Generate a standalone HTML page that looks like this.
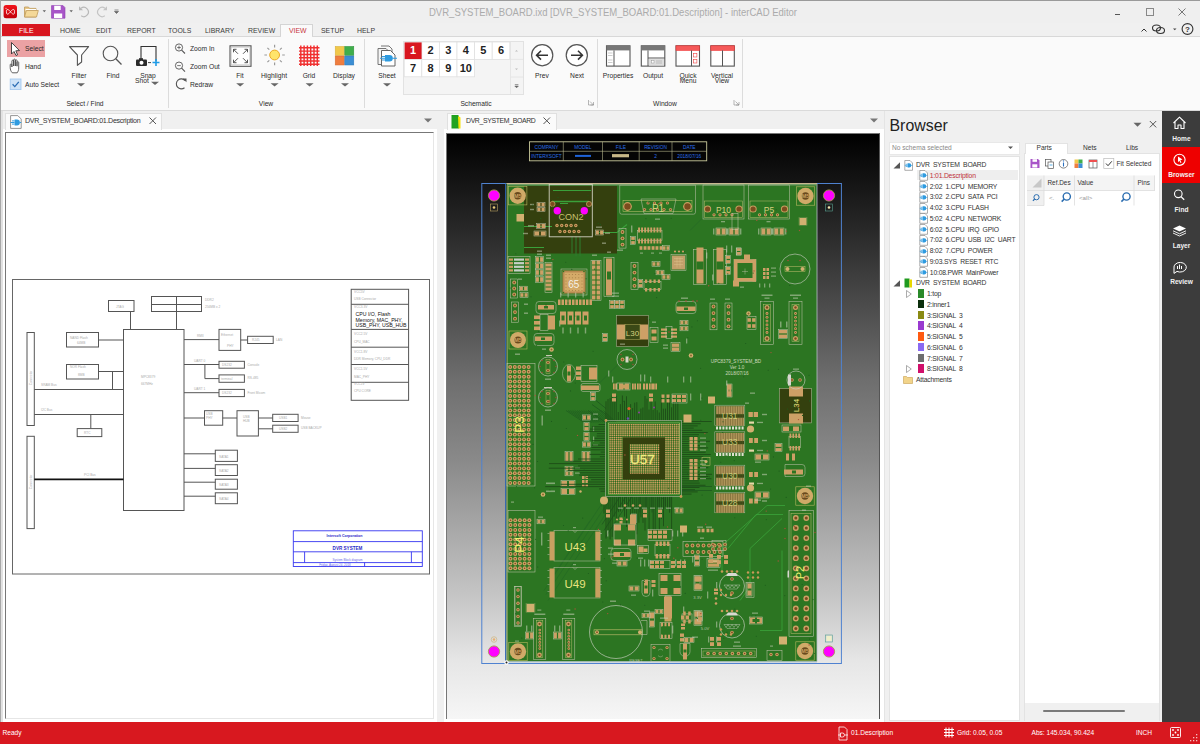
<!DOCTYPE html>
<html><head><meta charset="utf-8">
<style>
*{box-sizing:border-box}
html,body{margin:0;padding:0;width:1200px;height:744px;overflow:hidden;background:#f0f0f0;font-family:"Liberation Sans",sans-serif;color:#333}
.a{position:absolute}
.t{position:absolute;white-space:nowrap;line-height:1}
.rl{font-size:6.7px;color:#2a2a2a;text-align:center}
.sep{position:absolute;width:1px;background:#dcdcdc}
.tr{font-size:6.8px;color:#333;letter-spacing:-.2px;word-spacing:1.6px}
.sb{width:38px;text-align:center;font-size:6.6px;font-weight:bold;color:#f2f2f2}
.st{top:729.5px;font-size:6.6px;color:#fff}
.tab{position:absolute;font-size:6.9px;color:#3a3a3a;top:26.5px;white-space:nowrap}
</style></head><body>
<!-- window frame -->
<div class="a" style="left:0;top:0;width:1200px;height:1px;background:#9a9a9a"></div>
<div class="a" style="left:0;top:0;width:1px;height:744px;background:#a8a8a8"></div>

<!-- title bar -->
<div id="titlebar" class="a" style="left:1px;top:1px;width:1199px;height:22px;background:#efefef"></div>
<div class="t" style="left:429px;top:7.2px;font-size:11px;color:#ababab;transform:scaleX(.865);transform-origin:0 0">DVR_SYSTEM_BOARD.ixd [DVR_SYSTEM_BOARD:01.Description] - interCAD Editor</div>

<!-- ribbon tabs -->
<div class="a" style="left:2px;top:24px;width:48px;height:12px;background:#d8161f"></div>
<div class="tab" style="left:19px;color:#fff">FILE</div>
<div class="tab" style="left:60px">HOME</div>
<div class="tab" style="left:96px">EDIT</div>
<div class="tab" style="left:127px">REPORT</div>
<div class="tab" style="left:168px">TOOLS</div>
<div class="tab" style="left:205px">LIBRARY</div>
<div class="tab" style="left:248px">REVIEW</div>
<div class="a" style="left:280px;top:24px;width:33px;height:13px;background:#fafafa;border:1px solid #d4d4d4;border-bottom:none"></div>
<div class="tab" style="left:289px;color:#c8353a">VIEW</div>
<div class="a" style="left:281px;top:36px;width:31px;height:2px;background:#fafafa;z-index:2"></div>
<div class="tab" style="left:321px">SETUP</div>
<div class="tab" style="left:357px">HELP</div>

<!-- ribbon body -->
<div id="ribbon" class="a" style="left:1px;top:36px;width:1199px;height:75px;background:#fafafa;border-top:1px solid #d8d8d8;border-bottom:1px solid #dadada"></div>


<!-- quick access -->
<svg class="a" style="left:0;top:0" width="130" height="23" viewBox="0 0 130 23">
  <defs><linearGradient id="lg" x1="0" y1="0" x2="0" y2="1"><stop offset="0" stop-color="#f2141c"/><stop offset="1" stop-color="#c2000a"/></linearGradient></defs>
  <rect x="3.6" y="5" width="13.4" height="13.2" rx="2.5" fill="url(#lg)"/>
  <path d="M7.2 9.4 C8.6 9.4 10.3 11.3 10.4 11.7 C10.3 12.1 8.6 14.2 7.2 14.2 C6.2 14.2 6.1 9.4 7.2 9.4 Z M13.7 9.4 C14.8 9.4 14.8 14.2 13.7 14.2 C12.3 14.2 10.6 12.1 10.5 11.7 C10.6 11.3 12.3 9.4 13.7 9.4 Z" fill="none" stroke="#fff" stroke-width=".8"/>
  <circle cx="6" cy="8.3" r=".55" fill="#fff"/>
  <!-- folder -->
  <path d="M24.5 7 h4 l1 1.4 h6.5 v8.6 h-11.5z" fill="#e8c98a" stroke="#bf9a5a" stroke-width=".8"/>
  <path d="M25.5 9 h10.5 v1.5 h-10.5z" fill="#fff"/>
  <path d="M24.5 17 l1.8 -6.5 h12 l-1.8 6.5z" fill="#f4d898" stroke="#bf9a5a" stroke-width=".8"/>
  <path d="M42.6 10.3 h3.4 l-1.7 2z" fill="#666"/>
  <!-- save -->
  <path d="M51.5 5.6 h11.5 l2 2 v10.6 h-13.5z" fill="#a855c8" stroke="#8e3fb0" stroke-width=".6"/>
  <rect x="54.2" y="5.8" width="6.5" height="4.2" fill="#fff"/>
  <rect x="54" y="13.5" width="8.2" height="4.5" fill="#fff"/>
  <path d="M69.5 10.3 h3.4 l-1.7 2z" fill="#666"/>
  <!-- undo / redo -->
  <path d="M81 8.3 A4.6 4.6 0 1 1 81.2 15.8" fill="none" stroke="#b8b8b8" stroke-width="1.2"/>
  <path d="M79 6.2 v4 h4z" fill="#b8b8b8"/>
  <path d="M105 8.3 A4.6 4.6 0 1 0 104.8 15.8" fill="none" stroke="#c4c4c4" stroke-width="1.2"/>
  <path d="M107 6.2 v4 h-4z" fill="#c4c4c4"/>
  <path d="M114.5 10 h4 M114.5 11.5 h4 l-2 2z" stroke="#666" stroke-width=".7" fill="#666"/>
</svg>
<!-- window controls -->
<svg class="a" style="left:1100px;top:0" width="100" height="40" viewBox="1100 0 100 40">
  <path d="M1115 14.5 h5" stroke="#555" stroke-width="1"/>
  <rect x="1146.5" y="8.5" width="7" height="7" fill="none" stroke="#888" stroke-width="1"/>
  <path d="M1178.5 8.5 l7 7 M1185.5 8.5 l-7 7" stroke="#777" stroke-width="1"/>
  <path d="M1141.5 31.5 l2.5 -2.5 l2.5 2.5" fill="none" stroke="#333" stroke-width="1"/>
  <ellipse cx="1156.5" cy="28" rx="4" ry="3" fill="none" stroke="#333" stroke-width="1.1"/>
  <ellipse cx="1160.5" cy="30.5" rx="4" ry="3" fill="none" stroke="#333" stroke-width="1.1"/>
  <path d="M1173 28.5 h3.5 l-1.75 1.8z" fill="#444"/>
  <circle cx="1187.5" cy="29" r="5.4" fill="none" stroke="#333" stroke-width="1.1"/>
  <text x="1187.5" y="32" font-size="8" font-weight="bold" text-anchor="middle" fill="#333" font-family="Liberation Sans">?</text>
</svg>

<!-- ===== Ribbon: Select / Find ===== -->
<div class="a" style="left:7px;top:39.5px;width:38px;height:17.5px;background:#eba2a4"></div>
<svg class="a" style="left:0;top:36px" width="365" height="74" viewBox="0 36 365 74">
  <!-- cursor -->
  <path d="M11.5 42.5 L11.5 54 L14 51.5 L16 55.5 L17.6 54.8 L15.8 50.8 L19.5 50.6 Z" fill="#fff" stroke="#333" stroke-width=".9" stroke-linejoin="round"/>
  <!-- hand -->
  <path d="M12.3 72.8 C10.8 71.2 10.2 69.5 10.2 67.5 L10.2 64.8 C10.2 63.7 11.9 63.7 11.9 64.8 L11.9 67 L11.9 61 C11.9 59.9 13.6 59.9 13.6 61 L13.6 66 L13.6 59.9 C13.6 58.8 15.3 58.8 15.3 59.9 L15.3 66 L15.3 60.6 C15.3 59.5 17 59.5 17 60.6 L17 66.2 L17 62.5 C17 61.4 18.7 61.4 18.7 62.5 L18.7 68 C18.7 70.2 18 71.6 17.2 72.8 Z" fill="#fff" stroke="#444" stroke-width=".85" stroke-linejoin="round"/>
  <!-- checkbox -->
  <rect x="10.2" y="79" width="10.8" height="10.6" fill="#cfe3f7" stroke="#9fc6ee" stroke-width=".8"/>
  <path d="M12.6 84.3 L14.8 86.6 L18.8 81.8" fill="none" stroke="#2b6cb3" stroke-width="1.3"/>
  <!-- funnel -->
  <path d="M69.5 46.6 L88.6 46.6 L81.6 55 L81.6 62 L77.4 65.3 L77.4 55 Z" fill="#fff" stroke="#555" stroke-width="1.1" stroke-linejoin="round"/>
  <path d="M77 83.2 h8 l-4 3.2z" fill="#666"/>
  <!-- find -->
  <circle cx="110.5" cy="53.5" r="7.3" fill="none" stroke="#555" stroke-width="1.1"/>
  <path d="M115.8 58.8 L121.5 64.5" stroke="#555" stroke-width="1.3"/>
  <!-- snapshot -->
  <path d="M141 61 V46.5 H156 V61" fill="none" stroke="#333" stroke-width="1.1"/>
  <rect x="136" y="59.5" width="11" height="6.5" rx="1" fill="#2b2b2b"/>
  <rect x="139" y="58.2" width="4" height="2" fill="#2b2b2b"/>
  <circle cx="141.5" cy="62.8" r="2" fill="#fff"/>
  <path d="M148 62.6 h3" stroke="#444" stroke-width="1"/>
  <path d="M152.5 62.5 h7 M156 59 v7" stroke="#1e9be6" stroke-width="1.6"/>
  <path d="M151 81.8 h8 l-4 3.2z" fill="#666"/>
  <!-- Zoom in/out/redraw -->
  <circle cx="179" cy="47.5" r="3.6" fill="none" stroke="#555" stroke-width=".9"/>
  <path d="M181.6 50.1 L185 53.5" stroke="#555" stroke-width="1.1"/>
  <path d="M177.2 47.5 h3.6 M179 45.7 v3.6" stroke="#555" stroke-width=".8"/>
  <circle cx="179" cy="65.6" r="3.6" fill="none" stroke="#555" stroke-width=".9"/>
  <path d="M181.6 68.2 L185 71.6" stroke="#555" stroke-width="1.1"/>
  <path d="M177.2 65.6 h3.6" stroke="#555" stroke-width=".8"/>
  <path d="M185 80.5 A5 5 0 1 0 184.5 87.8" fill="none" stroke="#555" stroke-width="1.1"/>
  <path d="M182.5 78.5 h4 v3.8z" fill="#555"/>
  <!-- Fit -->
  <rect x="230" y="45.8" width="21" height="20.5" fill="#fff" stroke="#555" stroke-width="1.1"/>
  <rect x="231.6" y="47.4" width="17.8" height="17.3" fill="none" stroke="#c8c8c8" stroke-width=".6"/>
  <path d="M233.5 49.3 l4.5 4.5 M233.5 49.3 h3 M233.5 49.3 v3 M247.5 49.3 l-4.5 4.5 M247.5 49.3 h-3 M247.5 49.3 v3 M233.5 62.7 l4.5 -4.5 M233.5 62.7 h3 M233.5 62.7 v-3 M247.5 62.7 l-4.5 -4.5 M247.5 62.7 h-3 M247.5 62.7 v-3" stroke="#444" stroke-width=".9" fill="none"/>
  <path d="M236.2 83.2 h8 l-4 3.2z" fill="#666"/>
  <!-- Highlight sun -->
  <circle cx="274.6" cy="55" r="4.9" fill="#ffe46b" stroke="#eba92a" stroke-width="1"/>
  <g stroke="#9a9a9a" stroke-width="1.2">
   <path d="M274.6 44.8 v2.6 M274.6 62.6 v2.6 M264.4 55 h2.6 M282.2 55 h2.6 M267.4 47.8 l1.9 1.9 M279.9 60.3 l1.9 1.9 M281.8 47.8 l-1.9 1.9 M269.3 60.3 l-1.9 1.9"/>
  </g>
  <path d="M270.6 83.2 h8 l-4 3.2z" fill="#666"/>
  <!-- Grid -->
  <g stroke="#f03030" stroke-width="1.45">
   <path d="M299 47.8 h20.5 M299 51.1 h20.5 M299 54.4 h20.5 M299 57.7 h20.5 M299 61 h20.5 M299 64.3 h20.5"/>
   <path d="M300.8 45.5 v20.6 M304.1 45.5 v20.6 M307.4 45.5 v20.6 M310.7 45.5 v20.6 M314 45.5 v20.6 M317.3 45.5 v20.6"/>
  </g>
  <path d="M305.6 83.2 h8 l-4 3.2z" fill="#666"/>
  <!-- Display -->
  <rect x="335.2" y="46.4" width="9" height="9" fill="#f1c84a" stroke="#d6ad3a" stroke-width=".5"/>
  <rect x="344.8" y="46.4" width="9" height="9" fill="#3fae4b" stroke="#2e8f3a" stroke-width=".5"/>
  <rect x="335.2" y="56" width="9" height="9" fill="#ef7d3f" stroke="#d36a30" stroke-width=".5"/>
  <rect x="344.8" y="56" width="9" height="9" fill="#3b8ed4" stroke="#2c78b8" stroke-width=".5"/>
  <path d="M341 83.2 h8 l-4 3.2z" fill="#666"/>
</svg>
<div class="sep" style="left:167.5px;top:39px;height:69px"></div>
<div class="sep" style="left:364px;top:39px;height:69px"></div>
<div class="t rl" style="left:25px;top:45.5px">Select</div>
<div class="t rl" style="left:25px;top:63.5px">Hand</div>
<div class="t rl" style="left:25px;top:81.5px">Auto Select</div>
<div class="t rl" style="left:59px;width:40px;top:72.5px">Filter</div>
<div class="t rl" style="left:93px;width:40px;top:72.5px">Find</div>
<div class="t rl" style="left:128px;width:40px;top:72.5px">Snap</div>
<div class="t rl" style="left:135px;top:78px">Shot</div>
<div class="t rl" style="left:45px;width:80px;top:101px">Select / Find</div>
<div class="t rl" style="left:190px;top:45.5px">Zoom In</div>
<div class="t rl" style="left:190px;top:63.5px">Zoom Out</div>
<div class="t rl" style="left:190px;top:81.5px">Redraw</div>
<div class="t rl" style="left:220px;width:40px;top:72.5px">Fit</div>
<div class="t rl" style="left:254px;width:40px;top:72.5px">Highlight</div>
<div class="t rl" style="left:289px;width:40px;top:72.5px">Grid</div>
<div class="t rl" style="left:324px;width:40px;top:72.5px">Display</div>
<div class="t rl" style="left:226px;width:80px;top:101px">View</div>

<!-- ===== Ribbon: Schematic ===== -->
<svg class="a" style="left:365px;top:36px" width="380" height="74" viewBox="365 36 380 74">
  <!-- sheet icon -->
  <path d="M378 48.5 h8 l3 3 v13 h-11z" fill="#f4f4f4" stroke="#666" stroke-width=".9"/>
  <path d="M381 46 h8 l3 3 v13" fill="none" stroke="#666" stroke-width=".9"/>
  <path d="M381.5 50.5 h9 l4.5 4.5 v11 h-13.5z" fill="#fff" stroke="#555" stroke-width=".9"/>
  <path d="M385 55 h4.5 a3.3 3.3 0 0 1 0 6.6 h-4.5z" fill="#2e9be0"/>
  <path d="M380 58.3 h5 M392.5 58.3 h4.5 M382 56.5 h3 M382 60 h3" stroke="#2e9be0" stroke-width="1.1"/>
  <path d="M383 83.2 h8 l-4 3.2z" fill="#666"/>
  <!-- gallery -->
  <rect x="403.5" y="41.5" width="120" height="53" fill="#f4f4f4" stroke="#e2e2e2" stroke-width="1"/>
  <g fill="#fff" stroke="#e0e0e0" stroke-width=".8">
   <rect x="421.8" y="42" width="17.6" height="17.4"/><rect x="439.4" y="42" width="17.6" height="17.4"/><rect x="457" y="42" width="17.6" height="17.4"/><rect x="474.6" y="42" width="17.6" height="17.4"/><rect x="492.2" y="42" width="17.6" height="17.4"/>
   <rect x="404.2" y="59.4" width="17.6" height="17.4"/><rect x="421.8" y="59.4" width="17.6" height="17.4"/><rect x="439.4" y="59.4" width="17.6" height="17.4"/><rect x="457" y="59.4" width="17.6" height="17.4"/>
  </g>
  <rect x="404.6" y="42.4" width="17" height="16.6" fill="#d8161f"/>
  <path d="M510.5 42 v52.5 M510.5 59.4 h13 M510.5 77 h13" stroke="#e2e2e2" stroke-width=".8"/>
  <path d="M515 51.5 l1.5 -1.5 l1.5 1.5z M515 68.5 l1.5 1.5 l1.5 -1.5z" fill="#bbb"/>
  <path d="M514.8 84.5 h3.6 M514.8 86 h3.6 l-1.8 1.8z" stroke="#666" stroke-width=".6" fill="#666"/>
  <!-- prev/next -->
  <circle cx="542.2" cy="55.2" r="10.6" fill="#fff" stroke="#555" stroke-width="1.2"/>
  <path d="M536.5 55.2 h11.5 M541 50.8 l-4.4 4.4 l4.4 4.4" fill="none" stroke="#333" stroke-width="1.6"/>
  <circle cx="576.8" cy="55.2" r="10.6" fill="#fff" stroke="#555" stroke-width="1.2"/>
  <path d="M571 55.2 h11.5 M578 50.8 l4.4 4.4 l-4.4 4.4" fill="none" stroke="#333" stroke-width="1.6"/>
  <!-- dialog launchers -->
  <path d="M588.5 100 v5 h5 M590 101.5 l3.5 3.5 M593.5 102 v3 h-3" fill="none" stroke="#888" stroke-width=".6"/>
  <path d="M734 100 v5 h5 M735.5 101.5 l3.5 3.5 M739 102 v3 h-3" fill="none" stroke="#888" stroke-width=".6"/>
  <!-- window icons -->
  <rect x="606.5" y="45.8" width="23.5" height="20.3" fill="#fff" stroke="#555" stroke-width="1.1"/>
  <rect x="606.5" y="45.8" width="23.5" height="4.6" fill="#777"/>
  <path d="M614 50.4 v15.7" stroke="#555" stroke-width="1"/>
  <path d="M608 53 h4.5 M608 55.5 h4.5 M608 60 h4.5 M608 62.5 h4.5" stroke="#aaa" stroke-width=".6"/>
  <rect x="641.3" y="45.8" width="23.5" height="20.3" fill="#fff" stroke="#555" stroke-width="1.1"/>
  <rect x="641.3" y="45.8" width="23.5" height="4.6" fill="#777"/>
  <path d="M648 50.4 v15.7 M648 58 h16.8" stroke="#555" stroke-width="1"/>
  <rect x="649" y="59" width="15" height="6.5" fill="#ddd"/>
  <rect x="651.5" y="60.5" width="2.5" height="2.5" fill="#fff" stroke="#888" stroke-width=".4"/>
  <path d="M656 61 h6 M656 63 h6" stroke="#999" stroke-width=".5"/>
  <rect x="676" y="45.8" width="23.5" height="20.3" fill="#fff" stroke="#555" stroke-width="1.1"/>
  <rect x="676" y="45.8" width="23.5" height="4.6" fill="#f55a5a" stroke="#ee3030" stroke-width=".6"/>
  <path d="M691.5 50.4 v15.7" stroke="#555" stroke-width="1"/>
  <rect x="693.4" y="53.5" width="3.5" height="3.5" fill="#fff" stroke="#f04040" stroke-width=".6"/>
  <rect x="693.4" y="59.5" width="3.5" height="3.5" fill="#fff" stroke="#f04040" stroke-width=".6"/>
  <rect x="710.8" y="45.8" width="23.5" height="20.3" fill="#fff" stroke="#555" stroke-width="1.1"/>
  <rect x="710.8" y="45.8" width="23.5" height="4.6" fill="#f55a5a" stroke="#ee3030" stroke-width=".6"/>
  <path d="M722.5 50.4 v15.7" stroke="#555" stroke-width="1"/>
</svg>
<div class="t" style="left:404.6px;top:45px;width:17px;text-align:center;font-size:11px;font-weight:bold;color:#fff">1</div>
<div class="t" style="left:421.8px;top:45px;width:17.6px;text-align:center;font-size:11px;font-weight:bold;color:#222">2</div>
<div class="t" style="left:439.4px;top:45px;width:17.6px;text-align:center;font-size:11px;font-weight:bold;color:#222">3</div>
<div class="t" style="left:457px;top:45px;width:17.6px;text-align:center;font-size:11px;font-weight:bold;color:#222">4</div>
<div class="t" style="left:474.6px;top:45px;width:17.6px;text-align:center;font-size:11px;font-weight:bold;color:#222">5</div>
<div class="t" style="left:492.2px;top:45px;width:17.6px;text-align:center;font-size:11px;font-weight:bold;color:#222">6</div>
<div class="t" style="left:404.2px;top:62.5px;width:17.6px;text-align:center;font-size:11px;font-weight:bold;color:#222">7</div>
<div class="t" style="left:421.8px;top:62.5px;width:17.6px;text-align:center;font-size:11px;font-weight:bold;color:#222">8</div>
<div class="t" style="left:439.4px;top:62.5px;width:17.6px;text-align:center;font-size:11px;font-weight:bold;color:#222">9</div>
<div class="t" style="left:457px;top:62.5px;width:17.6px;text-align:center;font-size:11px;font-weight:bold;color:#222">10</div>
<div class="sep" style="left:596.5px;top:39px;height:69px"></div>
<div class="sep" style="left:741.5px;top:39px;height:69px"></div>
<div class="t rl" style="left:367px;width:40px;top:72.5px">Sheet</div>
<div class="t rl" style="left:522px;width:40px;top:72.5px">Prev</div>
<div class="t rl" style="left:557px;width:40px;top:72.5px">Next</div>
<div class="t rl" style="left:436px;width:80px;top:101px">Schematic</div>
<div class="t rl" style="left:598px;width:40px;top:72.5px">Properties</div>
<div class="t rl" style="left:633px;width:40px;top:72.5px">Output</div>
<div class="t rl" style="left:668px;width:40px;top:72.5px;line-height:5.4px">Quick<br>Menu</div>
<div class="t rl" style="left:702px;width:40px;top:72.5px;line-height:5.4px">Vertical<br>View</div>
<div class="t rl" style="left:625px;width:80px;top:101px">Window</div>


<!-- doc area bg -->
<div class="a" style="left:1px;top:111px;width:1199px;height:611px;background:#f0f0f0"></div>
<div class="a" style="left:1px;top:111px;width:1.5px;height:611px;background:#e2e2e2"></div>

<!-- LEFT PANEL -->
<div class="a" style="left:2.5px;top:129px;width:434.5px;height:593px;background:#fff"></div>
<div class="a" style="left:4.5px;top:112.5px;width:157px;height:17px;background:#fbfbfb;border:1px solid #e0e0e0;border-bottom:none"></div>
<svg class="a" style="left:10px;top:114.5px" width="13" height="14" viewBox="0 0 13 14">
  <path d="M.6 .6 h7.2 l3.4 3.4 v9.4 h-10.6z" fill="#fff" stroke="#7a7a7a" stroke-width=".8"/>
  <path d="M4.6 4.6 h2.4 a2.9 2.9 0 0 1 0 5.8 h-2.4z" fill="#2e9be0"/>
  <path d="M.6 7.5 h4 M9.9 7.5 h1.3 M2 5.9 h2.6 M2 9.1 h2.6" stroke="#2e9be0" stroke-width="1"/>
</svg>
<div class="t" style="left:25px;top:117.5px;font-size:7.1px;color:#333;letter-spacing:-.3px">DVR_SYSTEM_BOARD:01.Description</div>
<svg class="a" style="left:148px;top:116px" width="10" height="10"><path d="M1.5 1.5 l6.5 6.5 M8 1.5 l-6.5 6.5" stroke="#555" stroke-width="1"/></svg>
<svg class="a" style="left:424px;top:118px" width="10" height="6"><path d="M0 0.5 h8 l-4 4z" fill="#777"/></svg>
<div id="lcanvas" class="a" style="left:5px;top:131.5px;width:429px;height:587px;background:#fff;border-left:1.2px solid #777;border-top:1.2px solid #777;border-right:1px solid #e6e6e6;border-bottom:1px solid #e6e6e6"></div>


<svg class="a" style="left:6px;top:133px" width="427" height="585" viewBox="6 133 427 585" font-family="Liberation Sans">
 <g fill="none" stroke="#555" stroke-width="1">
  <rect x="12.5" y="279.5" width="417" height="294.5" stroke="#666"/>
  <rect x="108.5" y="300.5" width="25.5" height="11"/>
  <rect x="151.5" y="296.5" width="50" height="15"/>
  <path d="M151.5 304.5 h50 M176.5 296.5 v15"/>
  <path d="M130.5 311.5 v18 M176.5 311.5 v18"/>
  <rect x="123.5" y="329.5" width="60.5" height="181"/>
  <rect x="66.5" y="332.5" width="32" height="14.5"/>
  <rect x="66.5" y="364.5" width="32" height="14.5"/>
  <path d="M98.5 340 h25 M98.5 371.5 h25 M112.5 371.5 v18"/>
  <rect x="27" y="332.5" width="7.3" height="93"/>
  <path d="M34.3 389.5 h89.2 M34.3 414.5 h89.2 M90.8 414.5 v14"/>
  <rect x="77.2" y="428.6" width="24.6" height="8"/>
  <rect x="27" y="436.3" width="7.3" height="92.3"/>
  <path d="M34.3 479.3 h89.2" stroke="#111" stroke-width="1.8"/>
  <path d="M184 339.6 h35 M240.7 340 h7 M184 364.5 h35 M204.9 364.5 v14.1 h14.1 M184 392.7 h35 M184 418 h20.5 M222.7 418 h14.3 M258.4 418 h14.3 M258.4 428.8 h14.3"/>
  <rect x="219" y="329.4" width="21.7" height="21"/>
  <rect x="247.6" y="336.3" width="25.6" height="7.2"/>
  <rect x="219" y="361.3" width="25.4" height="6.9"/>
  <rect x="219" y="374.9" width="25.4" height="7.4"/>
  <rect x="219" y="389.4" width="25.4" height="7.2"/>
  <rect x="204.5" y="410.7" width="18.2" height="14.5"/>
  <rect x="237" y="410.7" width="21.4" height="25.3"/>
  <rect x="272.7" y="414.3" width="25.4" height="7.2"/>
  <rect x="272.7" y="425.2" width="25.4" height="7.1"/>
  <path d="M184 453.8 h31.3 M184 468.4 h31.3 M184 482.2 h31.3 M184 496.2 h31.3"/>
  <rect x="215.3" y="450.2" width="22.1" height="11.2"/>
  <rect x="215.3" y="464.7" width="22.1" height="10.8"/>
  <rect x="215.3" y="479.2" width="22.1" height="10"/>
  <rect x="215.3" y="492.8" width="22.1" height="10.9"/>
  <rect x="351.2" y="289.3" width="57.4" height="111"/>
  <path d="M351.2 304.3 h57.4 M351.2 329.4 h57.4 M351.2 347.2 h57.4 M351.2 364.5 h57.4 M351.2 382.3 h57.4"/>
 </g>
 <g fill="#aaa" font-size="3.2">
  <text x="116" y="307.5">JTAG</text>
  <text x="205" y="301">DDR2</text>
  <text x="205" y="308">256MB x 2</text>
  <text x="70" y="339">NAND Flash</text><text x="77" y="343.5">64MB</text>
  <text x="70" y="368">NOR Flash</text><text x="78" y="375.5">8MB</text>
  <text x="141" y="378">MPC8379</text><text x="141" y="385">667MHz</text>
  <text x="41" y="386">SRAM Bus</text>
  <text x="41" y="411">I2C Bus</text>
  <text x="84" y="434">RTC</text>
  <text x="84" y="476">PCI Bus</text>
  <text transform="translate(32 378) rotate(-90)" text-anchor="middle">Connector</text>
  <text transform="translate(32 482) rotate(-90)" text-anchor="middle">Connector</text>
  <text x="197" y="336.5">RMII</text>
  <text x="221" y="336">Ethernet</text><text x="227" y="347">PHY</text>
  <text x="252" y="341">RJ45</text><text x="276" y="340.5">LAN</text>
  <text x="194" y="361.5">UART 0</text><text x="194" y="389.5">UART 1</text>
  <text x="222" y="366">DS232</text><text x="247.5" y="365.5">Console</text>
  <text x="221" y="380">terminal</text><text x="247.5" y="379">RS-485</text>
  <text x="222" y="394">DS232</text><text x="247.5" y="393.5">Front Micom</text>
  <text x="206" y="414.5">USB</text><text x="206" y="418.5">PHY</text>
  <text x="243" y="418">USB</text><text x="243" y="422">HUB</text>
  <text x="279" y="419">USB1</text><text x="301" y="418.5">Mouse</text>
  <text x="279" y="430">USB2</text><text x="301" y="429">USB BACKUP</text>
  <text x="219" y="457.5">SATA1</text><text x="219" y="471.5">SATA2</text><text x="219" y="485.5">SATA3</text><text x="219" y="499.5">SATA4</text>
  <text x="354" y="292.5">VCC5V</text><text x="354" y="300">USB Connector</text>
  <text x="354" y="307.5">VCC3.3V</text>
  <text x="354" y="335">VCC2.5V</text><text x="354" y="342.5">CPU_MAC</text>
  <text x="354" y="353">VCC1.8V</text><text x="354" y="360">DDR Memory, CPU_DDR</text>
  <text x="354" y="370">VCC1.5V</text><text x="354" y="377.5">MAC_PHY</text>
  <text x="354" y="385">VCC1V</text><text x="354" y="392">CPU CORE</text>
 </g>
 <g fill="#111" font-size="5.2">
  <text x="355.5" y="316">CPU I/O, Flash</text>
  <text x="355.5" y="321.5">Memory, MAC_PHY,</text>
  <text x="355.5" y="327">USB_PHY, USB_HUB</text>
 </g>
 <g fill="none" stroke="#3434f0" stroke-width=".9">
  <rect x="293.3" y="530.8" width="129" height="35.7"/>
  <path d="M293.3 541.6 h129 M293.3 551.8 h129 M293.3 562.6 h129 M304.6 551.8 v10.8 M411.4 551.8 v10.8 M364.6 562.6 v3.9"/>
 </g>
 <g fill="#2a2ac8" font-weight="bold" text-anchor="middle">
  <text x="344.5" y="536.5" font-size="3.6">Intersoft Corporation</text>
  <text x="347.5" y="549.5" font-size="4.6">DVR SYSTEM</text>
 </g>
 <g fill="#6a6ae8" font-size="3" text-anchor="middle">
  <text x="347.5" y="561">System Block diagram</text>
  <text x="335" y="565.5">Friday, August 24, 2018</text>
 </g>
</svg>

<!-- MIDDLE PANEL -->
<div class="a" style="left:444px;top:129px;width:439.5px;height:593px;background:#fff"></div>
<div class="a" style="left:446.5px;top:112.5px;width:110px;height:17px;background:#fbfbfb;border:1px solid #e0e0e0;border-bottom:none"></div>
<svg class="a" style="left:450px;top:114px" width="14" height="15" viewBox="0 0 14 15">
  <path d="M1.5 1 h6.5 l1 1 v12.5 h-7.5z" fill="#1ea01e"/>
  <path d="M8 2 l2.5 1.5 v11 h-2z" fill="#f5e10a"/>
  <path d="M2 4 h6 M2 6 h6 M2 8 h6 M2 10 h6 M2 12 h6" stroke="#36b336" stroke-width=".4"/>
</svg>
<div class="t" style="left:466px;top:117.8px;font-size:6.9px;color:#333;letter-spacing:-.35px">DVR_SYSTEM_BOARD</div>
<svg class="a" style="left:542px;top:116px" width="10" height="10"><path d="M1.5 1.5 l6.5 6.5 M8 1.5 l-6.5 6.5" stroke="#555" stroke-width="1"/></svg>
<svg class="a" style="left:869.5px;top:118px" width="10" height="6"><path d="M0 0.5 h8 l-4 4z" fill="#777"/></svg>
<div id="mcanvas" class="a" style="left:446px;top:132.5px;width:434px;height:586px;border-left:1.2px solid #777;border-top:1.2px solid #777;border-right:1px solid #555;background:linear-gradient(#000 0%,#2a2a2a 17%,#6e6e6e 42%,#8a8a8a 56%,#c8c8c8 80%,#e6e6e6 90%,#f6f6f6 100%)"></div>

<!--PCB-->
<svg class="a" style="left:447px;top:133.5px" width="433" height="585" viewBox="447 133.5 433 585" font-family="Liberation Sans">
<rect x="481.8" y="183" width="359.6" height="480" fill="none" stroke="#4f82d0" stroke-width="1"/>
<g>
<rect x="529.5" y="141.3" width="177.2" height="19.0" fill="#050505" stroke="#c8c89a" stroke-width=".9"/>
<path d="M529.5 150.8 h177.2 M563.3 141.3 v19 M602.5 141.3 v19 M639.2 141.3 v19 M672 141.3 v19" stroke="#b4b48a" stroke-width=".6"/>
<text x="546.4" y="148.4" font-size="4.8" fill="#2a6ee8" text-anchor="middle" >COMPANY</text>
<text x="582.9" y="148.4" font-size="4.8" fill="#2a6ee8" text-anchor="middle" >MODEL</text>
<text x="620.8" y="148.4" font-size="4.8" fill="#2a6ee8" text-anchor="middle" >FILE</text>
<text x="655.6" y="148.4" font-size="4.8" fill="#2a6ee8" text-anchor="middle" >REVISION</text>
<text x="689.3" y="148.4" font-size="4.8" fill="#2a6ee8" text-anchor="middle" >DATE</text>
<text x="546.4" y="157.8" font-size="4.8" fill="#2a6ee8" text-anchor="middle" >INTERXSOFT</text>
<text x="655.6" y="157.8" font-size="4.8" fill="#2a6ee8" text-anchor="middle" >2</text>
<text x="689.3" y="157.8" font-size="4.8" fill="#2a6ee8" text-anchor="middle" >2018/07/16</text>
<rect x="575.0" y="154.4" width="16.0" height="2.0" fill="#1e63d8" />
<rect x="612.0" y="153.6" width="17.0" height="3.2" fill="#c8b888" />
</g>
<circle cx="494.0" cy="195.0" r="5.6" fill="#ff00ff" stroke="#a89a50" stroke-width=".9"/>
<circle cx="829.0" cy="195.0" r="5.6" fill="#ff00ff" stroke="#a89a50" stroke-width=".9"/>
<circle cx="494.0" cy="651.0" r="5.6" fill="#ff00ff" stroke="#a89a50" stroke-width=".9"/>
<circle cx="829.0" cy="651.0" r="5.6" fill="#ff00ff" stroke="#a89a50" stroke-width=".9"/>
<rect x="490.5" y="203.5" width="7.0" height="7.0" fill="none" stroke="#b8a060" stroke-width="0.6"/>
<circle cx="494.0" cy="207.0" r="1.3" fill="#e8c878" />
<rect x="825.5" y="203.5" width="7.0" height="7.0" fill="none" stroke="#58a090" stroke-width="0.6"/>
<circle cx="829.0" cy="207.0" r="1.3" fill="#f4e8b0" />
<circle cx="494.0" cy="639.0" r="2.8" fill="none" stroke="#c8a860" stroke-width="0.5"/>
<circle cx="494.0" cy="639.0" r="1.2" fill="#e8b070" />
<rect x="825.5" y="634.5" width="7.0" height="7.0" fill="none" stroke="#58a090" stroke-width="0.6"/>
<rect x="826.5" y="635.5" width="5.0" height="5.0" fill="#f0f0c8" />
<rect x="506.5" y="182.5" width="310.5" height="478.5" fill="#2c7522" />
<path d="M506.5 183 h310.5" stroke="#c8b890" stroke-width="1"/>
<path d="M507 184.3 h309.5" stroke="#d8d8c8" stroke-width=".6"/>
<path d="M505.6 183 v478" stroke="#2e64b0" stroke-width="1"/>
<path d="M507.3 185 v476" stroke="#c8b888" stroke-width=".6"/>
<path d="M506.5 661.5 h310.5" stroke="#b8c8d8" stroke-width="1.2"/>
<path d="M817 183 v478" stroke="#b8c0c8" stroke-width=".8"/>
<circle cx="506.5" cy="662.0" r="2.2" fill="#fff" />
<circle cx="506.5" cy="662.0" r="1.0" fill="#222" />
<path d="M524 185.5 H617 V253 H524 Z" fill="#34400e"/>
<path d="M560 203 h8 M553 190 h38 M524 226 h28 M524 247 h20 M598 232 h19 l10 -8" stroke="#3aa03a" stroke-width="1.2" fill="none"/>
<path d="M572 236 v17 M576 236 v20 M580 236 v20" stroke="#2e7a2e" stroke-width="1.1"/>
<path d="M566.0 410 l18.0 12 M568.2 410 l17.7 12 M570.4 410 l17.4 12 M572.6 410 l17.1 12 M574.8 410 l16.8 12 M577.0 410 l16.5 12 M579.2 410 l16.2 12 M581.4 410 l15.9 12 M583.6 410 l15.6 12 M585.8 410 l15.3 12 M588.0 410 l15.0 12 M590.2 410 l14.7 12 M592.4 410 l14.4 12 M594.6 410 l14.1 12 M596.8 410 l13.8 12 M599.0 410 l13.5 12 M601.2 410 l13.2 12 M603.4 410 l12.9 12" stroke="#1f5e1f" stroke-width=".8" fill="none"/>
<path d="M588 410 l18 12 M592 404 l14 10 M596 400 l10 8 M682 430 h8 M682 436 h8 M682 486 h30 M682 490 h30 M620 496 l-18 28 M626 496 l-22 34 M632 496 l-26 40 M640 496 v16 M646 496 v16 M652 496 v16 M658 496 v12 M664 496 v12 M670 496 v12" stroke="#1f5a1f" stroke-width=".9" fill="none"/>
<path d="M604 500 l-60 90 M608 502 l-62 92 M612 504 l-64 96 M590 520 l-40 60" stroke="#246a24" stroke-width=".7" fill="none"/>
<path d="M728 548 l28 -34 h27 M722 572 V545 l45 -40 h18 M740 600 l10 -14 v-38 l32 -30 M760 630 h22 v-80" stroke="#3aa33a" stroke-width=".8" fill="none"/>
<path d="M596 386 l22 -22 M690 230 l14 -14 M730 268 l8 -8 M740 262 l10 -10" stroke="#256a25" stroke-width=".8" fill="none"/>
<rect x="508.5" y="186.0" width="18.4" height="18.4" fill="none" stroke="#b8b860" stroke-width="0.6"/>
<circle cx="517.7" cy="195.2" r="8.2" fill="#d0aa68" />
<circle cx="517.7" cy="195.2" r="3.7" fill="#6a4a1e" />
<text x="517.7" y="197.2" font-size="5.5" font-weight="bold" fill="#c8a060" text-anchor="middle">M5</text>
<rect x="796.3" y="186.3" width="18.4" height="18.4" fill="none" stroke="#b8b860" stroke-width="0.6"/>
<circle cx="805.5" cy="195.5" r="8.2" fill="#d0aa68" />
<circle cx="805.5" cy="195.5" r="3.7" fill="#6a4a1e" />
<text x="805.5" y="197.5" font-size="5.5" font-weight="bold" fill="#c8a060" text-anchor="middle">M5</text>
<rect x="537.0" y="201.9" width="8.0" height="4.2" fill="none" stroke="#c9c9b4" stroke-width="0.5"/>
<rect x="537.5" y="202.4" width="2.9" height="3.2" fill="#cda066" />
<rect x="541.6" y="202.4" width="2.9" height="3.2" fill="#cda066" />
<rect x="537.0" y="206.9" width="8.0" height="4.2" fill="none" stroke="#c9c9b4" stroke-width="0.5"/>
<rect x="537.5" y="207.4" width="2.9" height="3.2" fill="#cda066" />
<rect x="541.6" y="207.4" width="2.9" height="3.2" fill="#cda066" />
<rect x="530.0" y="203.3" width="4.0" height="1.4" fill="#c8d0b8" opacity=".55"/>
<rect x="530.0" y="208.3" width="4.0" height="1.4" fill="#c8d0b8" opacity=".55"/>
<rect x="516.5" y="213.5" width="7.5" height="7.5" fill="#d2b070" />
<rect x="536.5" y="223.0" width="9.0" height="5.0" fill="none" stroke="#c9c9b4" stroke-width="0.5"/>
<rect x="537.0" y="223.5" width="3.4" height="4.0" fill="#cda066" />
<rect x="541.6" y="223.5" width="3.4" height="4.0" fill="#cda066" />
<rect x="534.0" y="230.5" width="12.0" height="5.0" fill="none" stroke="#c9c9b4" stroke-width="0.5"/>
<rect x="534.5" y="231.0" width="4.6" height="4.0" fill="#cda066" />
<rect x="540.9" y="231.0" width="4.6" height="4.0" fill="#cda066" />
<rect x="528.0" y="224.6" width="6.0" height="1.4" fill="#c8d0b8" opacity=".55"/>
<rect x="523.0" y="232.3" width="5.0" height="1.4" fill="#c8d0b8" opacity=".55"/>
<rect x="549.2" y="183.9" width="43.1" height="52.4" fill="none" stroke="#d0d0c0" stroke-width="0.9"/>
<path d="M552 201 h37" stroke="#3aa03a" stroke-width="1.3"/>
<circle cx="552.5" cy="203.5" r="2.6" fill="#7b4c1e" stroke="#c8a868" stroke-width=".7"/>
<circle cx="589.0" cy="203.5" r="2.6" fill="#7b4c1e" stroke="#c8a868" stroke-width=".7"/>
<circle cx="557.3" cy="210.3" r="3.7" fill="#ff00ff" />
<circle cx="584.3" cy="210.3" r="3.7" fill="#ff00ff" />
<text x="571" y="219.5" font-size="9" fill="#c8c070" text-anchor="middle" >CON2</text>
<circle cx="557.0" cy="225.0" r="1.7" fill="#cda066" />
<circle cx="557.0" cy="225.0" r="0.7" fill="#7b4c1e" />
<circle cx="560.0" cy="231.0" r="1.7" fill="#cda066" />
<circle cx="560.0" cy="231.0" r="0.7" fill="#7b4c1e" />
<circle cx="561.7" cy="225.0" r="1.7" fill="#cda066" />
<circle cx="561.7" cy="225.0" r="0.7" fill="#7b4c1e" />
<circle cx="564.7" cy="231.0" r="1.7" fill="#cda066" />
<circle cx="564.7" cy="231.0" r="0.7" fill="#7b4c1e" />
<circle cx="566.4" cy="225.0" r="1.7" fill="#cda066" />
<circle cx="566.4" cy="225.0" r="0.7" fill="#7b4c1e" />
<circle cx="569.4" cy="231.0" r="1.7" fill="#cda066" />
<circle cx="569.4" cy="231.0" r="0.7" fill="#7b4c1e" />
<circle cx="571.1" cy="225.0" r="1.7" fill="#cda066" />
<circle cx="571.1" cy="225.0" r="0.7" fill="#7b4c1e" />
<circle cx="574.1" cy="231.0" r="1.7" fill="#cda066" />
<circle cx="574.1" cy="231.0" r="0.7" fill="#7b4c1e" />
<circle cx="575.8" cy="225.0" r="1.7" fill="#cda066" />
<circle cx="575.8" cy="225.0" r="0.7" fill="#7b4c1e" />
<circle cx="578.8" cy="231.0" r="1.7" fill="#cda066" />
<circle cx="578.8" cy="231.0" r="0.7" fill="#7b4c1e" />
<rect x="595.5" y="229.5" width="8.0" height="5.0" fill="none" stroke="#c9c9b4" stroke-width="0.5"/>
<rect x="596.0" y="230.0" width="2.9" height="4.0" fill="#cda066" />
<rect x="600.1" y="230.0" width="2.9" height="4.0" fill="#cda066" />
<rect x="596.0" y="226.0" width="6.0" height="1.4" fill="#c8d0b8" opacity=".55"/>
<rect x="605.0" y="232.0" width="5.0" height="1.4" fill="#c8d0b8" opacity=".55"/>
<rect x="602.0" y="242.0" width="4.0" height="1.4" fill="#c8d0b8" opacity=".55"/>
<path d="M619.7 184.7 h75.8 v27 a2 2 0 0 1 -2 2 h-71.8 a2 2 0 0 1 -2 -2 z" fill="none" stroke="#c9c9b4" stroke-width=".5"/>
<rect x="623.0" y="200.0" width="69.0" height="11.0" fill="none" stroke="#c8c870" stroke-width="0.5"/>
<circle cx="627.5" cy="206.0" r="4.4" fill="#c8a060" />
<circle cx="627.5" cy="206.0" r="3.2" fill="#7b4c1e" />
<circle cx="687.5" cy="206.0" r="4.4" fill="#c8a060" />
<circle cx="687.5" cy="206.0" r="3.2" fill="#7b4c1e" />
<path d="M641 198.5 h35 l-3 14.5 h-29 z" fill="none" stroke="#c9c9b4" stroke-width=".5"/>
<circle cx="648.0" cy="202.5" r="1.6" fill="#cda066" />
<circle cx="648.0" cy="202.5" r="0.8" fill="#7b4c1e" />
<circle cx="654.5" cy="202.5" r="1.6" fill="#cda066" />
<circle cx="654.5" cy="202.5" r="0.8" fill="#7b4c1e" />
<circle cx="661.0" cy="202.5" r="1.6" fill="#cda066" />
<circle cx="661.0" cy="202.5" r="0.8" fill="#7b4c1e" />
<circle cx="667.5" cy="202.5" r="1.6" fill="#cda066" />
<circle cx="667.5" cy="202.5" r="0.8" fill="#7b4c1e" />
<circle cx="644.5" cy="209.0" r="1.6" fill="#cda066" />
<circle cx="644.5" cy="209.0" r="0.8" fill="#7b4c1e" />
<circle cx="651.0" cy="209.0" r="1.6" fill="#cda066" />
<circle cx="651.0" cy="209.0" r="0.8" fill="#7b4c1e" />
<circle cx="657.5" cy="209.0" r="1.6" fill="#cda066" />
<circle cx="657.5" cy="209.0" r="0.8" fill="#7b4c1e" />
<circle cx="664.0" cy="209.0" r="1.6" fill="#cda066" />
<circle cx="664.0" cy="209.0" r="0.8" fill="#7b4c1e" />
<circle cx="670.5" cy="209.0" r="1.6" fill="#cda066" />
<circle cx="670.5" cy="209.0" r="0.8" fill="#7b4c1e" />
<text x="658" y="211" font-size="10" fill="#d6d080" text-anchor="middle" >P1</text>
<rect x="655.0" y="218.0" width="5.0" height="1.3" fill="#c8d0b8" opacity=".55"/>
<rect x="703.0" y="184.5" width="41.0" height="34.0" fill="none" stroke="#c9c9b4" stroke-width="0.5"/>
<rect x="704.5" y="200.5" width="38.0" height="16.5" fill="none" stroke="#b8c070" stroke-width="0.5"/>
<circle cx="707.6" cy="208.5" r="3.6" fill="#c8a060" />
<circle cx="707.6" cy="208.5" r="2.6" fill="#7b4c1e" />
<circle cx="739.0" cy="208.5" r="3.6" fill="#c8a060" />
<circle cx="739.0" cy="208.5" r="2.6" fill="#7b4c1e" />
<text x="723.5" y="212" font-size="8.5" fill="#d6d080" text-anchor="middle" >P10</text>
<circle cx="714.0" cy="214.3" r="1.6" fill="#cda066" />
<circle cx="714.0" cy="214.3" r="0.7" fill="#7b4c1e" />
<circle cx="720.0" cy="214.3" r="1.6" fill="#cda066" />
<circle cx="720.0" cy="214.3" r="0.7" fill="#7b4c1e" />
<circle cx="726.0" cy="214.3" r="1.6" fill="#cda066" />
<circle cx="726.0" cy="214.3" r="0.7" fill="#7b4c1e" />
<circle cx="732.0" cy="214.3" r="1.6" fill="#cda066" />
<circle cx="732.0" cy="214.3" r="0.7" fill="#7b4c1e" />
<rect x="721.0" y="220.5" width="4.0" height="1.3" fill="#c8d0b8" opacity=".55"/>
<rect x="748.5" y="184.5" width="41.0" height="34.0" fill="none" stroke="#c9c9b4" stroke-width="0.5"/>
<rect x="750.0" y="200.5" width="38.0" height="16.5" fill="none" stroke="#b8c070" stroke-width="0.5"/>
<circle cx="753.1" cy="208.5" r="3.6" fill="#c8a060" />
<circle cx="753.1" cy="208.5" r="2.6" fill="#7b4c1e" />
<circle cx="784.5" cy="208.5" r="3.6" fill="#c8a060" />
<circle cx="784.5" cy="208.5" r="2.6" fill="#7b4c1e" />
<text x="769.0" y="212" font-size="8.5" fill="#d6d080" text-anchor="middle" >P5</text>
<circle cx="759.5" cy="214.3" r="1.6" fill="#cda066" />
<circle cx="759.5" cy="214.3" r="0.7" fill="#7b4c1e" />
<circle cx="765.5" cy="214.3" r="1.6" fill="#cda066" />
<circle cx="765.5" cy="214.3" r="0.7" fill="#7b4c1e" />
<circle cx="771.5" cy="214.3" r="1.6" fill="#cda066" />
<circle cx="771.5" cy="214.3" r="0.7" fill="#7b4c1e" />
<circle cx="777.5" cy="214.3" r="1.6" fill="#cda066" />
<circle cx="777.5" cy="214.3" r="0.7" fill="#7b4c1e" />
<rect x="766.5" y="220.5" width="4.0" height="1.3" fill="#c8d0b8" opacity=".55"/>
<rect x="799.0" y="217.0" width="8.0" height="8.0" fill="none" stroke="#88a060" stroke-width="0.4"/>
<rect x="799.5" y="217.5" width="7.0" height="7.0" fill="#d2b070" />
<rect x="716.0" y="227.5" width="10.0" height="7.0" fill="none" stroke="#c9c9b4" stroke-width="0.5"/>
<rect x="716.5" y="228.0" width="3.8" height="6.0" fill="#cda066" />
<rect x="721.7" y="228.0" width="3.8" height="6.0" fill="#cda066" />
<rect x="713.0" y="228.0" width="1.4" height="6.0" fill="#c8d0b8" opacity=".55"/>
<rect x="727.0" y="228.0" width="1.4" height="6.0" fill="#c8d0b8" opacity=".55"/>
<rect x="729.0" y="227.5" width="10.0" height="7.0" fill="none" stroke="#c9c9b4" stroke-width="0.5"/>
<rect x="729.5" y="228.0" width="3.8" height="6.0" fill="#cda066" />
<rect x="734.7" y="228.0" width="3.8" height="6.0" fill="#cda066" />
<rect x="726.0" y="228.0" width="1.4" height="6.0" fill="#c8d0b8" opacity=".55"/>
<rect x="740.0" y="228.0" width="1.4" height="6.0" fill="#c8d0b8" opacity=".55"/>
<rect x="761.0" y="227.5" width="10.0" height="7.0" fill="none" stroke="#c9c9b4" stroke-width="0.5"/>
<rect x="761.5" y="228.0" width="3.8" height="6.0" fill="#cda066" />
<rect x="766.7" y="228.0" width="3.8" height="6.0" fill="#cda066" />
<rect x="758.0" y="228.0" width="1.4" height="6.0" fill="#c8d0b8" opacity=".55"/>
<rect x="772.0" y="228.0" width="1.4" height="6.0" fill="#c8d0b8" opacity=".55"/>
<rect x="774.0" y="227.5" width="10.0" height="7.0" fill="none" stroke="#c9c9b4" stroke-width="0.5"/>
<rect x="774.5" y="228.0" width="3.8" height="6.0" fill="#cda066" />
<rect x="779.7" y="228.0" width="3.8" height="6.0" fill="#cda066" />
<rect x="771.0" y="228.0" width="1.4" height="6.0" fill="#c8d0b8" opacity=".55"/>
<rect x="785.0" y="228.0" width="1.4" height="6.0" fill="#c8d0b8" opacity=".55"/>
<rect x="619.0" y="228.0" width="7.0" height="19.6" fill="none" stroke="#c9c9b4" stroke-width="0.5"/>
<circle cx="622.5" cy="231.5" r="1.9" fill="#cda066" />
<circle cx="622.5" cy="231.5" r="0.9" fill="#7b4c1e" />
<circle cx="622.5" cy="237.8" r="1.9" fill="#cda066" />
<circle cx="622.5" cy="237.8" r="0.9" fill="#7b4c1e" />
<circle cx="622.5" cy="244.1" r="1.9" fill="#cda066" />
<circle cx="622.5" cy="244.1" r="0.9" fill="#7b4c1e" />
<rect x="617.0" y="249.0" width="6.0" height="1.4" fill="#c8d0b8" opacity=".55"/>
<rect x="637.5" y="230.0" width="24.5" height="10.0" fill="none" stroke="#c9c9b4" stroke-width="0.5"/>
<rect x="638.1" y="227.0" width="1.9" height="5.0" fill="#cda066" />
<rect x="638.1" y="238.0" width="1.9" height="5.0" fill="#cda066" />
<rect x="641.1" y="227.0" width="1.9" height="5.0" fill="#cda066" />
<rect x="641.1" y="238.0" width="1.9" height="5.0" fill="#cda066" />
<rect x="644.2" y="227.0" width="1.9" height="5.0" fill="#cda066" />
<rect x="644.2" y="238.0" width="1.9" height="5.0" fill="#cda066" />
<rect x="647.3" y="227.0" width="1.9" height="5.0" fill="#cda066" />
<rect x="647.3" y="238.0" width="1.9" height="5.0" fill="#cda066" />
<rect x="650.3" y="227.0" width="1.9" height="5.0" fill="#cda066" />
<rect x="650.3" y="238.0" width="1.9" height="5.0" fill="#cda066" />
<rect x="653.4" y="227.0" width="1.9" height="5.0" fill="#cda066" />
<rect x="653.4" y="238.0" width="1.9" height="5.0" fill="#cda066" />
<rect x="656.5" y="227.0" width="1.9" height="5.0" fill="#cda066" />
<rect x="656.5" y="238.0" width="1.9" height="5.0" fill="#cda066" />
<rect x="659.5" y="227.0" width="1.9" height="5.0" fill="#cda066" />
<rect x="659.5" y="238.0" width="1.9" height="5.0" fill="#cda066" />
<rect x="639.5" y="245.7" width="2.9" height="3.6" fill="#cda066" />
<rect x="643.6" y="245.7" width="2.9" height="3.6" fill="#cda066" />
<rect x="647.5" y="245.7" width="2.9" height="3.6" fill="#cda066" />
<rect x="651.6" y="245.7" width="2.9" height="3.6" fill="#cda066" />
<rect x="655.5" y="245.7" width="2.9" height="3.6" fill="#cda066" />
<rect x="659.6" y="245.7" width="2.9" height="3.6" fill="#cda066" />
<rect x="630.7" y="236.0" width="4.6" height="8.0" fill="none" stroke="#c9c9b4" stroke-width="0.5"/>
<rect x="631.2" y="236.5" width="3.6" height="2.9" fill="#cda066" />
<rect x="631.2" y="240.6" width="3.6" height="2.9" fill="#cda066" />
<rect x="631.0" y="225.0" width="1.4" height="7.0" fill="#c8d0b8" opacity=".55"/>
<rect x="631.0" y="262.0" width="7.0" height="26.8" fill="none" stroke="#c9c9b4" stroke-width="0.5"/>
<circle cx="634.5" cy="265.5" r="1.9" fill="#cda066" />
<circle cx="634.5" cy="265.5" r="0.9" fill="#7b4c1e" />
<circle cx="634.5" cy="272.1" r="1.9" fill="#cda066" />
<circle cx="634.5" cy="272.1" r="0.9" fill="#7b4c1e" />
<circle cx="634.5" cy="278.7" r="1.9" fill="#cda066" />
<circle cx="634.5" cy="278.7" r="0.9" fill="#7b4c1e" />
<circle cx="634.5" cy="285.3" r="1.9" fill="#cda066" />
<circle cx="634.5" cy="285.3" r="0.9" fill="#7b4c1e" />
<rect x="638.2" y="279.0" width="4.6" height="8.0" fill="none" stroke="#c9c9b4" stroke-width="0.5"/>
<rect x="638.7" y="279.5" width="3.6" height="2.9" fill="#cda066" />
<rect x="638.7" y="283.6" width="3.6" height="2.9" fill="#cda066" />
<rect x="644.0" y="281.1" width="17.0" height="7.8" fill="none" stroke="#c9c9b4" stroke-width="0.5"/>
<rect x="645.0" y="279.0" width="2.2" height="3.5" fill="#cda066" />
<rect x="645.0" y="287.5" width="2.2" height="3.5" fill="#cda066" />
<rect x="649.3" y="279.0" width="2.2" height="3.5" fill="#cda066" />
<rect x="649.3" y="287.5" width="2.2" height="3.5" fill="#cda066" />
<rect x="653.5" y="279.0" width="2.2" height="3.5" fill="#cda066" />
<rect x="653.5" y="287.5" width="2.2" height="3.5" fill="#cda066" />
<rect x="657.8" y="279.0" width="2.2" height="3.5" fill="#cda066" />
<rect x="657.8" y="287.5" width="2.2" height="3.5" fill="#cda066" />
<rect x="656.0" y="269.7" width="8.0" height="4.6" fill="none" stroke="#c9c9b4" stroke-width="0.5"/>
<rect x="656.5" y="270.2" width="2.9" height="3.6" fill="#cda066" />
<rect x="660.6" y="270.2" width="2.9" height="3.6" fill="#cda066" />
<rect x="662.0" y="274.2" width="8.0" height="4.6" fill="none" stroke="#c9c9b4" stroke-width="0.5"/>
<rect x="662.5" y="274.7" width="2.9" height="3.6" fill="#cda066" />
<rect x="666.6" y="274.7" width="2.9" height="3.6" fill="#cda066" />
<rect x="652.0" y="261.2" width="8.0" height="4.6" fill="none" stroke="#c9c9b4" stroke-width="0.5"/>
<rect x="652.5" y="261.7" width="2.9" height="3.6" fill="#cda066" />
<rect x="656.6" y="261.7" width="2.9" height="3.6" fill="#cda066" />
<rect x="640.0" y="252.0" width="3.0" height="1.2" fill="#c8d0b8" opacity=".55"/>
<rect x="651.0" y="252.0" width="3.0" height="1.2" fill="#c8d0b8" opacity=".55"/>
<rect x="659.0" y="252.0" width="3.0" height="1.2" fill="#c8d0b8" opacity=".55"/>
<rect x="672.0" y="255.0" width="13.0" height="14.0" fill="#c2a06a" />
<rect x="671.0" y="254.0" width="15.0" height="16.0" fill="none" stroke="#c9c9b4" stroke-width="0.5"/>
<path d="M674 258 h9 M674 261 h9 M674 264 h9 M677 257 v10 M680 257 v10" stroke="#e0c890" stroke-width=".4"/>
<circle cx="675.0" cy="251.0" r="1.1" fill="#cda066" />
<circle cx="679.0" cy="251.0" r="1.1" fill="#cda066" />
<circle cx="683.0" cy="251.0" r="1.1" fill="#cda066" />
<rect x="662.5" y="245.2" width="7.0" height="4.5" fill="none" stroke="#c9c9b4" stroke-width="0.5"/>
<rect x="663.0" y="245.8" width="2.5" height="3.5" fill="#cda066" />
<rect x="666.5" y="245.8" width="2.5" height="3.5" fill="#cda066" />
<rect x="693.5" y="249.0" width="13.0" height="35.0" fill="none" stroke="#c9c9b4" stroke-width="0.5"/>
<rect x="696.5" y="247.0" width="7.0" height="36.0" fill="#cda066" />
<rect x="696.5" y="261.0" width="7.0" height="8.0" fill="#2c7522" />
<rect x="713.5" y="249.0" width="13.0" height="35.0" fill="none" stroke="#c9c9b4" stroke-width="0.5"/>
<rect x="716.5" y="247.0" width="7.0" height="36.0" fill="#cda066" />
<rect x="716.5" y="261.0" width="7.0" height="8.0" fill="#2c7522" />
<rect x="725.5" y="255.0" width="5.0" height="8.0" fill="none" stroke="#c9c9b4" stroke-width="0.5"/>
<rect x="726.0" y="255.5" width="4.0" height="2.9" fill="#cda066" />
<rect x="726.0" y="259.6" width="4.0" height="2.9" fill="#cda066" />
<rect x="725.5" y="266.0" width="5.0" height="8.0" fill="none" stroke="#c9c9b4" stroke-width="0.5"/>
<rect x="726.0" y="266.5" width="4.0" height="2.9" fill="#cda066" />
<rect x="726.0" y="270.6" width="4.0" height="2.9" fill="#cda066" />
<rect x="706.0" y="252.0" width="1.4" height="6.0" fill="#c8d0b8" opacity=".55"/>
<rect x="712.0" y="274.0" width="1.4" height="6.0" fill="#c8d0b8" opacity=".55"/>
<rect x="734.0" y="259.0" width="22.0" height="22.0" fill="none" stroke="#c9c9b4" stroke-width="0.5"/>
<rect x="734.0" y="259.0" width="22.0" height="3.5" fill="#cda066" />
<rect x="734.0" y="277.5" width="22.0" height="3.5" fill="#cda066" />
<rect x="734.0" y="259.0" width="3.5" height="22.0" fill="#cda066" />
<rect x="752.5" y="259.0" width="3.5" height="22.0" fill="#cda066" />
<path d="M745 268 v6 M742 271 h6" stroke="#c9c9b4" stroke-width=".4"/>
<rect x="744.0" y="254.0" width="6.0" height="6.0" fill="#cda066" />
<rect x="733.0" y="280.0" width="6.0" height="6.0" fill="#cda066" />
<rect x="763.0" y="267.5" width="2.5" height="3.0" fill="#cda066" />
<rect x="766.5" y="267.5" width="2.5" height="3.0" fill="#cda066" />
<rect x="763.0" y="271.5" width="2.5" height="3.0" fill="#cda066" />
<rect x="766.5" y="271.5" width="2.5" height="3.0" fill="#cda066" />
<rect x="763.0" y="275.5" width="2.5" height="3.0" fill="#cda066" />
<rect x="766.5" y="275.5" width="2.5" height="3.0" fill="#cda066" />
<rect x="771.0" y="267.0" width="5.0" height="1.2" fill="#c8d0b8" opacity=".55"/>
<rect x="771.0" y="271.0" width="5.0" height="1.2" fill="#c8d0b8" opacity=".55"/>
<rect x="771.0" y="275.0" width="5.0" height="1.2" fill="#c8d0b8" opacity=".55"/>
<rect x="736.2" y="247.5" width="4.6" height="7.0" fill="none" stroke="#c9c9b4" stroke-width="0.5"/>
<rect x="736.7" y="248.0" width="3.6" height="2.5" fill="#cda066" />
<rect x="736.7" y="251.5" width="3.6" height="2.5" fill="#cda066" />
<circle cx="795.0" cy="268.5" r="15.0" fill="none" stroke="#d0d0c8" stroke-width="0.6"/>
<rect x="785.0" y="266.0" width="20.0" height="5.0" fill="none" stroke="#c8c070" stroke-width="0.5"/>
<circle cx="787.5" cy="268.5" r="2.0" fill="#d2b070" />
<circle cx="802.5" cy="268.5" r="2.0" fill="#d2b070" />
<circle cx="788.0" cy="260.0" r="0.8" fill="#aa4a3a" />
<circle cx="800.0" cy="260.0" r="0.8" fill="#aa4a3a" />
<rect x="508.0" y="256.0" width="22.0" height="17.0" fill="none" stroke="#c9c9b4" stroke-width="0.5"/>
<rect x="509.0" y="258.0" width="4.0" height="2.2" fill="#cda066" />
<rect x="525.0" y="258.0" width="4.0" height="2.2" fill="#cda066" />
<rect x="514.0" y="258.0" width="10.0" height="2.2" fill="#c8d0c8" />
<rect x="509.0" y="261.6" width="4.0" height="2.2" fill="#cda066" />
<rect x="525.0" y="261.6" width="4.0" height="2.2" fill="#cda066" />
<rect x="514.0" y="261.6" width="10.0" height="2.2" fill="#c8d0c8" />
<rect x="509.0" y="265.2" width="4.0" height="2.2" fill="#cda066" />
<rect x="525.0" y="265.2" width="4.0" height="2.2" fill="#cda066" />
<rect x="514.0" y="265.2" width="10.0" height="2.2" fill="#c8d0c8" />
<rect x="509.0" y="268.8" width="4.0" height="2.2" fill="#cda066" />
<rect x="525.0" y="268.8" width="4.0" height="2.2" fill="#cda066" />
<rect x="514.0" y="268.8" width="10.0" height="2.2" fill="#c8d0c8" />
<rect x="535.5" y="256.2" width="8.0" height="5.6" fill="none" stroke="#c9c9b4" stroke-width="0.5"/>
<rect x="536.0" y="256.7" width="2.9" height="4.6" fill="#cda066" />
<rect x="540.1" y="256.7" width="2.9" height="4.6" fill="#cda066" />
<rect x="535.5" y="262.7" width="8.0" height="5.6" fill="none" stroke="#c9c9b4" stroke-width="0.5"/>
<rect x="536.0" y="263.2" width="2.9" height="4.6" fill="#cda066" />
<rect x="540.1" y="263.2" width="2.9" height="4.6" fill="#cda066" />
<rect x="535.5" y="269.2" width="8.0" height="5.6" fill="none" stroke="#c9c9b4" stroke-width="0.5"/>
<rect x="536.0" y="269.7" width="2.9" height="4.6" fill="#cda066" />
<rect x="540.1" y="269.7" width="2.9" height="4.6" fill="#cda066" />
<rect x="535.5" y="276.2" width="8.0" height="5.6" fill="none" stroke="#c9c9b4" stroke-width="0.5"/>
<rect x="536.0" y="276.7" width="2.9" height="4.6" fill="#cda066" />
<rect x="540.1" y="276.7" width="2.9" height="4.6" fill="#cda066" />
<rect x="537.0" y="250.0" width="5.0" height="1.4" fill="#c8d0b8" opacity=".55"/>
<rect x="537.0" y="253.0" width="5.0" height="1.4" fill="#c8d0b8" opacity=".55"/>
<rect x="545.5" y="263.0" width="6.0" height="3.0" fill="#cda066" />
<rect x="545.5" y="267.0" width="6.0" height="3.0" fill="#cda066" />
<rect x="545.5" y="271.0" width="6.0" height="3.0" fill="#cda066" />
<rect x="545.5" y="275.0" width="6.0" height="3.0" fill="#cda066" />
<rect x="545.5" y="279.0" width="6.0" height="3.0" fill="#cda066" />
<rect x="545.5" y="283.0" width="6.0" height="3.0" fill="#cda066" />
<rect x="545.5" y="287.0" width="6.0" height="3.0" fill="#cda066" />
<rect x="545.0" y="262.0" width="7.0" height="30.0" fill="none" stroke="#c9c9b4" stroke-width="0.5"/>
<rect x="546.0" y="254.0" width="5.0" height="1.4" fill="#c8d0b8" opacity=".55"/>
<rect x="546.0" y="257.0" width="5.0" height="1.4" fill="#c8d0b8" opacity=".55"/>
<rect x="510.7" y="278.5" width="7.0" height="19.0" fill="none" stroke="#c9c9b4" stroke-width="0.5"/>
<circle cx="514.2" cy="282.0" r="1.9" fill="#cda066" />
<circle cx="514.2" cy="282.0" r="0.9" fill="#7b4c1e" />
<circle cx="514.2" cy="288.0" r="1.9" fill="#cda066" />
<circle cx="514.2" cy="288.0" r="0.9" fill="#7b4c1e" />
<circle cx="514.2" cy="294.0" r="1.9" fill="#cda066" />
<circle cx="514.2" cy="294.0" r="0.9" fill="#7b4c1e" />
<rect x="519.5" y="285.7" width="8.0" height="4.6" fill="none" stroke="#c9c9b4" stroke-width="0.5"/>
<rect x="520.0" y="286.2" width="2.9" height="3.6" fill="#cda066" />
<rect x="524.1" y="286.2" width="2.9" height="3.6" fill="#cda066" />
<rect x="520.0" y="292.2" width="8.0" height="4.6" fill="none" stroke="#c9c9b4" stroke-width="0.5"/>
<rect x="520.5" y="292.7" width="2.9" height="3.6" fill="#cda066" />
<rect x="524.6" y="292.7" width="2.9" height="3.6" fill="#cda066" />
<rect x="518.0" y="278.0" width="4.0" height="1.3" fill="#c8d0b8" opacity=".55"/>
<rect x="561.0" y="268.5" width="26.0" height="26.0" fill="none" stroke="#c9c9b4" stroke-width="0.5"/>
<rect x="562.5" y="270.0" width="23.0" height="23.0" fill="#b88a50" />
<rect x="564.5" y="272.0" width="19.0" height="19.0" fill="#d4aa68" />
<circle cx="566.0" cy="274.0" r="0.5" fill="#a07840" />
<circle cx="566.0" cy="277.2" r="0.5" fill="#a07840" />
<circle cx="566.0" cy="280.4" r="0.5" fill="#a07840" />
<circle cx="566.0" cy="283.6" r="0.5" fill="#a07840" />
<circle cx="566.0" cy="286.8" r="0.5" fill="#a07840" />
<circle cx="566.0" cy="290.0" r="0.5" fill="#a07840" />
<circle cx="569.2" cy="274.0" r="0.5" fill="#a07840" />
<circle cx="569.2" cy="277.2" r="0.5" fill="#a07840" />
<circle cx="569.2" cy="280.4" r="0.5" fill="#a07840" />
<circle cx="569.2" cy="283.6" r="0.5" fill="#a07840" />
<circle cx="569.2" cy="286.8" r="0.5" fill="#a07840" />
<circle cx="569.2" cy="290.0" r="0.5" fill="#a07840" />
<circle cx="572.4" cy="274.0" r="0.5" fill="#a07840" />
<circle cx="572.4" cy="277.2" r="0.5" fill="#a07840" />
<circle cx="572.4" cy="280.4" r="0.5" fill="#a07840" />
<circle cx="572.4" cy="283.6" r="0.5" fill="#a07840" />
<circle cx="572.4" cy="286.8" r="0.5" fill="#a07840" />
<circle cx="572.4" cy="290.0" r="0.5" fill="#a07840" />
<circle cx="575.6" cy="274.0" r="0.5" fill="#a07840" />
<circle cx="575.6" cy="277.2" r="0.5" fill="#a07840" />
<circle cx="575.6" cy="280.4" r="0.5" fill="#a07840" />
<circle cx="575.6" cy="283.6" r="0.5" fill="#a07840" />
<circle cx="575.6" cy="286.8" r="0.5" fill="#a07840" />
<circle cx="575.6" cy="290.0" r="0.5" fill="#a07840" />
<circle cx="578.8" cy="274.0" r="0.5" fill="#a07840" />
<circle cx="578.8" cy="277.2" r="0.5" fill="#a07840" />
<circle cx="578.8" cy="280.4" r="0.5" fill="#a07840" />
<circle cx="578.8" cy="283.6" r="0.5" fill="#a07840" />
<circle cx="578.8" cy="286.8" r="0.5" fill="#a07840" />
<circle cx="578.8" cy="290.0" r="0.5" fill="#a07840" />
<circle cx="582.0" cy="274.0" r="0.5" fill="#a07840" />
<circle cx="582.0" cy="277.2" r="0.5" fill="#a07840" />
<circle cx="582.0" cy="280.4" r="0.5" fill="#a07840" />
<circle cx="582.0" cy="283.6" r="0.5" fill="#a07840" />
<circle cx="582.0" cy="286.8" r="0.5" fill="#a07840" />
<circle cx="582.0" cy="290.0" r="0.5" fill="#a07840" />
<text x="573.8" y="287.5" font-size="10" fill="#f6f2e6" text-anchor="middle" >65</text>
<circle cx="563.5" cy="271.0" r="0.8" fill="#2c7522" />
<circle cx="584.0" cy="271.0" r="0.8" fill="#2c7522" />
<circle cx="563.5" cy="292.0" r="0.8" fill="#2c7522" />
<circle cx="584.0" cy="292.0" r="0.8" fill="#2c7522" />
<rect x="592.0" y="260.0" width="3.4" height="4.0" fill="#cda066" />
<rect x="596.6" y="260.0" width="3.4" height="4.0" fill="#cda066" />
<rect x="592.0" y="265.0" width="3.4" height="4.0" fill="#cda066" />
<rect x="596.6" y="265.0" width="3.4" height="4.0" fill="#cda066" />
<rect x="592.0" y="270.0" width="3.4" height="4.0" fill="#cda066" />
<rect x="596.6" y="270.0" width="3.4" height="4.0" fill="#cda066" />
<rect x="592.0" y="275.0" width="3.4" height="4.0" fill="#cda066" />
<rect x="596.6" y="275.0" width="3.4" height="4.0" fill="#cda066" />
<rect x="592.0" y="280.0" width="3.4" height="4.0" fill="#cda066" />
<rect x="596.6" y="280.0" width="3.4" height="4.0" fill="#cda066" />
<rect x="592.0" y="285.0" width="3.4" height="4.0" fill="#cda066" />
<rect x="596.6" y="285.0" width="3.4" height="4.0" fill="#cda066" />
<rect x="592.0" y="290.0" width="3.4" height="4.0" fill="#cda066" />
<rect x="596.6" y="290.0" width="3.4" height="4.0" fill="#cda066" />
<rect x="592.0" y="295.0" width="3.4" height="4.0" fill="#cda066" />
<rect x="596.6" y="295.0" width="3.4" height="4.0" fill="#cda066" />
<rect x="591.0" y="260.0" width="10.0" height="40.0" fill="none" stroke="#c9c9b4" stroke-width="0.5"/>
<rect x="606.0" y="258.0" width="6.0" height="37.0" fill="#cda066" />
<rect x="604.0" y="257.0" width="10.0" height="39.0" fill="none" stroke="#c9c9b4" stroke-width="0.5"/>
<rect x="607.0" y="271.0" width="4.0" height="8.0" fill="#2c7522" />
<rect x="592.0" y="254.0" width="5.0" height="1.4" fill="#c8d0b8" opacity=".55"/>
<rect x="607.0" y="251.0" width="4.0" height="1.4" fill="#c8d0b8" opacity=".55"/>
<rect x="511.5" y="301.5" width="7.0" height="20.2" fill="none" stroke="#c9c9b4" stroke-width="0.5"/>
<circle cx="515.0" cy="305.0" r="1.9" fill="#cda066" />
<circle cx="515.0" cy="305.0" r="0.9" fill="#7b4c1e" />
<circle cx="515.0" cy="311.6" r="1.9" fill="#cda066" />
<circle cx="515.0" cy="311.6" r="0.9" fill="#7b4c1e" />
<circle cx="515.0" cy="318.2" r="1.9" fill="#cda066" />
<circle cx="515.0" cy="318.2" r="0.9" fill="#7b4c1e" />
<rect x="524.0" y="303.0" width="4.0" height="1.4" fill="#c8d0b8" opacity=".55"/>
<rect x="524.0" y="312.0" width="4.0" height="1.4" fill="#c8d0b8" opacity=".55"/>
<path d="M539 301 h14 a3 3 0 0 1 3 3 v6 a3 3 0 0 1 -3 3 h-14 a3 3 0 0 1 -3 -3 v-6 a3 3 0 0 1 3 -3z" fill="none" stroke="#c9c9b4" stroke-width=".5"/>
<rect x="538.0" y="304.5" width="16.0" height="4.5" fill="#cda066" />
<rect x="544.0" y="305.5" width="4.0" height="2.5" fill="#2c7522" />
<rect x="534.0" y="315.0" width="6.0" height="3.6" fill="#cda066" />
<rect x="534.0" y="320.5" width="6.0" height="3.6" fill="#cda066" />
<rect x="534.0" y="326.0" width="6.0" height="3.6" fill="#cda066" />
<rect x="540.0" y="314.0" width="8.0" height="16.0" fill="#2c7522" />
<rect x="540.0" y="314.0" width="8.0" height="16.0" fill="none" stroke="#c9c9b4" stroke-width="0.5"/>
<rect x="548.0" y="315.0" width="7.0" height="14.0" fill="#cda066" />
<rect x="559.0" y="320.0" width="1.4" height="6.0" fill="#c8d0b8" opacity=".55"/>
<path d="M537 333 h14 a3 3 0 0 1 3 3 v6 a3 3 0 0 1 -3 3 h-14 a3 3 0 0 1 -3 -3 v-6 a3 3 0 0 1 3 -3z" fill="none" stroke="#c9c9b4" stroke-width=".5"/>
<rect x="535.0" y="336.0" width="17.0" height="4.5" fill="#cda066" />
<rect x="541.0" y="337.0" width="4.0" height="2.5" fill="#2c7522" />
<circle cx="551.5" cy="349.0" r="2.3" fill="#d2b070" />
<circle cx="551.5" cy="349.0" r="1.0" fill="#8a6a30" />
<rect x="542.0" y="348.0" width="4.0" height="1.3" fill="#c8d0b8" opacity=".55"/>
<rect x="560.0" y="311.0" width="6.0" height="13.0" fill="#cda066" />
<rect x="561.5" y="315.0" width="3.0" height="5.0" fill="#2c7522" />
<rect x="562.3" y="327.0" width="1.4" height="6.0" fill="#c8d0b8" opacity=".55"/>
<rect x="567.5" y="311.0" width="6.0" height="13.0" fill="#cda066" />
<rect x="569.0" y="315.0" width="3.0" height="5.0" fill="#2c7522" />
<rect x="569.8" y="327.0" width="1.4" height="6.0" fill="#c8d0b8" opacity=".55"/>
<rect x="575.0" y="311.0" width="6.0" height="13.0" fill="#cda066" />
<rect x="576.5" y="315.0" width="3.0" height="5.0" fill="#2c7522" />
<rect x="577.3" y="327.0" width="1.4" height="6.0" fill="#c8d0b8" opacity=".55"/>
<rect x="582.5" y="311.0" width="6.0" height="13.0" fill="#cda066" />
<rect x="584.0" y="315.0" width="3.0" height="5.0" fill="#2c7522" />
<rect x="584.8" y="327.0" width="1.4" height="6.0" fill="#c8d0b8" opacity=".55"/>
<rect x="558.0" y="299.0" width="2.5" height="5.5" fill="#cda066" />
<rect x="561.5" y="299.0" width="2.5" height="5.5" fill="#cda066" />
<rect x="565.0" y="299.0" width="2.5" height="5.5" fill="#cda066" />
<rect x="568.5" y="299.0" width="2.5" height="5.5" fill="#cda066" />
<rect x="572.0" y="299.0" width="2.5" height="5.5" fill="#cda066" />
<rect x="575.5" y="299.0" width="2.5" height="5.5" fill="#cda066" />
<rect x="579.0" y="299.0" width="2.5" height="5.5" fill="#cda066" />
<rect x="582.5" y="299.0" width="2.5" height="5.5" fill="#cda066" />
<rect x="586.0" y="299.0" width="2.5" height="5.5" fill="#cda066" />
<rect x="589.5" y="299.0" width="2.5" height="5.5" fill="#cda066" />
<rect x="560.0" y="292.0" width="1.3" height="5.0" fill="#c8d0b8" opacity=".55"/>
<rect x="567.5" y="292.0" width="1.3" height="5.0" fill="#c8d0b8" opacity=".55"/>
<rect x="575.0" y="292.0" width="1.3" height="5.0" fill="#c8d0b8" opacity=".55"/>
<rect x="582.5" y="292.0" width="1.3" height="5.0" fill="#c8d0b8" opacity=".55"/>
<rect x="509.0" y="330.5" width="18.0" height="18.0" fill="none" stroke="#b8b860" stroke-width="0.6"/>
<circle cx="518.0" cy="339.5" r="8.0" fill="#d0aa68" />
<circle cx="518.0" cy="339.5" r="3.6" fill="#6a4a1e" />
<text x="518" y="341.5" font-size="5.5" font-weight="bold" fill="#c8a060" text-anchor="middle">M5</text>
<rect x="515.0" y="353.0" width="5.0" height="1.4" fill="#c8d0b8" opacity=".55"/>
<circle cx="548.0" cy="366.0" r="9.5" fill="none" stroke="#d0d0c8" stroke-width="0.6"/>
<circle cx="548.0" cy="362.0" r="1.8" fill="#cda066" />
<circle cx="548.0" cy="362.0" r="0.9" fill="#7b4c1e" />
<circle cx="548.0" cy="370.0" r="1.8" fill="#cda066" />
<circle cx="548.0" cy="370.0" r="0.9" fill="#7b4c1e" />
<rect x="546.0" y="359.0" width="4.0" height="14.0" fill="none" stroke="#c8c070" stroke-width="0.4"/>
<circle cx="542.0" cy="360.0" r="0.7" fill="#aa4a3a" />
<circle cx="554.0" cy="360.0" r="0.7" fill="#aa4a3a" />
<circle cx="542.0" cy="372.0" r="0.7" fill="#aa4a3a" />
<circle cx="554.0" cy="372.0" r="0.7" fill="#aa4a3a" />
<circle cx="556.0" cy="366.0" r="0.7" fill="#aa4a3a" />
<circle cx="540.0" cy="366.0" r="0.7" fill="#aa4a3a" />
<rect x="545.0" y="378.0" width="6.0" height="1.4" fill="#c8d0b8" opacity=".55"/>
<circle cx="548.0" cy="397.0" r="9.5" fill="none" stroke="#d0d0c8" stroke-width="0.6"/>
<circle cx="548.0" cy="393.0" r="1.8" fill="#cda066" />
<circle cx="548.0" cy="393.0" r="0.9" fill="#7b4c1e" />
<circle cx="548.0" cy="401.0" r="1.8" fill="#cda066" />
<circle cx="548.0" cy="401.0" r="0.9" fill="#7b4c1e" />
<rect x="546.0" y="390.0" width="4.0" height="14.0" fill="none" stroke="#c8c070" stroke-width="0.4"/>
<circle cx="542.0" cy="391.0" r="0.7" fill="#aa4a3a" />
<circle cx="554.0" cy="391.0" r="0.7" fill="#aa4a3a" />
<circle cx="542.0" cy="403.0" r="0.7" fill="#aa4a3a" />
<circle cx="554.0" cy="403.0" r="0.7" fill="#aa4a3a" />
<circle cx="556.0" cy="397.0" r="0.7" fill="#aa4a3a" />
<circle cx="540.0" cy="397.0" r="0.7" fill="#aa4a3a" />
<rect x="545.0" y="409.0" width="6.0" height="1.4" fill="#c8d0b8" opacity=".55"/>
<path d="M546 355 h6 M544 387 h8" stroke="#c9c9b4" stroke-width="1"/>
<ellipse cx="569" cy="373" rx="6.5" ry="9" fill="none" stroke="#c9c9b4" stroke-width=".5"/>
<rect x="567.0" y="365.0" width="4.0" height="16.0" fill="#cda066" />
<rect x="567.5" y="371.0" width="3.0" height="4.0" fill="#2c7522" />
<rect x="576.0" y="366.0" width="5.0" height="3.5" fill="#cda066" />
<rect x="576.0" y="371.0" width="5.0" height="3.5" fill="#cda066" />
<rect x="576.0" y="376.0" width="5.0" height="3.5" fill="#cda066" />
<rect x="581.0" y="365.0" width="7.0" height="16.0" fill="#2c7522" />
<rect x="581.0" y="365.0" width="16.0" height="16.0" fill="none" stroke="#c9c9b4" stroke-width="0.5"/>
<rect x="589.0" y="367.0" width="8.0" height="12.0" fill="#cda066" />
<path d="M583 383 h15 a2 2 0 0 1 2 2 v4 a2 2 0 0 1 -2 2 h-15 a2 2 0 0 1 -2 -2 v-4 a2 2 0 0 1 2 -2z" fill="none" stroke="#c9c9b4" stroke-width=".5"/>
<rect x="581.0" y="385.0" width="18.0" height="4.5" fill="#cda066" />
<rect x="590.7" y="392.0" width="4.6" height="8.0" fill="none" stroke="#c9c9b4" stroke-width="0.5"/>
<rect x="591.2" y="392.5" width="3.6" height="2.9" fill="#cda066" />
<rect x="591.2" y="396.6" width="3.6" height="2.9" fill="#cda066" />
<rect x="602.5" y="333.0" width="5.0" height="8.0" fill="none" stroke="#c9c9b4" stroke-width="0.5"/>
<rect x="603.0" y="333.5" width="4.0" height="2.9" fill="#cda066" />
<rect x="603.0" y="337.6" width="4.0" height="2.9" fill="#cda066" />
<rect x="608.0" y="370.0" width="1.4" height="6.0" fill="#c8d0b8" opacity=".55"/>
<rect x="609.7" y="300.0" width="4.6" height="8.0" fill="none" stroke="#c9c9b4" stroke-width="0.5"/>
<rect x="610.2" y="300.5" width="3.6" height="2.9" fill="#cda066" />
<rect x="610.2" y="304.6" width="3.6" height="2.9" fill="#cda066" />
<rect x="614.7" y="300.0" width="4.6" height="8.0" fill="none" stroke="#c9c9b4" stroke-width="0.5"/>
<rect x="615.2" y="300.5" width="3.6" height="2.9" fill="#cda066" />
<rect x="615.2" y="304.6" width="3.6" height="2.9" fill="#cda066" />
<rect x="619.7" y="300.0" width="4.6" height="8.0" fill="none" stroke="#c9c9b4" stroke-width="0.5"/>
<rect x="620.2" y="300.5" width="3.6" height="2.9" fill="#cda066" />
<rect x="620.2" y="304.6" width="3.6" height="2.9" fill="#cda066" />
<rect x="612.0" y="292.0" width="7.0" height="1.3" fill="#c8d0b8" opacity=".55"/>
<rect x="612.0" y="295.0" width="7.0" height="1.3" fill="#c8d0b8" opacity=".55"/>
<rect x="507.0" y="363.0" width="28.0" height="122.5" fill="none" stroke="#c9c9b4" stroke-width="0.5"/>
<circle cx="510.2" cy="366.5" r="2.0" fill="#cda066" />
<circle cx="510.2" cy="366.5" r="0.8" fill="#7b4c1e" />
<circle cx="514.8" cy="366.5" r="2.0" fill="#cda066" />
<circle cx="514.8" cy="366.5" r="0.8" fill="#7b4c1e" />
<circle cx="519.4" cy="366.5" r="2.0" fill="#cda066" />
<circle cx="519.4" cy="366.5" r="0.8" fill="#7b4c1e" />
<circle cx="524.0" cy="366.5" r="2.0" fill="#cda066" />
<circle cx="524.0" cy="366.5" r="0.8" fill="#7b4c1e" />
<circle cx="528.6" cy="366.5" r="2.0" fill="#cda066" />
<circle cx="528.6" cy="366.5" r="0.8" fill="#7b4c1e" />
<circle cx="510.2" cy="371.3" r="2.0" fill="#cda066" />
<circle cx="510.2" cy="371.3" r="0.8" fill="#7b4c1e" />
<circle cx="514.8" cy="371.3" r="2.0" fill="#cda066" />
<circle cx="514.8" cy="371.3" r="0.8" fill="#7b4c1e" />
<circle cx="519.4" cy="371.3" r="2.0" fill="#cda066" />
<circle cx="519.4" cy="371.3" r="0.8" fill="#7b4c1e" />
<circle cx="524.0" cy="371.3" r="2.0" fill="#cda066" />
<circle cx="524.0" cy="371.3" r="0.8" fill="#7b4c1e" />
<circle cx="528.6" cy="371.3" r="2.0" fill="#cda066" />
<circle cx="528.6" cy="371.3" r="0.8" fill="#7b4c1e" />
<circle cx="510.2" cy="376.2" r="2.0" fill="#cda066" />
<circle cx="510.2" cy="376.2" r="0.8" fill="#7b4c1e" />
<circle cx="514.8" cy="376.2" r="2.0" fill="#cda066" />
<circle cx="514.8" cy="376.2" r="0.8" fill="#7b4c1e" />
<circle cx="519.4" cy="376.2" r="2.0" fill="#cda066" />
<circle cx="519.4" cy="376.2" r="0.8" fill="#7b4c1e" />
<circle cx="524.0" cy="376.2" r="2.0" fill="#cda066" />
<circle cx="524.0" cy="376.2" r="0.8" fill="#7b4c1e" />
<circle cx="528.6" cy="376.2" r="2.0" fill="#cda066" />
<circle cx="528.6" cy="376.2" r="0.8" fill="#7b4c1e" />
<circle cx="510.2" cy="381.0" r="2.0" fill="#cda066" />
<circle cx="510.2" cy="381.0" r="0.8" fill="#7b4c1e" />
<circle cx="514.8" cy="381.0" r="2.0" fill="#cda066" />
<circle cx="514.8" cy="381.0" r="0.8" fill="#7b4c1e" />
<circle cx="519.4" cy="381.0" r="2.0" fill="#cda066" />
<circle cx="519.4" cy="381.0" r="0.8" fill="#7b4c1e" />
<circle cx="524.0" cy="381.0" r="2.0" fill="#cda066" />
<circle cx="524.0" cy="381.0" r="0.8" fill="#7b4c1e" />
<circle cx="528.6" cy="381.0" r="2.0" fill="#cda066" />
<circle cx="528.6" cy="381.0" r="0.8" fill="#7b4c1e" />
<circle cx="510.2" cy="385.8" r="2.0" fill="#cda066" />
<circle cx="510.2" cy="385.8" r="0.8" fill="#7b4c1e" />
<circle cx="514.8" cy="385.8" r="2.0" fill="#cda066" />
<circle cx="514.8" cy="385.8" r="0.8" fill="#7b4c1e" />
<circle cx="519.4" cy="385.8" r="2.0" fill="#cda066" />
<circle cx="519.4" cy="385.8" r="0.8" fill="#7b4c1e" />
<circle cx="524.0" cy="385.8" r="2.0" fill="#cda066" />
<circle cx="524.0" cy="385.8" r="0.8" fill="#7b4c1e" />
<circle cx="528.6" cy="385.8" r="2.0" fill="#cda066" />
<circle cx="528.6" cy="385.8" r="0.8" fill="#7b4c1e" />
<circle cx="510.2" cy="390.6" r="2.0" fill="#cda066" />
<circle cx="510.2" cy="390.6" r="0.8" fill="#7b4c1e" />
<circle cx="514.8" cy="390.6" r="2.0" fill="#cda066" />
<circle cx="514.8" cy="390.6" r="0.8" fill="#7b4c1e" />
<circle cx="519.4" cy="390.6" r="2.0" fill="#cda066" />
<circle cx="519.4" cy="390.6" r="0.8" fill="#7b4c1e" />
<circle cx="524.0" cy="390.6" r="2.0" fill="#cda066" />
<circle cx="524.0" cy="390.6" r="0.8" fill="#7b4c1e" />
<circle cx="528.6" cy="390.6" r="2.0" fill="#cda066" />
<circle cx="528.6" cy="390.6" r="0.8" fill="#7b4c1e" />
<circle cx="510.2" cy="395.5" r="2.0" fill="#cda066" />
<circle cx="510.2" cy="395.5" r="0.8" fill="#7b4c1e" />
<circle cx="514.8" cy="395.5" r="2.0" fill="#cda066" />
<circle cx="514.8" cy="395.5" r="0.8" fill="#7b4c1e" />
<circle cx="519.4" cy="395.5" r="2.0" fill="#cda066" />
<circle cx="519.4" cy="395.5" r="0.8" fill="#7b4c1e" />
<circle cx="524.0" cy="395.5" r="2.0" fill="#cda066" />
<circle cx="524.0" cy="395.5" r="0.8" fill="#7b4c1e" />
<circle cx="528.6" cy="395.5" r="2.0" fill="#cda066" />
<circle cx="528.6" cy="395.5" r="0.8" fill="#7b4c1e" />
<circle cx="510.2" cy="400.3" r="2.0" fill="#cda066" />
<circle cx="510.2" cy="400.3" r="0.8" fill="#7b4c1e" />
<circle cx="514.8" cy="400.3" r="2.0" fill="#cda066" />
<circle cx="514.8" cy="400.3" r="0.8" fill="#7b4c1e" />
<circle cx="519.4" cy="400.3" r="2.0" fill="#cda066" />
<circle cx="519.4" cy="400.3" r="0.8" fill="#7b4c1e" />
<circle cx="524.0" cy="400.3" r="2.0" fill="#cda066" />
<circle cx="524.0" cy="400.3" r="0.8" fill="#7b4c1e" />
<circle cx="528.6" cy="400.3" r="2.0" fill="#cda066" />
<circle cx="528.6" cy="400.3" r="0.8" fill="#7b4c1e" />
<circle cx="510.2" cy="405.1" r="2.0" fill="#cda066" />
<circle cx="510.2" cy="405.1" r="0.8" fill="#7b4c1e" />
<circle cx="514.8" cy="405.1" r="2.0" fill="#cda066" />
<circle cx="514.8" cy="405.1" r="0.8" fill="#7b4c1e" />
<circle cx="519.4" cy="405.1" r="2.0" fill="#cda066" />
<circle cx="519.4" cy="405.1" r="0.8" fill="#7b4c1e" />
<circle cx="524.0" cy="405.1" r="2.0" fill="#cda066" />
<circle cx="524.0" cy="405.1" r="0.8" fill="#7b4c1e" />
<circle cx="528.6" cy="405.1" r="2.0" fill="#cda066" />
<circle cx="528.6" cy="405.1" r="0.8" fill="#7b4c1e" />
<circle cx="510.2" cy="410.0" r="2.0" fill="#cda066" />
<circle cx="510.2" cy="410.0" r="0.8" fill="#7b4c1e" />
<circle cx="514.8" cy="410.0" r="2.0" fill="#cda066" />
<circle cx="514.8" cy="410.0" r="0.8" fill="#7b4c1e" />
<circle cx="519.4" cy="410.0" r="2.0" fill="#cda066" />
<circle cx="519.4" cy="410.0" r="0.8" fill="#7b4c1e" />
<circle cx="524.0" cy="410.0" r="2.0" fill="#cda066" />
<circle cx="524.0" cy="410.0" r="0.8" fill="#7b4c1e" />
<circle cx="528.6" cy="410.0" r="2.0" fill="#cda066" />
<circle cx="528.6" cy="410.0" r="0.8" fill="#7b4c1e" />
<circle cx="510.2" cy="414.8" r="2.0" fill="#cda066" />
<circle cx="510.2" cy="414.8" r="0.8" fill="#7b4c1e" />
<circle cx="514.8" cy="414.8" r="2.0" fill="#cda066" />
<circle cx="514.8" cy="414.8" r="0.8" fill="#7b4c1e" />
<circle cx="519.4" cy="414.8" r="2.0" fill="#cda066" />
<circle cx="519.4" cy="414.8" r="0.8" fill="#7b4c1e" />
<circle cx="524.0" cy="414.8" r="2.0" fill="#cda066" />
<circle cx="524.0" cy="414.8" r="0.8" fill="#7b4c1e" />
<circle cx="528.6" cy="414.8" r="2.0" fill="#cda066" />
<circle cx="528.6" cy="414.8" r="0.8" fill="#7b4c1e" />
<circle cx="510.2" cy="419.6" r="2.0" fill="#cda066" />
<circle cx="510.2" cy="419.6" r="0.8" fill="#7b4c1e" />
<circle cx="514.8" cy="419.6" r="2.0" fill="#cda066" />
<circle cx="514.8" cy="419.6" r="0.8" fill="#7b4c1e" />
<circle cx="519.4" cy="419.6" r="2.0" fill="#cda066" />
<circle cx="519.4" cy="419.6" r="0.8" fill="#7b4c1e" />
<circle cx="524.0" cy="419.6" r="2.0" fill="#cda066" />
<circle cx="524.0" cy="419.6" r="0.8" fill="#7b4c1e" />
<circle cx="528.6" cy="419.6" r="2.0" fill="#cda066" />
<circle cx="528.6" cy="419.6" r="0.8" fill="#7b4c1e" />
<circle cx="510.2" cy="424.5" r="2.0" fill="#cda066" />
<circle cx="510.2" cy="424.5" r="0.8" fill="#7b4c1e" />
<circle cx="514.8" cy="424.5" r="2.0" fill="#cda066" />
<circle cx="514.8" cy="424.5" r="0.8" fill="#7b4c1e" />
<circle cx="519.4" cy="424.5" r="2.0" fill="#cda066" />
<circle cx="519.4" cy="424.5" r="0.8" fill="#7b4c1e" />
<circle cx="524.0" cy="424.5" r="2.0" fill="#cda066" />
<circle cx="524.0" cy="424.5" r="0.8" fill="#7b4c1e" />
<circle cx="528.6" cy="424.5" r="2.0" fill="#cda066" />
<circle cx="528.6" cy="424.5" r="0.8" fill="#7b4c1e" />
<circle cx="510.2" cy="429.3" r="2.0" fill="#cda066" />
<circle cx="510.2" cy="429.3" r="0.8" fill="#7b4c1e" />
<circle cx="514.8" cy="429.3" r="2.0" fill="#cda066" />
<circle cx="514.8" cy="429.3" r="0.8" fill="#7b4c1e" />
<circle cx="519.4" cy="429.3" r="2.0" fill="#cda066" />
<circle cx="519.4" cy="429.3" r="0.8" fill="#7b4c1e" />
<circle cx="524.0" cy="429.3" r="2.0" fill="#cda066" />
<circle cx="524.0" cy="429.3" r="0.8" fill="#7b4c1e" />
<circle cx="528.6" cy="429.3" r="2.0" fill="#cda066" />
<circle cx="528.6" cy="429.3" r="0.8" fill="#7b4c1e" />
<circle cx="510.2" cy="434.1" r="2.0" fill="#cda066" />
<circle cx="510.2" cy="434.1" r="0.8" fill="#7b4c1e" />
<circle cx="514.8" cy="434.1" r="2.0" fill="#cda066" />
<circle cx="514.8" cy="434.1" r="0.8" fill="#7b4c1e" />
<circle cx="519.4" cy="434.1" r="2.0" fill="#cda066" />
<circle cx="519.4" cy="434.1" r="0.8" fill="#7b4c1e" />
<circle cx="524.0" cy="434.1" r="2.0" fill="#cda066" />
<circle cx="524.0" cy="434.1" r="0.8" fill="#7b4c1e" />
<circle cx="528.6" cy="434.1" r="2.0" fill="#cda066" />
<circle cx="528.6" cy="434.1" r="0.8" fill="#7b4c1e" />
<circle cx="510.2" cy="438.9" r="2.0" fill="#cda066" />
<circle cx="510.2" cy="438.9" r="0.8" fill="#7b4c1e" />
<circle cx="514.8" cy="438.9" r="2.0" fill="#cda066" />
<circle cx="514.8" cy="438.9" r="0.8" fill="#7b4c1e" />
<circle cx="519.4" cy="438.9" r="2.0" fill="#cda066" />
<circle cx="519.4" cy="438.9" r="0.8" fill="#7b4c1e" />
<circle cx="524.0" cy="438.9" r="2.0" fill="#cda066" />
<circle cx="524.0" cy="438.9" r="0.8" fill="#7b4c1e" />
<circle cx="528.6" cy="438.9" r="2.0" fill="#cda066" />
<circle cx="528.6" cy="438.9" r="0.8" fill="#7b4c1e" />
<circle cx="510.2" cy="443.8" r="2.0" fill="#cda066" />
<circle cx="510.2" cy="443.8" r="0.8" fill="#7b4c1e" />
<circle cx="514.8" cy="443.8" r="2.0" fill="#cda066" />
<circle cx="514.8" cy="443.8" r="0.8" fill="#7b4c1e" />
<circle cx="519.4" cy="443.8" r="2.0" fill="#cda066" />
<circle cx="519.4" cy="443.8" r="0.8" fill="#7b4c1e" />
<circle cx="524.0" cy="443.8" r="2.0" fill="#cda066" />
<circle cx="524.0" cy="443.8" r="0.8" fill="#7b4c1e" />
<circle cx="528.6" cy="443.8" r="2.0" fill="#cda066" />
<circle cx="528.6" cy="443.8" r="0.8" fill="#7b4c1e" />
<circle cx="510.2" cy="448.6" r="2.0" fill="#cda066" />
<circle cx="510.2" cy="448.6" r="0.8" fill="#7b4c1e" />
<circle cx="514.8" cy="448.6" r="2.0" fill="#cda066" />
<circle cx="514.8" cy="448.6" r="0.8" fill="#7b4c1e" />
<circle cx="519.4" cy="448.6" r="2.0" fill="#cda066" />
<circle cx="519.4" cy="448.6" r="0.8" fill="#7b4c1e" />
<circle cx="524.0" cy="448.6" r="2.0" fill="#cda066" />
<circle cx="524.0" cy="448.6" r="0.8" fill="#7b4c1e" />
<circle cx="528.6" cy="448.6" r="2.0" fill="#cda066" />
<circle cx="528.6" cy="448.6" r="0.8" fill="#7b4c1e" />
<circle cx="510.2" cy="453.4" r="2.0" fill="#cda066" />
<circle cx="510.2" cy="453.4" r="0.8" fill="#7b4c1e" />
<circle cx="514.8" cy="453.4" r="2.0" fill="#cda066" />
<circle cx="514.8" cy="453.4" r="0.8" fill="#7b4c1e" />
<circle cx="519.4" cy="453.4" r="2.0" fill="#cda066" />
<circle cx="519.4" cy="453.4" r="0.8" fill="#7b4c1e" />
<circle cx="524.0" cy="453.4" r="2.0" fill="#cda066" />
<circle cx="524.0" cy="453.4" r="0.8" fill="#7b4c1e" />
<circle cx="528.6" cy="453.4" r="2.0" fill="#cda066" />
<circle cx="528.6" cy="453.4" r="0.8" fill="#7b4c1e" />
<circle cx="510.2" cy="458.3" r="2.0" fill="#cda066" />
<circle cx="510.2" cy="458.3" r="0.8" fill="#7b4c1e" />
<circle cx="514.8" cy="458.3" r="2.0" fill="#cda066" />
<circle cx="514.8" cy="458.3" r="0.8" fill="#7b4c1e" />
<circle cx="519.4" cy="458.3" r="2.0" fill="#cda066" />
<circle cx="519.4" cy="458.3" r="0.8" fill="#7b4c1e" />
<circle cx="524.0" cy="458.3" r="2.0" fill="#cda066" />
<circle cx="524.0" cy="458.3" r="0.8" fill="#7b4c1e" />
<circle cx="528.6" cy="458.3" r="2.0" fill="#cda066" />
<circle cx="528.6" cy="458.3" r="0.8" fill="#7b4c1e" />
<circle cx="510.2" cy="463.1" r="2.0" fill="#cda066" />
<circle cx="510.2" cy="463.1" r="0.8" fill="#7b4c1e" />
<circle cx="514.8" cy="463.1" r="2.0" fill="#cda066" />
<circle cx="514.8" cy="463.1" r="0.8" fill="#7b4c1e" />
<circle cx="519.4" cy="463.1" r="2.0" fill="#cda066" />
<circle cx="519.4" cy="463.1" r="0.8" fill="#7b4c1e" />
<circle cx="524.0" cy="463.1" r="2.0" fill="#cda066" />
<circle cx="524.0" cy="463.1" r="0.8" fill="#7b4c1e" />
<circle cx="528.6" cy="463.1" r="2.0" fill="#cda066" />
<circle cx="528.6" cy="463.1" r="0.8" fill="#7b4c1e" />
<circle cx="510.2" cy="467.9" r="2.0" fill="#cda066" />
<circle cx="510.2" cy="467.9" r="0.8" fill="#7b4c1e" />
<circle cx="514.8" cy="467.9" r="2.0" fill="#cda066" />
<circle cx="514.8" cy="467.9" r="0.8" fill="#7b4c1e" />
<circle cx="519.4" cy="467.9" r="2.0" fill="#cda066" />
<circle cx="519.4" cy="467.9" r="0.8" fill="#7b4c1e" />
<circle cx="524.0" cy="467.9" r="2.0" fill="#cda066" />
<circle cx="524.0" cy="467.9" r="0.8" fill="#7b4c1e" />
<circle cx="528.6" cy="467.9" r="2.0" fill="#cda066" />
<circle cx="528.6" cy="467.9" r="0.8" fill="#7b4c1e" />
<circle cx="510.2" cy="472.8" r="2.0" fill="#cda066" />
<circle cx="510.2" cy="472.8" r="0.8" fill="#7b4c1e" />
<circle cx="514.8" cy="472.8" r="2.0" fill="#cda066" />
<circle cx="514.8" cy="472.8" r="0.8" fill="#7b4c1e" />
<circle cx="519.4" cy="472.8" r="2.0" fill="#cda066" />
<circle cx="519.4" cy="472.8" r="0.8" fill="#7b4c1e" />
<circle cx="524.0" cy="472.8" r="2.0" fill="#cda066" />
<circle cx="524.0" cy="472.8" r="0.8" fill="#7b4c1e" />
<circle cx="528.6" cy="472.8" r="2.0" fill="#cda066" />
<circle cx="528.6" cy="472.8" r="0.8" fill="#7b4c1e" />
<circle cx="510.2" cy="477.6" r="2.0" fill="#cda066" />
<circle cx="510.2" cy="477.6" r="0.8" fill="#7b4c1e" />
<circle cx="514.8" cy="477.6" r="2.0" fill="#cda066" />
<circle cx="514.8" cy="477.6" r="0.8" fill="#7b4c1e" />
<circle cx="519.4" cy="477.6" r="2.0" fill="#cda066" />
<circle cx="519.4" cy="477.6" r="0.8" fill="#7b4c1e" />
<circle cx="524.0" cy="477.6" r="2.0" fill="#cda066" />
<circle cx="524.0" cy="477.6" r="0.8" fill="#7b4c1e" />
<circle cx="528.6" cy="477.6" r="2.0" fill="#cda066" />
<circle cx="528.6" cy="477.6" r="0.8" fill="#7b4c1e" />
<circle cx="510.2" cy="482.4" r="2.0" fill="#cda066" />
<circle cx="510.2" cy="482.4" r="0.8" fill="#7b4c1e" />
<circle cx="514.8" cy="482.4" r="2.0" fill="#cda066" />
<circle cx="514.8" cy="482.4" r="0.8" fill="#7b4c1e" />
<circle cx="519.4" cy="482.4" r="2.0" fill="#cda066" />
<circle cx="519.4" cy="482.4" r="0.8" fill="#7b4c1e" />
<circle cx="524.0" cy="482.4" r="2.0" fill="#cda066" />
<circle cx="524.0" cy="482.4" r="0.8" fill="#7b4c1e" />
<circle cx="528.6" cy="482.4" r="2.0" fill="#cda066" />
<circle cx="528.6" cy="482.4" r="0.8" fill="#7b4c1e" />
<text x="519" y="429" font-size="13.5" fill="#f0f070" text-anchor="middle" transform="rotate(-90 519 424)">P3</text>
<rect x="541.5" y="415.0" width="1.4" height="10.0" fill="#c8d0b8" opacity=".55"/>
<rect x="582.5" y="414.4" width="8.0" height="5.2" fill="none" stroke="#c9c9b4" stroke-width="0.5"/>
<rect x="583.0" y="414.9" width="2.9" height="4.2" fill="#cda066" />
<rect x="587.1" y="414.9" width="2.9" height="4.2" fill="#cda066" />
<rect x="583.9" y="422.0" width="5.2" height="8.0" fill="none" stroke="#c9c9b4" stroke-width="0.5"/>
<rect x="584.4" y="422.5" width="4.2" height="2.9" fill="#cda066" />
<rect x="584.4" y="426.6" width="4.2" height="2.9" fill="#cda066" />
<rect x="583.9" y="432.0" width="5.2" height="8.0" fill="none" stroke="#c9c9b4" stroke-width="0.5"/>
<rect x="584.4" y="432.5" width="4.2" height="2.9" fill="#cda066" />
<rect x="584.4" y="436.6" width="4.2" height="2.9" fill="#cda066" />
<rect x="582.5" y="441.4" width="8.0" height="5.2" fill="none" stroke="#c9c9b4" stroke-width="0.5"/>
<rect x="583.0" y="441.9" width="2.9" height="4.2" fill="#cda066" />
<rect x="587.1" y="441.9" width="2.9" height="4.2" fill="#cda066" />
<rect x="593.0" y="413.0" width="5.0" height="1.2" fill="#c8d0b8" opacity=".55"/>
<rect x="593.0" y="418.0" width="5.0" height="1.2" fill="#c8d0b8" opacity=".55"/>
<rect x="593.0" y="426.0" width="1.2" height="5.0" fill="#c8d0b8" opacity=".55"/>
<rect x="593.0" y="436.0" width="1.2" height="5.0" fill="#c8d0b8" opacity=".55"/>
<rect x="593.0" y="444.0" width="5.0" height="1.2" fill="#c8d0b8" opacity=".55"/>
<rect x="565.0" y="451.0" width="8.0" height="10.0" fill="none" stroke="#c9c9b4" stroke-width="0.5"/>
<rect x="565.5" y="451.5" width="2.9" height="9.0" fill="#cda066" />
<rect x="569.6" y="451.5" width="2.9" height="9.0" fill="#cda066" />
<rect x="582.0" y="451.0" width="8.0" height="10.0" fill="none" stroke="#c9c9b4" stroke-width="0.5"/>
<rect x="582.5" y="451.5" width="2.9" height="9.0" fill="#cda066" />
<rect x="586.6" y="451.5" width="2.9" height="9.0" fill="#cda066" />
<rect x="565.0" y="465.7" width="8.0" height="4.6" fill="none" stroke="#c9c9b4" stroke-width="0.5"/>
<rect x="565.5" y="466.2" width="2.9" height="3.6" fill="#cda066" />
<rect x="569.6" y="466.2" width="2.9" height="3.6" fill="#cda066" />
<rect x="565.0" y="470.7" width="8.0" height="4.6" fill="none" stroke="#c9c9b4" stroke-width="0.5"/>
<rect x="565.5" y="471.2" width="2.9" height="3.6" fill="#cda066" />
<rect x="569.6" y="471.2" width="2.9" height="3.6" fill="#cda066" />
<rect x="575.0" y="467.0" width="5.0" height="1.2" fill="#c8d0b8" opacity=".55"/>
<rect x="575.0" y="472.0" width="5.0" height="1.2" fill="#c8d0b8" opacity=".55"/>
<rect x="561.0" y="480.0" width="14.0" height="6.0" fill="none" stroke="#c9c9b4" stroke-width="0.5"/>
<rect x="561.5" y="480.5" width="5.5" height="5.0" fill="#cda066" />
<rect x="569.0" y="480.5" width="5.5" height="5.0" fill="#cda066" />
<rect x="561.0" y="488.0" width="14.0" height="6.0" fill="none" stroke="#c9c9b4" stroke-width="0.5"/>
<rect x="561.5" y="488.5" width="5.5" height="5.0" fill="#cda066" />
<rect x="569.0" y="488.5" width="5.5" height="5.0" fill="#cda066" />
<rect x="546.0" y="482.0" width="9.0" height="1.6" fill="#c8d0b8" opacity=".55"/>
<rect x="546.0" y="490.0" width="9.0" height="1.6" fill="#c8d0b8" opacity=".55"/>
<rect x="582.0" y="475.5" width="2.5" height="3.0" fill="#cda066" />
<rect x="585.5" y="475.5" width="2.5" height="3.0" fill="#cda066" />
<rect x="582.0" y="479.5" width="2.5" height="3.0" fill="#cda066" />
<rect x="585.5" y="479.5" width="2.5" height="3.0" fill="#cda066" />
<rect x="582.0" y="483.5" width="2.5" height="3.0" fill="#cda066" />
<rect x="585.5" y="483.5" width="2.5" height="3.0" fill="#cda066" />
<circle cx="580.5" cy="491.0" r="1.2" fill="#d2b070" />
<circle cx="543.0" cy="494.0" r="2.3" fill="#d2b070" />
<circle cx="543.0" cy="494.0" r="1.0" fill="#8a6a30" />
<rect x="511.0" y="501.0" width="3.0" height="1.2" fill="#c8d0b8" opacity=".55"/>
<path d="M606.0 420 v-19.2 M608.0 420 v-21.4 M610.1 420 v-22.3 M612.1 420 v-25.0 M614.2 420 v-21.3 M616.2 420 v-24.6 M618.3 420 v-8.5 M620.4 420 v-16.4 M622.4 420 v-25.0 M624.5 420 v-19.7 M626.5 420 v-24.2 M628.5 420 v-10.0 M630.6 420 v-16.4 M632.6 420 v-12.4 M634.7 420 v-17.8 M636.8 420 v-18.3 M638.8 420 v-8.2 M640.9 420 v-11.9 M642.9 420 v-13.0 M645.0 420 v-24.5 M647.0 420 v-21.8 M649.0 420 v-10.9 M651.1 420 v-22.3 M653.1 420 v-10.5 M655.2 420 v-19.1 M657.2 420 v-10.3 M659.3 420 v-8.0 M661.4 420 v-23.7 M663.4 420 v-11.8 M665.5 420 v-11.9 M667.5 420 v-25.7 M669.5 420 v-23.7 M671.6 420 v-13.2 M673.6 420 v-25.3 M675.7 420 v-17.7 M677.8 420 v-20.2 M604.0 496 v17.0 M606.0 496 v42.0 M608.1 496 v33.5 M610.1 496 v42.9 M612.2 496 v40.4 M614.2 496 v20.2 M616.3 496 v22.3 M618.4 496 v15.6 M620.4 496 v15.0 M622.5 496 v12.2 M624.5 496 v20.2 M626.5 496 v30.5 M628.6 496 v10.1 M630.6 496 v33.0 M632.7 496 v21.5 M634.8 496 v20.5 M636.8 496 v37.8 M638.9 496 v26.3 M640.9 496 v20.7 M643.0 496 v26.4 M645.0 496 v34.0 M647.0 496 v11.9 M649.1 496 v43.2 M651.1 496 v10.8 M653.2 496 v35.5 M655.2 496 v38.7 M657.3 496 v10.6 M659.4 496 v36.8 M661.4 496 v22.5 M663.5 496 v29.7 M665.5 496 v10.3 M667.5 496 v11.6 M669.6 496 v16.2 M671.6 496 v42.5 M605 424.0 h-6.4 M605 426.3 h-13.1 M605 428.6 h-15.2 M605 430.9 h-15.3 M605 433.2 h-8.1 M605 435.5 h-8.3 M605 437.8 h-10.3 M605 440.1 h-13.3 M605 442.4 h-5.3 M605 444.7 h-13.0 M605 447.0 h-13.6 M605 449.3 h-14.3 M605 451.6 h-4.4 M605 453.9 h-15.3 M605 456.2 h-5.1 M605 458.5 h-27.0 M605 460.8 h-40.5 M605 463.1 h-55.9 M605 465.4 h-27.0 M605 467.7 h-56.2 M605 470.0 h-37.3 M605 472.3 h-25.6 M605 474.6 h-25.8 M605 476.9 h-18.9 M605 479.2 h-13.9 M605 481.5 h-17.4 M605 483.8 h-44.5 M605 486.1 h-59.8 M605 488.4 h-5.9 M605 490.7 h-4.6 M682 421.0 h29.7 M682 423.2 h18.8 M682 425.4 h15.7 M682 427.6 h11.7 M682 429.8 h20.3 M682 432.0 h25.8 M682 434.2 h16.9 M682 436.4 h16.1 M682 438.6 h7.3 M682 440.8 h28.0 M682 443.0 h6.8 M682 445.2 h17.8 M682 447.4 h26.1 M682 449.6 h9.1 M682 451.8 h23.6 M682 454.0 h28.8 M682 456.2 h21.1 M682 458.4 h24.9 M682 460.6 h8.6 M682 462.8 h16.4 M682 465.0 h9.6 M682 467.2 h26.3 M682 469.4 h13.1 M682 471.6 h16.9 M682 473.8 h30.0 M682 476.0 h26.5 M682 478.2 h29.4 M682 480.4 h16.9 M682 482.6 h17.7 M682 484.8 h23.5 M682 487.0 h17.5 M682 489.2 h13.0 M682 491.4 h15.7 M682 493.6 h9.5" stroke="#1c4a16" stroke-width="1" opacity=".85" fill="none"/>
<rect x="605.6" y="420.0" width="75.9" height="75.8" fill="none" stroke="#b8b8a8" stroke-width="0.6"/>
<rect x="608.5" y="422.5" width="71.0" height="71.0" fill="none" stroke="#8ac060" stroke-width=".8"/>
<rect x="609.0" y="423.0" width="70.0" height="70.0" fill="#2a6a1e" />
<path d="M610.10 423.5 v69 M612.25 423.5 v69 M614.40 423.5 v69 M616.55 423.5 v69 M618.70 423.5 v69 M620.85 423.5 v69 M623.00 423.5 v69 M625.15 423.5 v69 M627.30 423.5 v69 M629.45 423.5 v69 M631.60 423.5 v69 M633.75 423.5 v69 M635.90 423.5 v69 M638.05 423.5 v69 M640.20 423.5 v69 M642.35 423.5 v69 M644.50 423.5 v69 M646.65 423.5 v69 M648.80 423.5 v69 M650.95 423.5 v69 M653.10 423.5 v69 M655.25 423.5 v69 M657.40 423.5 v69 M659.55 423.5 v69 M661.70 423.5 v69 M663.85 423.5 v69 M666.00 423.5 v69 M668.15 423.5 v69 M670.30 423.5 v69 M672.45 423.5 v69 M674.60 423.5 v69 M676.75 423.5 v69 M678.90 423.5 v69 M609.5 424.10 h69 M609.5 426.25 h69 M609.5 428.40 h69 M609.5 430.55 h69 M609.5 432.70 h69 M609.5 434.85 h69 M609.5 437.00 h69 M609.5 439.15 h69 M609.5 441.30 h69 M609.5 443.45 h69 M609.5 445.60 h69 M609.5 447.75 h69 M609.5 449.90 h69 M609.5 452.05 h69 M609.5 454.20 h69 M609.5 456.35 h69 M609.5 458.50 h69 M609.5 460.65 h69 M609.5 462.80 h69 M609.5 464.95 h69 M609.5 467.10 h69 M609.5 469.25 h69 M609.5 471.40 h69 M609.5 473.55 h69 M609.5 475.70 h69 M609.5 477.85 h69 M609.5 480.00 h69 M609.5 482.15 h69 M609.5 484.30 h69 M609.5 486.45 h69 M609.5 488.60 h69 M609.5 490.75 h69 M609.5 492.90 h69" stroke="#b0904e" stroke-width=".45"/>
<path d="M609.50 423.50h1.25v1.25h-1.25zM609.50 425.65h1.25v1.25h-1.25zM609.50 427.80h1.25v1.25h-1.25zM609.50 429.95h1.25v1.25h-1.25zM609.50 432.10h1.25v1.25h-1.25zM609.50 434.25h1.25v1.25h-1.25zM609.50 436.40h1.25v1.25h-1.25zM609.50 438.55h1.25v1.25h-1.25zM609.50 440.70h1.25v1.25h-1.25zM609.50 442.85h1.25v1.25h-1.25zM609.50 445.00h1.25v1.25h-1.25zM609.50 447.15h1.25v1.25h-1.25zM609.50 449.30h1.25v1.25h-1.25zM609.50 451.45h1.25v1.25h-1.25zM609.50 453.60h1.25v1.25h-1.25zM609.50 455.75h1.25v1.25h-1.25zM609.50 457.90h1.25v1.25h-1.25zM609.50 460.05h1.25v1.25h-1.25zM609.50 462.20h1.25v1.25h-1.25zM609.50 464.35h1.25v1.25h-1.25zM609.50 466.50h1.25v1.25h-1.25zM609.50 468.65h1.25v1.25h-1.25zM609.50 470.80h1.25v1.25h-1.25zM609.50 472.95h1.25v1.25h-1.25zM609.50 475.10h1.25v1.25h-1.25zM609.50 477.25h1.25v1.25h-1.25zM609.50 479.40h1.25v1.25h-1.25zM609.50 481.55h1.25v1.25h-1.25zM609.50 483.70h1.25v1.25h-1.25zM609.50 485.85h1.25v1.25h-1.25zM609.50 488.00h1.25v1.25h-1.25zM609.50 490.15h1.25v1.25h-1.25zM609.50 492.30h1.25v1.25h-1.25zM611.65 423.50h1.25v1.25h-1.25zM611.65 425.65h1.25v1.25h-1.25zM611.65 427.80h1.25v1.25h-1.25zM611.65 429.95h1.25v1.25h-1.25zM611.65 432.10h1.25v1.25h-1.25zM611.65 434.25h1.25v1.25h-1.25zM611.65 436.40h1.25v1.25h-1.25zM611.65 438.55h1.25v1.25h-1.25zM611.65 440.70h1.25v1.25h-1.25zM611.65 442.85h1.25v1.25h-1.25zM611.65 445.00h1.25v1.25h-1.25zM611.65 447.15h1.25v1.25h-1.25zM611.65 449.30h1.25v1.25h-1.25zM611.65 451.45h1.25v1.25h-1.25zM611.65 453.60h1.25v1.25h-1.25zM611.65 455.75h1.25v1.25h-1.25zM611.65 457.90h1.25v1.25h-1.25zM611.65 460.05h1.25v1.25h-1.25zM611.65 462.20h1.25v1.25h-1.25zM611.65 464.35h1.25v1.25h-1.25zM611.65 466.50h1.25v1.25h-1.25zM611.65 468.65h1.25v1.25h-1.25zM611.65 470.80h1.25v1.25h-1.25zM611.65 472.95h1.25v1.25h-1.25zM611.65 475.10h1.25v1.25h-1.25zM611.65 477.25h1.25v1.25h-1.25zM611.65 479.40h1.25v1.25h-1.25zM611.65 481.55h1.25v1.25h-1.25zM611.65 483.70h1.25v1.25h-1.25zM611.65 485.85h1.25v1.25h-1.25zM611.65 488.00h1.25v1.25h-1.25zM611.65 490.15h1.25v1.25h-1.25zM611.65 492.30h1.25v1.25h-1.25zM613.80 423.50h1.25v1.25h-1.25zM613.80 425.65h1.25v1.25h-1.25zM613.80 427.80h1.25v1.25h-1.25zM613.80 429.95h1.25v1.25h-1.25zM613.80 432.10h1.25v1.25h-1.25zM613.80 434.25h1.25v1.25h-1.25zM613.80 436.40h1.25v1.25h-1.25zM613.80 438.55h1.25v1.25h-1.25zM613.80 440.70h1.25v1.25h-1.25zM613.80 442.85h1.25v1.25h-1.25zM613.80 445.00h1.25v1.25h-1.25zM613.80 447.15h1.25v1.25h-1.25zM613.80 449.30h1.25v1.25h-1.25zM613.80 451.45h1.25v1.25h-1.25zM613.80 453.60h1.25v1.25h-1.25zM613.80 455.75h1.25v1.25h-1.25zM613.80 457.90h1.25v1.25h-1.25zM613.80 460.05h1.25v1.25h-1.25zM613.80 462.20h1.25v1.25h-1.25zM613.80 464.35h1.25v1.25h-1.25zM613.80 466.50h1.25v1.25h-1.25zM613.80 468.65h1.25v1.25h-1.25zM613.80 470.80h1.25v1.25h-1.25zM613.80 472.95h1.25v1.25h-1.25zM613.80 475.10h1.25v1.25h-1.25zM613.80 477.25h1.25v1.25h-1.25zM613.80 479.40h1.25v1.25h-1.25zM613.80 481.55h1.25v1.25h-1.25zM613.80 483.70h1.25v1.25h-1.25zM613.80 485.85h1.25v1.25h-1.25zM613.80 488.00h1.25v1.25h-1.25zM613.80 490.15h1.25v1.25h-1.25zM613.80 492.30h1.25v1.25h-1.25zM615.95 423.50h1.25v1.25h-1.25zM615.95 425.65h1.25v1.25h-1.25zM615.95 427.80h1.25v1.25h-1.25zM615.95 429.95h1.25v1.25h-1.25zM615.95 432.10h1.25v1.25h-1.25zM615.95 434.25h1.25v1.25h-1.25zM615.95 436.40h1.25v1.25h-1.25zM615.95 438.55h1.25v1.25h-1.25zM615.95 440.70h1.25v1.25h-1.25zM615.95 442.85h1.25v1.25h-1.25zM615.95 445.00h1.25v1.25h-1.25zM615.95 447.15h1.25v1.25h-1.25zM615.95 449.30h1.25v1.25h-1.25zM615.95 451.45h1.25v1.25h-1.25zM615.95 453.60h1.25v1.25h-1.25zM615.95 455.75h1.25v1.25h-1.25zM615.95 457.90h1.25v1.25h-1.25zM615.95 460.05h1.25v1.25h-1.25zM615.95 462.20h1.25v1.25h-1.25zM615.95 464.35h1.25v1.25h-1.25zM615.95 466.50h1.25v1.25h-1.25zM615.95 468.65h1.25v1.25h-1.25zM615.95 470.80h1.25v1.25h-1.25zM615.95 472.95h1.25v1.25h-1.25zM615.95 475.10h1.25v1.25h-1.25zM615.95 477.25h1.25v1.25h-1.25zM615.95 479.40h1.25v1.25h-1.25zM615.95 481.55h1.25v1.25h-1.25zM615.95 483.70h1.25v1.25h-1.25zM615.95 485.85h1.25v1.25h-1.25zM615.95 488.00h1.25v1.25h-1.25zM615.95 490.15h1.25v1.25h-1.25zM615.95 492.30h1.25v1.25h-1.25zM618.10 423.50h1.25v1.25h-1.25zM618.10 425.65h1.25v1.25h-1.25zM618.10 427.80h1.25v1.25h-1.25zM618.10 429.95h1.25v1.25h-1.25zM618.10 432.10h1.25v1.25h-1.25zM618.10 434.25h1.25v1.25h-1.25zM618.10 436.40h1.25v1.25h-1.25zM618.10 438.55h1.25v1.25h-1.25zM618.10 440.70h1.25v1.25h-1.25zM618.10 442.85h1.25v1.25h-1.25zM618.10 445.00h1.25v1.25h-1.25zM618.10 447.15h1.25v1.25h-1.25zM618.10 449.30h1.25v1.25h-1.25zM618.10 451.45h1.25v1.25h-1.25zM618.10 453.60h1.25v1.25h-1.25zM618.10 455.75h1.25v1.25h-1.25zM618.10 457.90h1.25v1.25h-1.25zM618.10 460.05h1.25v1.25h-1.25zM618.10 462.20h1.25v1.25h-1.25zM618.10 464.35h1.25v1.25h-1.25zM618.10 466.50h1.25v1.25h-1.25zM618.10 468.65h1.25v1.25h-1.25zM618.10 470.80h1.25v1.25h-1.25zM618.10 472.95h1.25v1.25h-1.25zM618.10 475.10h1.25v1.25h-1.25zM618.10 477.25h1.25v1.25h-1.25zM618.10 479.40h1.25v1.25h-1.25zM618.10 481.55h1.25v1.25h-1.25zM618.10 483.70h1.25v1.25h-1.25zM618.10 485.85h1.25v1.25h-1.25zM618.10 488.00h1.25v1.25h-1.25zM618.10 490.15h1.25v1.25h-1.25zM618.10 492.30h1.25v1.25h-1.25zM620.25 423.50h1.25v1.25h-1.25zM620.25 425.65h1.25v1.25h-1.25zM620.25 427.80h1.25v1.25h-1.25zM620.25 429.95h1.25v1.25h-1.25zM620.25 432.10h1.25v1.25h-1.25zM620.25 434.25h1.25v1.25h-1.25zM620.25 436.40h1.25v1.25h-1.25zM620.25 438.55h1.25v1.25h-1.25zM620.25 440.70h1.25v1.25h-1.25zM620.25 442.85h1.25v1.25h-1.25zM620.25 445.00h1.25v1.25h-1.25zM620.25 447.15h1.25v1.25h-1.25zM620.25 449.30h1.25v1.25h-1.25zM620.25 451.45h1.25v1.25h-1.25zM620.25 453.60h1.25v1.25h-1.25zM620.25 455.75h1.25v1.25h-1.25zM620.25 457.90h1.25v1.25h-1.25zM620.25 460.05h1.25v1.25h-1.25zM620.25 462.20h1.25v1.25h-1.25zM620.25 464.35h1.25v1.25h-1.25zM620.25 466.50h1.25v1.25h-1.25zM620.25 468.65h1.25v1.25h-1.25zM620.25 470.80h1.25v1.25h-1.25zM620.25 472.95h1.25v1.25h-1.25zM620.25 475.10h1.25v1.25h-1.25zM620.25 477.25h1.25v1.25h-1.25zM620.25 479.40h1.25v1.25h-1.25zM620.25 481.55h1.25v1.25h-1.25zM620.25 483.70h1.25v1.25h-1.25zM620.25 485.85h1.25v1.25h-1.25zM620.25 488.00h1.25v1.25h-1.25zM620.25 490.15h1.25v1.25h-1.25zM620.25 492.30h1.25v1.25h-1.25zM622.40 423.50h1.25v1.25h-1.25zM622.40 425.65h1.25v1.25h-1.25zM622.40 427.80h1.25v1.25h-1.25zM622.40 429.95h1.25v1.25h-1.25zM622.40 432.10h1.25v1.25h-1.25zM622.40 434.25h1.25v1.25h-1.25zM622.40 479.40h1.25v1.25h-1.25zM622.40 481.55h1.25v1.25h-1.25zM622.40 483.70h1.25v1.25h-1.25zM622.40 485.85h1.25v1.25h-1.25zM622.40 488.00h1.25v1.25h-1.25zM622.40 490.15h1.25v1.25h-1.25zM622.40 492.30h1.25v1.25h-1.25zM624.55 423.50h1.25v1.25h-1.25zM624.55 425.65h1.25v1.25h-1.25zM624.55 427.80h1.25v1.25h-1.25zM624.55 429.95h1.25v1.25h-1.25zM624.55 432.10h1.25v1.25h-1.25zM624.55 434.25h1.25v1.25h-1.25zM624.55 479.40h1.25v1.25h-1.25zM624.55 481.55h1.25v1.25h-1.25zM624.55 483.70h1.25v1.25h-1.25zM624.55 485.85h1.25v1.25h-1.25zM624.55 488.00h1.25v1.25h-1.25zM624.55 490.15h1.25v1.25h-1.25zM624.55 492.30h1.25v1.25h-1.25zM626.70 423.50h1.25v1.25h-1.25zM626.70 425.65h1.25v1.25h-1.25zM626.70 427.80h1.25v1.25h-1.25zM626.70 429.95h1.25v1.25h-1.25zM626.70 432.10h1.25v1.25h-1.25zM626.70 434.25h1.25v1.25h-1.25zM626.70 479.40h1.25v1.25h-1.25zM626.70 481.55h1.25v1.25h-1.25zM626.70 483.70h1.25v1.25h-1.25zM626.70 485.85h1.25v1.25h-1.25zM626.70 488.00h1.25v1.25h-1.25zM626.70 490.15h1.25v1.25h-1.25zM626.70 492.30h1.25v1.25h-1.25zM628.85 423.50h1.25v1.25h-1.25zM628.85 425.65h1.25v1.25h-1.25zM628.85 427.80h1.25v1.25h-1.25zM628.85 429.95h1.25v1.25h-1.25zM628.85 432.10h1.25v1.25h-1.25zM628.85 434.25h1.25v1.25h-1.25zM628.85 479.40h1.25v1.25h-1.25zM628.85 481.55h1.25v1.25h-1.25zM628.85 483.70h1.25v1.25h-1.25zM628.85 485.85h1.25v1.25h-1.25zM628.85 488.00h1.25v1.25h-1.25zM628.85 490.15h1.25v1.25h-1.25zM628.85 492.30h1.25v1.25h-1.25zM631.00 423.50h1.25v1.25h-1.25zM631.00 425.65h1.25v1.25h-1.25zM631.00 427.80h1.25v1.25h-1.25zM631.00 429.95h1.25v1.25h-1.25zM631.00 432.10h1.25v1.25h-1.25zM631.00 434.25h1.25v1.25h-1.25zM631.00 479.40h1.25v1.25h-1.25zM631.00 481.55h1.25v1.25h-1.25zM631.00 483.70h1.25v1.25h-1.25zM631.00 485.85h1.25v1.25h-1.25zM631.00 488.00h1.25v1.25h-1.25zM631.00 490.15h1.25v1.25h-1.25zM631.00 492.30h1.25v1.25h-1.25zM633.15 423.50h1.25v1.25h-1.25zM633.15 425.65h1.25v1.25h-1.25zM633.15 427.80h1.25v1.25h-1.25zM633.15 429.95h1.25v1.25h-1.25zM633.15 432.10h1.25v1.25h-1.25zM633.15 434.25h1.25v1.25h-1.25zM633.15 479.40h1.25v1.25h-1.25zM633.15 481.55h1.25v1.25h-1.25zM633.15 483.70h1.25v1.25h-1.25zM633.15 485.85h1.25v1.25h-1.25zM633.15 488.00h1.25v1.25h-1.25zM633.15 490.15h1.25v1.25h-1.25zM633.15 492.30h1.25v1.25h-1.25zM635.30 423.50h1.25v1.25h-1.25zM635.30 425.65h1.25v1.25h-1.25zM635.30 427.80h1.25v1.25h-1.25zM635.30 429.95h1.25v1.25h-1.25zM635.30 432.10h1.25v1.25h-1.25zM635.30 434.25h1.25v1.25h-1.25zM635.30 479.40h1.25v1.25h-1.25zM635.30 481.55h1.25v1.25h-1.25zM635.30 483.70h1.25v1.25h-1.25zM635.30 485.85h1.25v1.25h-1.25zM635.30 488.00h1.25v1.25h-1.25zM635.30 490.15h1.25v1.25h-1.25zM635.30 492.30h1.25v1.25h-1.25zM637.45 423.50h1.25v1.25h-1.25zM637.45 425.65h1.25v1.25h-1.25zM637.45 427.80h1.25v1.25h-1.25zM637.45 429.95h1.25v1.25h-1.25zM637.45 432.10h1.25v1.25h-1.25zM637.45 434.25h1.25v1.25h-1.25zM637.45 479.40h1.25v1.25h-1.25zM637.45 481.55h1.25v1.25h-1.25zM637.45 483.70h1.25v1.25h-1.25zM637.45 485.85h1.25v1.25h-1.25zM637.45 488.00h1.25v1.25h-1.25zM637.45 490.15h1.25v1.25h-1.25zM637.45 492.30h1.25v1.25h-1.25zM639.60 423.50h1.25v1.25h-1.25zM639.60 425.65h1.25v1.25h-1.25zM639.60 427.80h1.25v1.25h-1.25zM639.60 429.95h1.25v1.25h-1.25zM639.60 432.10h1.25v1.25h-1.25zM639.60 434.25h1.25v1.25h-1.25zM639.60 479.40h1.25v1.25h-1.25zM639.60 481.55h1.25v1.25h-1.25zM639.60 483.70h1.25v1.25h-1.25zM639.60 485.85h1.25v1.25h-1.25zM639.60 488.00h1.25v1.25h-1.25zM639.60 490.15h1.25v1.25h-1.25zM639.60 492.30h1.25v1.25h-1.25zM641.75 423.50h1.25v1.25h-1.25zM641.75 425.65h1.25v1.25h-1.25zM641.75 427.80h1.25v1.25h-1.25zM641.75 429.95h1.25v1.25h-1.25zM641.75 432.10h1.25v1.25h-1.25zM641.75 434.25h1.25v1.25h-1.25zM641.75 479.40h1.25v1.25h-1.25zM641.75 481.55h1.25v1.25h-1.25zM641.75 483.70h1.25v1.25h-1.25zM641.75 485.85h1.25v1.25h-1.25zM641.75 488.00h1.25v1.25h-1.25zM641.75 490.15h1.25v1.25h-1.25zM641.75 492.30h1.25v1.25h-1.25zM643.90 423.50h1.25v1.25h-1.25zM643.90 425.65h1.25v1.25h-1.25zM643.90 427.80h1.25v1.25h-1.25zM643.90 429.95h1.25v1.25h-1.25zM643.90 432.10h1.25v1.25h-1.25zM643.90 434.25h1.25v1.25h-1.25zM643.90 479.40h1.25v1.25h-1.25zM643.90 481.55h1.25v1.25h-1.25zM643.90 483.70h1.25v1.25h-1.25zM643.90 485.85h1.25v1.25h-1.25zM643.90 488.00h1.25v1.25h-1.25zM643.90 490.15h1.25v1.25h-1.25zM643.90 492.30h1.25v1.25h-1.25zM646.05 423.50h1.25v1.25h-1.25zM646.05 425.65h1.25v1.25h-1.25zM646.05 427.80h1.25v1.25h-1.25zM646.05 429.95h1.25v1.25h-1.25zM646.05 432.10h1.25v1.25h-1.25zM646.05 434.25h1.25v1.25h-1.25zM646.05 479.40h1.25v1.25h-1.25zM646.05 481.55h1.25v1.25h-1.25zM646.05 483.70h1.25v1.25h-1.25zM646.05 485.85h1.25v1.25h-1.25zM646.05 488.00h1.25v1.25h-1.25zM646.05 490.15h1.25v1.25h-1.25zM646.05 492.30h1.25v1.25h-1.25zM648.20 423.50h1.25v1.25h-1.25zM648.20 425.65h1.25v1.25h-1.25zM648.20 427.80h1.25v1.25h-1.25zM648.20 429.95h1.25v1.25h-1.25zM648.20 432.10h1.25v1.25h-1.25zM648.20 434.25h1.25v1.25h-1.25zM648.20 479.40h1.25v1.25h-1.25zM648.20 481.55h1.25v1.25h-1.25zM648.20 483.70h1.25v1.25h-1.25zM648.20 485.85h1.25v1.25h-1.25zM648.20 488.00h1.25v1.25h-1.25zM648.20 490.15h1.25v1.25h-1.25zM648.20 492.30h1.25v1.25h-1.25zM650.35 423.50h1.25v1.25h-1.25zM650.35 425.65h1.25v1.25h-1.25zM650.35 427.80h1.25v1.25h-1.25zM650.35 429.95h1.25v1.25h-1.25zM650.35 432.10h1.25v1.25h-1.25zM650.35 434.25h1.25v1.25h-1.25zM650.35 479.40h1.25v1.25h-1.25zM650.35 481.55h1.25v1.25h-1.25zM650.35 483.70h1.25v1.25h-1.25zM650.35 485.85h1.25v1.25h-1.25zM650.35 488.00h1.25v1.25h-1.25zM650.35 490.15h1.25v1.25h-1.25zM650.35 492.30h1.25v1.25h-1.25zM652.50 423.50h1.25v1.25h-1.25zM652.50 425.65h1.25v1.25h-1.25zM652.50 427.80h1.25v1.25h-1.25zM652.50 429.95h1.25v1.25h-1.25zM652.50 432.10h1.25v1.25h-1.25zM652.50 434.25h1.25v1.25h-1.25zM652.50 479.40h1.25v1.25h-1.25zM652.50 481.55h1.25v1.25h-1.25zM652.50 483.70h1.25v1.25h-1.25zM652.50 485.85h1.25v1.25h-1.25zM652.50 488.00h1.25v1.25h-1.25zM652.50 490.15h1.25v1.25h-1.25zM652.50 492.30h1.25v1.25h-1.25zM654.65 423.50h1.25v1.25h-1.25zM654.65 425.65h1.25v1.25h-1.25zM654.65 427.80h1.25v1.25h-1.25zM654.65 429.95h1.25v1.25h-1.25zM654.65 432.10h1.25v1.25h-1.25zM654.65 434.25h1.25v1.25h-1.25zM654.65 479.40h1.25v1.25h-1.25zM654.65 481.55h1.25v1.25h-1.25zM654.65 483.70h1.25v1.25h-1.25zM654.65 485.85h1.25v1.25h-1.25zM654.65 488.00h1.25v1.25h-1.25zM654.65 490.15h1.25v1.25h-1.25zM654.65 492.30h1.25v1.25h-1.25zM656.80 423.50h1.25v1.25h-1.25zM656.80 425.65h1.25v1.25h-1.25zM656.80 427.80h1.25v1.25h-1.25zM656.80 429.95h1.25v1.25h-1.25zM656.80 432.10h1.25v1.25h-1.25zM656.80 434.25h1.25v1.25h-1.25zM656.80 479.40h1.25v1.25h-1.25zM656.80 481.55h1.25v1.25h-1.25zM656.80 483.70h1.25v1.25h-1.25zM656.80 485.85h1.25v1.25h-1.25zM656.80 488.00h1.25v1.25h-1.25zM656.80 490.15h1.25v1.25h-1.25zM656.80 492.30h1.25v1.25h-1.25zM658.95 423.50h1.25v1.25h-1.25zM658.95 425.65h1.25v1.25h-1.25zM658.95 427.80h1.25v1.25h-1.25zM658.95 429.95h1.25v1.25h-1.25zM658.95 432.10h1.25v1.25h-1.25zM658.95 434.25h1.25v1.25h-1.25zM658.95 479.40h1.25v1.25h-1.25zM658.95 481.55h1.25v1.25h-1.25zM658.95 483.70h1.25v1.25h-1.25zM658.95 485.85h1.25v1.25h-1.25zM658.95 488.00h1.25v1.25h-1.25zM658.95 490.15h1.25v1.25h-1.25zM658.95 492.30h1.25v1.25h-1.25zM661.10 423.50h1.25v1.25h-1.25zM661.10 425.65h1.25v1.25h-1.25zM661.10 427.80h1.25v1.25h-1.25zM661.10 429.95h1.25v1.25h-1.25zM661.10 432.10h1.25v1.25h-1.25zM661.10 434.25h1.25v1.25h-1.25zM661.10 479.40h1.25v1.25h-1.25zM661.10 481.55h1.25v1.25h-1.25zM661.10 483.70h1.25v1.25h-1.25zM661.10 485.85h1.25v1.25h-1.25zM661.10 488.00h1.25v1.25h-1.25zM661.10 490.15h1.25v1.25h-1.25zM661.10 492.30h1.25v1.25h-1.25zM663.25 423.50h1.25v1.25h-1.25zM663.25 425.65h1.25v1.25h-1.25zM663.25 427.80h1.25v1.25h-1.25zM663.25 429.95h1.25v1.25h-1.25zM663.25 432.10h1.25v1.25h-1.25zM663.25 434.25h1.25v1.25h-1.25zM663.25 479.40h1.25v1.25h-1.25zM663.25 481.55h1.25v1.25h-1.25zM663.25 483.70h1.25v1.25h-1.25zM663.25 485.85h1.25v1.25h-1.25zM663.25 488.00h1.25v1.25h-1.25zM663.25 490.15h1.25v1.25h-1.25zM663.25 492.30h1.25v1.25h-1.25zM665.40 423.50h1.25v1.25h-1.25zM665.40 425.65h1.25v1.25h-1.25zM665.40 427.80h1.25v1.25h-1.25zM665.40 429.95h1.25v1.25h-1.25zM665.40 432.10h1.25v1.25h-1.25zM665.40 434.25h1.25v1.25h-1.25zM665.40 436.40h1.25v1.25h-1.25zM665.40 438.55h1.25v1.25h-1.25zM665.40 440.70h1.25v1.25h-1.25zM665.40 442.85h1.25v1.25h-1.25zM665.40 445.00h1.25v1.25h-1.25zM665.40 447.15h1.25v1.25h-1.25zM665.40 449.30h1.25v1.25h-1.25zM665.40 451.45h1.25v1.25h-1.25zM665.40 453.60h1.25v1.25h-1.25zM665.40 455.75h1.25v1.25h-1.25zM665.40 457.90h1.25v1.25h-1.25zM665.40 460.05h1.25v1.25h-1.25zM665.40 462.20h1.25v1.25h-1.25zM665.40 464.35h1.25v1.25h-1.25zM665.40 466.50h1.25v1.25h-1.25zM665.40 468.65h1.25v1.25h-1.25zM665.40 470.80h1.25v1.25h-1.25zM665.40 472.95h1.25v1.25h-1.25zM665.40 475.10h1.25v1.25h-1.25zM665.40 477.25h1.25v1.25h-1.25zM665.40 479.40h1.25v1.25h-1.25zM665.40 481.55h1.25v1.25h-1.25zM665.40 483.70h1.25v1.25h-1.25zM665.40 485.85h1.25v1.25h-1.25zM665.40 488.00h1.25v1.25h-1.25zM665.40 490.15h1.25v1.25h-1.25zM665.40 492.30h1.25v1.25h-1.25zM667.55 423.50h1.25v1.25h-1.25zM667.55 425.65h1.25v1.25h-1.25zM667.55 427.80h1.25v1.25h-1.25zM667.55 429.95h1.25v1.25h-1.25zM667.55 432.10h1.25v1.25h-1.25zM667.55 434.25h1.25v1.25h-1.25zM667.55 436.40h1.25v1.25h-1.25zM667.55 438.55h1.25v1.25h-1.25zM667.55 440.70h1.25v1.25h-1.25zM667.55 442.85h1.25v1.25h-1.25zM667.55 445.00h1.25v1.25h-1.25zM667.55 447.15h1.25v1.25h-1.25zM667.55 449.30h1.25v1.25h-1.25zM667.55 451.45h1.25v1.25h-1.25zM667.55 453.60h1.25v1.25h-1.25zM667.55 455.75h1.25v1.25h-1.25zM667.55 457.90h1.25v1.25h-1.25zM667.55 460.05h1.25v1.25h-1.25zM667.55 462.20h1.25v1.25h-1.25zM667.55 464.35h1.25v1.25h-1.25zM667.55 466.50h1.25v1.25h-1.25zM667.55 468.65h1.25v1.25h-1.25zM667.55 470.80h1.25v1.25h-1.25zM667.55 472.95h1.25v1.25h-1.25zM667.55 475.10h1.25v1.25h-1.25zM667.55 477.25h1.25v1.25h-1.25zM667.55 479.40h1.25v1.25h-1.25zM667.55 481.55h1.25v1.25h-1.25zM667.55 483.70h1.25v1.25h-1.25zM667.55 485.85h1.25v1.25h-1.25zM667.55 488.00h1.25v1.25h-1.25zM667.55 490.15h1.25v1.25h-1.25zM667.55 492.30h1.25v1.25h-1.25zM669.70 423.50h1.25v1.25h-1.25zM669.70 425.65h1.25v1.25h-1.25zM669.70 427.80h1.25v1.25h-1.25zM669.70 429.95h1.25v1.25h-1.25zM669.70 432.10h1.25v1.25h-1.25zM669.70 434.25h1.25v1.25h-1.25zM669.70 436.40h1.25v1.25h-1.25zM669.70 438.55h1.25v1.25h-1.25zM669.70 440.70h1.25v1.25h-1.25zM669.70 442.85h1.25v1.25h-1.25zM669.70 445.00h1.25v1.25h-1.25zM669.70 447.15h1.25v1.25h-1.25zM669.70 449.30h1.25v1.25h-1.25zM669.70 451.45h1.25v1.25h-1.25zM669.70 453.60h1.25v1.25h-1.25zM669.70 455.75h1.25v1.25h-1.25zM669.70 457.90h1.25v1.25h-1.25zM669.70 460.05h1.25v1.25h-1.25zM669.70 462.20h1.25v1.25h-1.25zM669.70 464.35h1.25v1.25h-1.25zM669.70 466.50h1.25v1.25h-1.25zM669.70 468.65h1.25v1.25h-1.25zM669.70 470.80h1.25v1.25h-1.25zM669.70 472.95h1.25v1.25h-1.25zM669.70 475.10h1.25v1.25h-1.25zM669.70 477.25h1.25v1.25h-1.25zM669.70 479.40h1.25v1.25h-1.25zM669.70 481.55h1.25v1.25h-1.25zM669.70 483.70h1.25v1.25h-1.25zM669.70 485.85h1.25v1.25h-1.25zM669.70 488.00h1.25v1.25h-1.25zM669.70 490.15h1.25v1.25h-1.25zM669.70 492.30h1.25v1.25h-1.25zM671.85 423.50h1.25v1.25h-1.25zM671.85 425.65h1.25v1.25h-1.25zM671.85 427.80h1.25v1.25h-1.25zM671.85 429.95h1.25v1.25h-1.25zM671.85 432.10h1.25v1.25h-1.25zM671.85 434.25h1.25v1.25h-1.25zM671.85 436.40h1.25v1.25h-1.25zM671.85 438.55h1.25v1.25h-1.25zM671.85 440.70h1.25v1.25h-1.25zM671.85 442.85h1.25v1.25h-1.25zM671.85 445.00h1.25v1.25h-1.25zM671.85 447.15h1.25v1.25h-1.25zM671.85 449.30h1.25v1.25h-1.25zM671.85 451.45h1.25v1.25h-1.25zM671.85 453.60h1.25v1.25h-1.25zM671.85 455.75h1.25v1.25h-1.25zM671.85 457.90h1.25v1.25h-1.25zM671.85 460.05h1.25v1.25h-1.25zM671.85 462.20h1.25v1.25h-1.25zM671.85 464.35h1.25v1.25h-1.25zM671.85 466.50h1.25v1.25h-1.25zM671.85 468.65h1.25v1.25h-1.25zM671.85 470.80h1.25v1.25h-1.25zM671.85 472.95h1.25v1.25h-1.25zM671.85 475.10h1.25v1.25h-1.25zM671.85 477.25h1.25v1.25h-1.25zM671.85 479.40h1.25v1.25h-1.25zM671.85 481.55h1.25v1.25h-1.25zM671.85 483.70h1.25v1.25h-1.25zM671.85 485.85h1.25v1.25h-1.25zM671.85 488.00h1.25v1.25h-1.25zM671.85 490.15h1.25v1.25h-1.25zM671.85 492.30h1.25v1.25h-1.25zM674.00 423.50h1.25v1.25h-1.25zM674.00 425.65h1.25v1.25h-1.25zM674.00 427.80h1.25v1.25h-1.25zM674.00 429.95h1.25v1.25h-1.25zM674.00 432.10h1.25v1.25h-1.25zM674.00 434.25h1.25v1.25h-1.25zM674.00 436.40h1.25v1.25h-1.25zM674.00 438.55h1.25v1.25h-1.25zM674.00 440.70h1.25v1.25h-1.25zM674.00 442.85h1.25v1.25h-1.25zM674.00 445.00h1.25v1.25h-1.25zM674.00 447.15h1.25v1.25h-1.25zM674.00 449.30h1.25v1.25h-1.25zM674.00 451.45h1.25v1.25h-1.25zM674.00 453.60h1.25v1.25h-1.25zM674.00 455.75h1.25v1.25h-1.25zM674.00 457.90h1.25v1.25h-1.25zM674.00 460.05h1.25v1.25h-1.25zM674.00 462.20h1.25v1.25h-1.25zM674.00 464.35h1.25v1.25h-1.25zM674.00 466.50h1.25v1.25h-1.25zM674.00 468.65h1.25v1.25h-1.25zM674.00 470.80h1.25v1.25h-1.25zM674.00 472.95h1.25v1.25h-1.25zM674.00 475.10h1.25v1.25h-1.25zM674.00 477.25h1.25v1.25h-1.25zM674.00 479.40h1.25v1.25h-1.25zM674.00 481.55h1.25v1.25h-1.25zM674.00 483.70h1.25v1.25h-1.25zM674.00 485.85h1.25v1.25h-1.25zM674.00 488.00h1.25v1.25h-1.25zM674.00 490.15h1.25v1.25h-1.25zM674.00 492.30h1.25v1.25h-1.25zM676.15 423.50h1.25v1.25h-1.25zM676.15 425.65h1.25v1.25h-1.25zM676.15 427.80h1.25v1.25h-1.25zM676.15 429.95h1.25v1.25h-1.25zM676.15 432.10h1.25v1.25h-1.25zM676.15 434.25h1.25v1.25h-1.25zM676.15 436.40h1.25v1.25h-1.25zM676.15 438.55h1.25v1.25h-1.25zM676.15 440.70h1.25v1.25h-1.25zM676.15 442.85h1.25v1.25h-1.25zM676.15 445.00h1.25v1.25h-1.25zM676.15 447.15h1.25v1.25h-1.25zM676.15 449.30h1.25v1.25h-1.25zM676.15 451.45h1.25v1.25h-1.25zM676.15 453.60h1.25v1.25h-1.25zM676.15 455.75h1.25v1.25h-1.25zM676.15 457.90h1.25v1.25h-1.25zM676.15 460.05h1.25v1.25h-1.25zM676.15 462.20h1.25v1.25h-1.25zM676.15 464.35h1.25v1.25h-1.25zM676.15 466.50h1.25v1.25h-1.25zM676.15 468.65h1.25v1.25h-1.25zM676.15 470.80h1.25v1.25h-1.25zM676.15 472.95h1.25v1.25h-1.25zM676.15 475.10h1.25v1.25h-1.25zM676.15 477.25h1.25v1.25h-1.25zM676.15 479.40h1.25v1.25h-1.25zM676.15 481.55h1.25v1.25h-1.25zM676.15 483.70h1.25v1.25h-1.25zM676.15 485.85h1.25v1.25h-1.25zM676.15 488.00h1.25v1.25h-1.25zM676.15 490.15h1.25v1.25h-1.25zM676.15 492.30h1.25v1.25h-1.25zM678.30 423.50h1.25v1.25h-1.25zM678.30 425.65h1.25v1.25h-1.25zM678.30 427.80h1.25v1.25h-1.25zM678.30 429.95h1.25v1.25h-1.25zM678.30 432.10h1.25v1.25h-1.25zM678.30 434.25h1.25v1.25h-1.25zM678.30 436.40h1.25v1.25h-1.25zM678.30 438.55h1.25v1.25h-1.25zM678.30 440.70h1.25v1.25h-1.25zM678.30 442.85h1.25v1.25h-1.25zM678.30 445.00h1.25v1.25h-1.25zM678.30 447.15h1.25v1.25h-1.25zM678.30 449.30h1.25v1.25h-1.25zM678.30 451.45h1.25v1.25h-1.25zM678.30 453.60h1.25v1.25h-1.25zM678.30 455.75h1.25v1.25h-1.25zM678.30 457.90h1.25v1.25h-1.25zM678.30 460.05h1.25v1.25h-1.25zM678.30 462.20h1.25v1.25h-1.25zM678.30 464.35h1.25v1.25h-1.25zM678.30 466.50h1.25v1.25h-1.25zM678.30 468.65h1.25v1.25h-1.25zM678.30 470.80h1.25v1.25h-1.25zM678.30 472.95h1.25v1.25h-1.25zM678.30 475.10h1.25v1.25h-1.25zM678.30 477.25h1.25v1.25h-1.25zM678.30 479.40h1.25v1.25h-1.25zM678.30 481.55h1.25v1.25h-1.25zM678.30 483.70h1.25v1.25h-1.25zM678.30 485.85h1.25v1.25h-1.25zM678.30 488.00h1.25v1.25h-1.25zM678.30 490.15h1.25v1.25h-1.25zM678.30 492.30h1.25v1.25h-1.25z" fill="#d2a466"/>
<rect x="623.0" y="437.0" width="42.0" height="42.0" fill="#34400e" />
<rect x="629.5" y="443.5" width="29.0" height="29.0" fill="#2a6a1e" />
<path d="M630.60 444 v28 M632.75 444 v28 M634.90 444 v28 M637.05 444 v28 M639.20 444 v28 M641.35 444 v28 M643.50 444 v28 M645.65 444 v28 M647.80 444 v28 M649.95 444 v28 M652.10 444 v28 M654.25 444 v28 M656.40 444 v28 M658.55 444 v28 M630 444.60 h28 M630 446.75 h28 M630 448.90 h28 M630 451.05 h28 M630 453.20 h28 M630 455.35 h28 M630 457.50 h28 M630 459.65 h28 M630 461.80 h28 M630 463.95 h28 M630 466.10 h28 M630 468.25 h28 M630 470.40 h28 M630 472.55 h28" stroke="#b0904e" stroke-width=".45"/>
<path d="M630.00 444.00h1.25v1.25h-1.25zM630.00 446.15h1.25v1.25h-1.25zM630.00 448.30h1.25v1.25h-1.25zM630.00 450.45h1.25v1.25h-1.25zM630.00 452.60h1.25v1.25h-1.25zM630.00 454.75h1.25v1.25h-1.25zM630.00 456.90h1.25v1.25h-1.25zM630.00 459.05h1.25v1.25h-1.25zM630.00 461.20h1.25v1.25h-1.25zM630.00 463.35h1.25v1.25h-1.25zM630.00 465.50h1.25v1.25h-1.25zM630.00 467.65h1.25v1.25h-1.25zM630.00 469.80h1.25v1.25h-1.25zM630.00 471.95h1.25v1.25h-1.25zM632.15 444.00h1.25v1.25h-1.25zM632.15 446.15h1.25v1.25h-1.25zM632.15 448.30h1.25v1.25h-1.25zM632.15 450.45h1.25v1.25h-1.25zM632.15 452.60h1.25v1.25h-1.25zM632.15 454.75h1.25v1.25h-1.25zM632.15 456.90h1.25v1.25h-1.25zM632.15 459.05h1.25v1.25h-1.25zM632.15 461.20h1.25v1.25h-1.25zM632.15 463.35h1.25v1.25h-1.25zM632.15 465.50h1.25v1.25h-1.25zM632.15 467.65h1.25v1.25h-1.25zM632.15 469.80h1.25v1.25h-1.25zM632.15 471.95h1.25v1.25h-1.25zM634.30 444.00h1.25v1.25h-1.25zM634.30 446.15h1.25v1.25h-1.25zM634.30 448.30h1.25v1.25h-1.25zM634.30 450.45h1.25v1.25h-1.25zM634.30 452.60h1.25v1.25h-1.25zM634.30 454.75h1.25v1.25h-1.25zM634.30 456.90h1.25v1.25h-1.25zM634.30 459.05h1.25v1.25h-1.25zM634.30 461.20h1.25v1.25h-1.25zM634.30 463.35h1.25v1.25h-1.25zM634.30 465.50h1.25v1.25h-1.25zM634.30 467.65h1.25v1.25h-1.25zM634.30 469.80h1.25v1.25h-1.25zM634.30 471.95h1.25v1.25h-1.25zM636.45 444.00h1.25v1.25h-1.25zM636.45 446.15h1.25v1.25h-1.25zM636.45 448.30h1.25v1.25h-1.25zM636.45 450.45h1.25v1.25h-1.25zM636.45 452.60h1.25v1.25h-1.25zM636.45 454.75h1.25v1.25h-1.25zM636.45 456.90h1.25v1.25h-1.25zM636.45 459.05h1.25v1.25h-1.25zM636.45 461.20h1.25v1.25h-1.25zM636.45 463.35h1.25v1.25h-1.25zM636.45 465.50h1.25v1.25h-1.25zM636.45 467.65h1.25v1.25h-1.25zM636.45 469.80h1.25v1.25h-1.25zM636.45 471.95h1.25v1.25h-1.25zM638.60 444.00h1.25v1.25h-1.25zM638.60 446.15h1.25v1.25h-1.25zM638.60 448.30h1.25v1.25h-1.25zM638.60 450.45h1.25v1.25h-1.25zM638.60 452.60h1.25v1.25h-1.25zM638.60 454.75h1.25v1.25h-1.25zM638.60 456.90h1.25v1.25h-1.25zM638.60 459.05h1.25v1.25h-1.25zM638.60 461.20h1.25v1.25h-1.25zM638.60 463.35h1.25v1.25h-1.25zM638.60 465.50h1.25v1.25h-1.25zM638.60 467.65h1.25v1.25h-1.25zM638.60 469.80h1.25v1.25h-1.25zM638.60 471.95h1.25v1.25h-1.25zM640.75 444.00h1.25v1.25h-1.25zM640.75 446.15h1.25v1.25h-1.25zM640.75 448.30h1.25v1.25h-1.25zM640.75 450.45h1.25v1.25h-1.25zM640.75 452.60h1.25v1.25h-1.25zM640.75 454.75h1.25v1.25h-1.25zM640.75 456.90h1.25v1.25h-1.25zM640.75 459.05h1.25v1.25h-1.25zM640.75 461.20h1.25v1.25h-1.25zM640.75 463.35h1.25v1.25h-1.25zM640.75 465.50h1.25v1.25h-1.25zM640.75 467.65h1.25v1.25h-1.25zM640.75 469.80h1.25v1.25h-1.25zM640.75 471.95h1.25v1.25h-1.25zM642.90 444.00h1.25v1.25h-1.25zM642.90 446.15h1.25v1.25h-1.25zM642.90 448.30h1.25v1.25h-1.25zM642.90 450.45h1.25v1.25h-1.25zM642.90 452.60h1.25v1.25h-1.25zM642.90 454.75h1.25v1.25h-1.25zM642.90 456.90h1.25v1.25h-1.25zM642.90 459.05h1.25v1.25h-1.25zM642.90 461.20h1.25v1.25h-1.25zM642.90 463.35h1.25v1.25h-1.25zM642.90 465.50h1.25v1.25h-1.25zM642.90 467.65h1.25v1.25h-1.25zM642.90 469.80h1.25v1.25h-1.25zM642.90 471.95h1.25v1.25h-1.25zM645.05 444.00h1.25v1.25h-1.25zM645.05 446.15h1.25v1.25h-1.25zM645.05 448.30h1.25v1.25h-1.25zM645.05 450.45h1.25v1.25h-1.25zM645.05 452.60h1.25v1.25h-1.25zM645.05 454.75h1.25v1.25h-1.25zM645.05 456.90h1.25v1.25h-1.25zM645.05 459.05h1.25v1.25h-1.25zM645.05 461.20h1.25v1.25h-1.25zM645.05 463.35h1.25v1.25h-1.25zM645.05 465.50h1.25v1.25h-1.25zM645.05 467.65h1.25v1.25h-1.25zM645.05 469.80h1.25v1.25h-1.25zM645.05 471.95h1.25v1.25h-1.25zM647.20 444.00h1.25v1.25h-1.25zM647.20 446.15h1.25v1.25h-1.25zM647.20 448.30h1.25v1.25h-1.25zM647.20 450.45h1.25v1.25h-1.25zM647.20 452.60h1.25v1.25h-1.25zM647.20 454.75h1.25v1.25h-1.25zM647.20 456.90h1.25v1.25h-1.25zM647.20 459.05h1.25v1.25h-1.25zM647.20 461.20h1.25v1.25h-1.25zM647.20 463.35h1.25v1.25h-1.25zM647.20 465.50h1.25v1.25h-1.25zM647.20 467.65h1.25v1.25h-1.25zM647.20 469.80h1.25v1.25h-1.25zM647.20 471.95h1.25v1.25h-1.25zM649.35 444.00h1.25v1.25h-1.25zM649.35 446.15h1.25v1.25h-1.25zM649.35 448.30h1.25v1.25h-1.25zM649.35 450.45h1.25v1.25h-1.25zM649.35 452.60h1.25v1.25h-1.25zM649.35 454.75h1.25v1.25h-1.25zM649.35 456.90h1.25v1.25h-1.25zM649.35 459.05h1.25v1.25h-1.25zM649.35 461.20h1.25v1.25h-1.25zM649.35 463.35h1.25v1.25h-1.25zM649.35 465.50h1.25v1.25h-1.25zM649.35 467.65h1.25v1.25h-1.25zM649.35 469.80h1.25v1.25h-1.25zM649.35 471.95h1.25v1.25h-1.25zM651.50 444.00h1.25v1.25h-1.25zM651.50 446.15h1.25v1.25h-1.25zM651.50 448.30h1.25v1.25h-1.25zM651.50 450.45h1.25v1.25h-1.25zM651.50 452.60h1.25v1.25h-1.25zM651.50 454.75h1.25v1.25h-1.25zM651.50 456.90h1.25v1.25h-1.25zM651.50 459.05h1.25v1.25h-1.25zM651.50 461.20h1.25v1.25h-1.25zM651.50 463.35h1.25v1.25h-1.25zM651.50 465.50h1.25v1.25h-1.25zM651.50 467.65h1.25v1.25h-1.25zM651.50 469.80h1.25v1.25h-1.25zM651.50 471.95h1.25v1.25h-1.25zM653.65 444.00h1.25v1.25h-1.25zM653.65 446.15h1.25v1.25h-1.25zM653.65 448.30h1.25v1.25h-1.25zM653.65 450.45h1.25v1.25h-1.25zM653.65 452.60h1.25v1.25h-1.25zM653.65 454.75h1.25v1.25h-1.25zM653.65 456.90h1.25v1.25h-1.25zM653.65 459.05h1.25v1.25h-1.25zM653.65 461.20h1.25v1.25h-1.25zM653.65 463.35h1.25v1.25h-1.25zM653.65 465.50h1.25v1.25h-1.25zM653.65 467.65h1.25v1.25h-1.25zM653.65 469.80h1.25v1.25h-1.25zM653.65 471.95h1.25v1.25h-1.25zM655.80 444.00h1.25v1.25h-1.25zM655.80 446.15h1.25v1.25h-1.25zM655.80 448.30h1.25v1.25h-1.25zM655.80 450.45h1.25v1.25h-1.25zM655.80 452.60h1.25v1.25h-1.25zM655.80 454.75h1.25v1.25h-1.25zM655.80 456.90h1.25v1.25h-1.25zM655.80 459.05h1.25v1.25h-1.25zM655.80 461.20h1.25v1.25h-1.25zM655.80 463.35h1.25v1.25h-1.25zM655.80 465.50h1.25v1.25h-1.25zM655.80 467.65h1.25v1.25h-1.25zM655.80 469.80h1.25v1.25h-1.25zM655.80 471.95h1.25v1.25h-1.25zM657.95 444.00h1.25v1.25h-1.25zM657.95 446.15h1.25v1.25h-1.25zM657.95 448.30h1.25v1.25h-1.25zM657.95 450.45h1.25v1.25h-1.25zM657.95 452.60h1.25v1.25h-1.25zM657.95 454.75h1.25v1.25h-1.25zM657.95 456.90h1.25v1.25h-1.25zM657.95 459.05h1.25v1.25h-1.25zM657.95 461.20h1.25v1.25h-1.25zM657.95 463.35h1.25v1.25h-1.25zM657.95 465.50h1.25v1.25h-1.25zM657.95 467.65h1.25v1.25h-1.25zM657.95 469.80h1.25v1.25h-1.25zM657.95 471.95h1.25v1.25h-1.25z" fill="#d2a466"/>
<text x="642.5" y="463" font-size="13.5" fill="#f0ee80" text-anchor="middle" stroke="#f0ee80" stroke-width=".3">U57</text>
<circle cx="606.0" cy="420.0" r="1.4" fill="#c89a58" />
<circle cx="681.0" cy="496.0" r="1.4" fill="#c89a58" />
<rect x="683.5" y="414.0" width="8.0" height="8.0" fill="#d2b070" />
<circle cx="604.0" cy="500.0" r="4.0" fill="#d2b070" />
<circle cx="629.0" cy="408.0" r="1.6" fill="#e06030" />
<circle cx="628.0" cy="418.0" r="1.2" fill="#6a4ab0" />
<circle cx="639.0" cy="412.0" r="1.0" fill="#9040a0" />
<circle cx="654.0" cy="407.0" r="1.0" fill="#9040a0" />
<rect x="689.5" y="436.5" width="3.4" height="3.0" fill="#cda066" />
<rect x="694.1" y="436.5" width="3.4" height="3.0" fill="#cda066" />
<rect x="689.5" y="440.0" width="3.4" height="3.0" fill="#cda066" />
<rect x="694.1" y="440.0" width="3.4" height="3.0" fill="#cda066" />
<rect x="689.5" y="443.5" width="3.4" height="3.0" fill="#cda066" />
<rect x="694.1" y="443.5" width="3.4" height="3.0" fill="#cda066" />
<rect x="689.5" y="447.0" width="3.4" height="3.0" fill="#cda066" />
<rect x="694.1" y="447.0" width="3.4" height="3.0" fill="#cda066" />
<rect x="689.5" y="458.5" width="3.4" height="3.0" fill="#cda066" />
<rect x="694.1" y="458.5" width="3.4" height="3.0" fill="#cda066" />
<rect x="689.5" y="462.1" width="3.4" height="3.0" fill="#cda066" />
<rect x="694.1" y="462.1" width="3.4" height="3.0" fill="#cda066" />
<rect x="689.5" y="465.7" width="3.4" height="3.0" fill="#cda066" />
<rect x="694.1" y="465.7" width="3.4" height="3.0" fill="#cda066" />
<rect x="689.5" y="469.3" width="3.4" height="3.0" fill="#cda066" />
<rect x="694.1" y="469.3" width="3.4" height="3.0" fill="#cda066" />
<rect x="689.5" y="472.9" width="3.4" height="3.0" fill="#cda066" />
<rect x="694.1" y="472.9" width="3.4" height="3.0" fill="#cda066" />
<rect x="689.5" y="476.5" width="3.4" height="3.0" fill="#cda066" />
<rect x="694.1" y="476.5" width="3.4" height="3.0" fill="#cda066" />
<rect x="700.0" y="437.0" width="6.0" height="1.2" fill="#c8d0b8" opacity=".55"/>
<rect x="700.0" y="441.0" width="6.0" height="1.2" fill="#c8d0b8" opacity=".55"/>
<rect x="700.0" y="445.0" width="6.0" height="1.2" fill="#c8d0b8" opacity=".55"/>
<rect x="700.0" y="449.0" width="6.0" height="1.2" fill="#c8d0b8" opacity=".55"/>
<rect x="700.0" y="459.5" width="6.0" height="1.2" fill="#c8d0b8" opacity=".55"/>
<rect x="700.0" y="463.1" width="6.0" height="1.2" fill="#c8d0b8" opacity=".55"/>
<rect x="700.0" y="466.7" width="6.0" height="1.2" fill="#c8d0b8" opacity=".55"/>
<rect x="700.0" y="470.3" width="6.0" height="1.2" fill="#c8d0b8" opacity=".55"/>
<rect x="700.0" y="473.9" width="6.0" height="1.2" fill="#c8d0b8" opacity=".55"/>
<rect x="700.0" y="477.5" width="6.0" height="1.2" fill="#c8d0b8" opacity=".55"/>
<rect x="702.0" y="457.0" width="8.0" height="8.0" fill="none" stroke="#c8c070" stroke-width="0.5"/>
<circle cx="706.0" cy="461.0" r="1.6" fill="#d2b070" />
<rect x="618.0" y="507.0" width="5.0" height="1.3" fill="#c8d0b8" opacity=".55"/>
<rect x="626.0" y="507.0" width="5.0" height="1.3" fill="#c8d0b8" opacity=".55"/>
<rect x="634.0" y="507.0" width="5.0" height="1.3" fill="#c8d0b8" opacity=".55"/>
<rect x="642.0" y="507.0" width="5.0" height="1.3" fill="#c8d0b8" opacity=".55"/>
<rect x="650.0" y="507.0" width="5.0" height="1.3" fill="#c8d0b8" opacity=".55"/>
<rect x="658.0" y="507.0" width="5.0" height="1.3" fill="#c8d0b8" opacity=".55"/>
<rect x="666.0" y="507.0" width="5.0" height="1.3" fill="#c8d0b8" opacity=".55"/>
<rect x="674.0" y="507.0" width="5.0" height="1.3" fill="#c8d0b8" opacity=".55"/>
<circle cx="625.0" cy="505.0" r="1.3" fill="#cda066" />
<circle cx="633.0" cy="505.0" r="1.3" fill="#cda066" />
<circle cx="640.0" cy="505.0" r="1.3" fill="#cda066" />
<rect x="606.0" y="509.0" width="4.0" height="3.4" fill="#cda066" />
<rect x="606.0" y="513.6" width="4.0" height="3.4" fill="#cda066" />
<rect x="643.0" y="509.0" width="4.0" height="3.4" fill="#cda066" />
<rect x="643.0" y="513.6" width="4.0" height="3.4" fill="#cda066" />
<rect x="658.0" y="509.0" width="4.0" height="3.4" fill="#cda066" />
<rect x="658.0" y="513.6" width="4.0" height="3.4" fill="#cda066" />
<rect x="675.0" y="507.5" width="8.0" height="5.0" fill="none" stroke="#c9c9b4" stroke-width="0.5"/>
<rect x="675.5" y="508.0" width="2.9" height="4.0" fill="#cda066" />
<rect x="679.6" y="508.0" width="2.9" height="4.0" fill="#cda066" />
<rect x="714.8" y="404.7" width="30.0" height="20.5" fill="none" stroke="#b8b8a8" stroke-width="0.5"/>
<rect x="716.0" y="405.7" width="28.0" height="8.2" fill="#b0955a" />
<rect x="716.0" y="417.0" width="28.0" height="8.2" fill="#b0955a" />
<rect x="716.0" y="413.9" width="28.0" height="3.1" fill="#3b4916" />
<path d="M716.0 405.7 v19.5 M718.4 405.7 v19.5 M720.8 405.7 v19.5 M723.2 405.7 v19.5 M725.6 405.7 v19.5 M728.0 405.7 v19.5 M730.4 405.7 v19.5 M732.8 405.7 v19.5 M735.2 405.7 v19.5 M737.6 405.7 v19.5 M740.0 405.7 v19.5 M742.4 405.7 v19.5" stroke="#5a5020" stroke-width=".5"/>
<rect x="714.8" y="431.3" width="30.0" height="20.5" fill="none" stroke="#b8b8a8" stroke-width="0.5"/>
<rect x="716.0" y="432.3" width="28.0" height="8.2" fill="#b0955a" />
<rect x="716.0" y="443.6" width="28.0" height="8.2" fill="#b0955a" />
<rect x="716.0" y="440.5" width="28.0" height="3.1" fill="#3b4916" />
<path d="M716.0 432.3 v19.5 M718.4 432.3 v19.5 M720.8 432.3 v19.5 M723.2 432.3 v19.5 M725.6 432.3 v19.5 M728.0 432.3 v19.5 M730.4 432.3 v19.5 M732.8 432.3 v19.5 M735.2 432.3 v19.5 M737.6 432.3 v19.5 M740.0 432.3 v19.5 M742.4 432.3 v19.5" stroke="#5a5020" stroke-width=".5"/>
<rect x="714.8" y="464.7" width="30.0" height="20.5" fill="none" stroke="#b8b8a8" stroke-width="0.5"/>
<rect x="716.0" y="465.7" width="28.0" height="8.2" fill="#b0955a" />
<rect x="716.0" y="477.0" width="28.0" height="8.2" fill="#b0955a" />
<rect x="716.0" y="473.9" width="28.0" height="3.1" fill="#3b4916" />
<path d="M716.0 465.7 v19.5 M718.4 465.7 v19.5 M720.8 465.7 v19.5 M723.2 465.7 v19.5 M725.6 465.7 v19.5 M728.0 465.7 v19.5 M730.4 465.7 v19.5 M732.8 465.7 v19.5 M735.2 465.7 v19.5 M737.6 465.7 v19.5 M740.0 465.7 v19.5 M742.4 465.7 v19.5" stroke="#5a5020" stroke-width=".5"/>
<rect x="714.8" y="491.8" width="30.0" height="20.5" fill="none" stroke="#b8b8a8" stroke-width="0.5"/>
<rect x="716.0" y="492.8" width="28.0" height="8.2" fill="#b0955a" />
<rect x="716.0" y="504.1" width="28.0" height="8.2" fill="#b0955a" />
<rect x="716.0" y="501.0" width="28.0" height="3.1" fill="#3b4916" />
<path d="M716.0 492.8 v19.5 M718.4 492.8 v19.5 M720.8 492.8 v19.5 M723.2 492.8 v19.5 M725.6 492.8 v19.5 M728.0 492.8 v19.5 M730.4 492.8 v19.5 M732.8 492.8 v19.5 M735.2 492.8 v19.5 M737.6 492.8 v19.5 M740.0 492.8 v19.5 M742.4 492.8 v19.5" stroke="#5a5020" stroke-width=".5"/>
<text x="729.8" y="418.2" font-size="8.5" fill="#d8d880" text-anchor="middle" opacity=".85">U31</text>
<text x="729.8" y="444.8" font-size="8.5" fill="#d8d880" text-anchor="middle" opacity=".85">U33</text>
<text x="729.8" y="478.2" font-size="8.5" fill="#d8d880" text-anchor="middle" opacity=".85">U30</text>
<text x="729.8" y="505.3" font-size="8.5" fill="#d8d880" text-anchor="middle" opacity=".85">U28</text>
<rect x="716.0" y="426.0" width="2.0" height="3.0" fill="#e0e0d0" />
<rect x="719.2" y="426.0" width="2.0" height="3.0" fill="#e0e0d0" />
<rect x="722.4" y="426.0" width="2.0" height="3.0" fill="#e0e0d0" />
<rect x="725.6" y="426.0" width="2.0" height="3.0" fill="#e0e0d0" />
<rect x="728.8" y="426.0" width="2.0" height="3.0" fill="#e0e0d0" />
<rect x="732.0" y="426.0" width="2.0" height="3.0" fill="#e0e0d0" />
<rect x="735.2" y="426.0" width="2.0" height="3.0" fill="#e0e0d0" />
<rect x="738.4" y="426.0" width="2.0" height="3.0" fill="#e0e0d0" />
<rect x="741.6" y="426.0" width="2.0" height="3.0" fill="#e0e0d0" />
<rect x="716.0" y="452.5" width="2.0" height="3.0" fill="#e0e0d0" />
<rect x="719.2" y="452.5" width="2.0" height="3.0" fill="#e0e0d0" />
<rect x="722.4" y="452.5" width="2.0" height="3.0" fill="#e0e0d0" />
<rect x="725.6" y="452.5" width="2.0" height="3.0" fill="#e0e0d0" />
<rect x="728.8" y="452.5" width="2.0" height="3.0" fill="#e0e0d0" />
<rect x="732.0" y="452.5" width="2.0" height="3.0" fill="#e0e0d0" />
<rect x="735.2" y="452.5" width="2.0" height="3.0" fill="#e0e0d0" />
<rect x="738.4" y="452.5" width="2.0" height="3.0" fill="#e0e0d0" />
<rect x="741.6" y="452.5" width="2.0" height="3.0" fill="#e0e0d0" />
<rect x="716.0" y="486.0" width="2.0" height="3.0" fill="#e0e0d0" />
<rect x="719.2" y="486.0" width="2.0" height="3.0" fill="#e0e0d0" />
<rect x="722.4" y="486.0" width="2.0" height="3.0" fill="#e0e0d0" />
<rect x="725.6" y="486.0" width="2.0" height="3.0" fill="#e0e0d0" />
<rect x="728.8" y="486.0" width="2.0" height="3.0" fill="#e0e0d0" />
<rect x="732.0" y="486.0" width="2.0" height="3.0" fill="#e0e0d0" />
<rect x="735.2" y="486.0" width="2.0" height="3.0" fill="#e0e0d0" />
<rect x="738.4" y="486.0" width="2.0" height="3.0" fill="#e0e0d0" />
<rect x="741.6" y="486.0" width="2.0" height="3.0" fill="#e0e0d0" />
<rect x="749.0" y="411.5" width="3.8" height="5.0" fill="#cda066" />
<rect x="754.2" y="411.5" width="3.8" height="5.0" fill="#cda066" />
<rect x="762.0" y="413.3" width="5.0" height="1.4" fill="#c8d0b8" opacity=".55"/>
<rect x="749.0" y="437.5" width="3.8" height="5.0" fill="#cda066" />
<rect x="754.2" y="437.5" width="3.8" height="5.0" fill="#cda066" />
<rect x="762.0" y="439.3" width="5.0" height="1.4" fill="#c8d0b8" opacity=".55"/>
<rect x="749.0" y="471.5" width="3.8" height="5.0" fill="#cda066" />
<rect x="754.2" y="471.5" width="3.8" height="5.0" fill="#cda066" />
<rect x="762.0" y="473.3" width="5.0" height="1.4" fill="#c8d0b8" opacity=".55"/>
<rect x="749.0" y="498.0" width="3.8" height="5.0" fill="#cda066" />
<rect x="754.2" y="498.0" width="3.8" height="5.0" fill="#cda066" />
<rect x="762.0" y="499.8" width="5.0" height="1.4" fill="#c8d0b8" opacity=".55"/>
<rect x="749.0" y="421.0" width="5.0" height="2.2" fill="#e6d8a8" />
<rect x="757.0" y="421.3" width="6.0" height="1.3" fill="#c8d0b8" opacity=".55"/>
<rect x="749.0" y="449.0" width="5.0" height="2.2" fill="#e6d8a8" />
<rect x="757.0" y="449.3" width="6.0" height="1.3" fill="#c8d0b8" opacity=".55"/>
<rect x="749.0" y="482.0" width="5.0" height="2.2" fill="#e6d8a8" />
<rect x="757.0" y="482.3" width="6.0" height="1.3" fill="#c8d0b8" opacity=".55"/>
<circle cx="750.5" cy="428.5" r="3.6" fill="#d2b070" />
<circle cx="750.5" cy="487.5" r="3.6" fill="#d2b070" />
<rect x="755.0" y="453.5" width="14.0" height="6.0" fill="none" stroke="#c9c9b4" stroke-width="0.5"/>
<rect x="755.5" y="454.0" width="5.5" height="5.0" fill="#cda066" />
<rect x="763.0" y="454.0" width="5.5" height="5.0" fill="#cda066" />
<rect x="755.0" y="491.5" width="14.0" height="6.0" fill="none" stroke="#c9c9b4" stroke-width="0.5"/>
<rect x="755.5" y="492.0" width="5.5" height="5.0" fill="#cda066" />
<rect x="763.0" y="492.0" width="5.5" height="5.0" fill="#cda066" />
<rect x="755.0" y="461.0" width="6.0" height="1.3" fill="#c8d0b8" opacity=".55"/>
<rect x="755.0" y="499.0" width="6.0" height="1.3" fill="#c8d0b8" opacity=".55"/>
<rect x="745.0" y="402.0" width="4.0" height="1.3" fill="#c8d0b8" opacity=".55"/>
<rect x="750.0" y="392.0" width="5.0" height="1.3" fill="#c8d0b8" opacity=".55"/>
<rect x="748.5" y="411.5" width="3.8" height="5.0" fill="#cda066" />
<rect x="753.7" y="411.5" width="3.8" height="5.0" fill="#cda066" />
<rect x="779.4" y="388.0" width="32.0" height="34.4" fill="#34400e" />
<rect x="779.4" y="388.0" width="32.0" height="34.4" fill="none" stroke="#c0c0a8" stroke-width="0.5"/>
<rect x="789.0" y="386.0" width="14.0" height="10.0" fill="#cda066" />
<rect x="789.0" y="413.0" width="14.0" height="10.0" fill="#cda066" />
<text x="795.5" y="408" font-size="8" fill="#e8e480" text-anchor="middle" transform="rotate(-90 795.5 405)">L34</text>
<rect x="782.0" y="424.5" width="19.0" height="7.0" fill="none" stroke="#c9c9b4" stroke-width="0.5"/>
<rect x="783.0" y="426.0" width="6.0" height="4.5" fill="#cda066" />
<rect x="793.0" y="426.0" width="6.0" height="4.5" fill="#cda066" />
<rect x="789.0" y="435.7" width="11.5" height="11.6" fill="none" stroke="#c9c9b4" stroke-width="0.5"/>
<rect x="789.5" y="433.0" width="1.8" height="4.5" fill="#cda066" />
<rect x="789.5" y="445.5" width="1.8" height="4.5" fill="#cda066" />
<rect x="792.4" y="433.0" width="1.8" height="4.5" fill="#cda066" />
<rect x="792.4" y="445.5" width="1.8" height="4.5" fill="#cda066" />
<rect x="795.3" y="433.0" width="1.8" height="4.5" fill="#cda066" />
<rect x="795.3" y="445.5" width="1.8" height="4.5" fill="#cda066" />
<rect x="798.2" y="433.0" width="1.8" height="4.5" fill="#cda066" />
<rect x="798.2" y="445.5" width="1.8" height="4.5" fill="#cda066" />
<rect x="775.0" y="443.0" width="7.0" height="8.0" fill="none" stroke="#c9c9b4" stroke-width="0.5"/>
<rect x="775.5" y="443.5" width="6.0" height="2.9" fill="#cda066" />
<rect x="775.5" y="447.6" width="6.0" height="2.9" fill="#cda066" />
<rect x="786.0" y="453.0" width="3.0" height="7.0" fill="#cda066" />
<rect x="792.0" y="453.0" width="3.0" height="7.0" fill="#cda066" />
<path d="M785 464 h17 a3 3 0 0 1 3 3 v6 a3 3 0 0 1 -3 3 h-17 z" fill="none" stroke="#c9c9b4" stroke-width=".5"/>
<rect x="784.0" y="469.0" width="19.0" height="5.0" fill="#cda066" />
<rect x="792.0" y="470.0" width="4.0" height="3.0" fill="#2c7522" />
<rect x="795.8" y="486.3" width="18.4" height="18.4" fill="none" stroke="#b8b860" stroke-width="0.6"/>
<circle cx="805.0" cy="495.5" r="8.2" fill="#d0aa68" />
<circle cx="805.0" cy="495.5" r="3.7" fill="#6a4a1e" />
<text x="805" y="497.5" font-size="5.5" font-weight="bold" fill="#c8a060" text-anchor="middle">M5</text>
<rect x="806.0" y="485.0" width="5.0" height="1.3" fill="#c8d0b8" opacity=".55"/>
<rect x="802.0" y="509.0" width="4.0" height="1.3" fill="#c8d0b8" opacity=".55"/>
<rect x="727.0" y="384.0" width="1.7" height="12.0" fill="#cda066" />
<rect x="729.3" y="384.0" width="1.7" height="12.0" fill="#cda066" />
<circle cx="796.0" cy="379.5" r="9.0" fill="none" stroke="#d0d0c8" stroke-width="0.6"/>
<circle cx="792.0" cy="379.5" r="1.8" fill="#cda066" />
<circle cx="792.0" cy="379.5" r="0.9" fill="#7b4c1e" />
<circle cx="800.0" cy="379.5" r="1.8" fill="#cda066" />
<circle cx="800.0" cy="379.5" r="0.9" fill="#7b4c1e" />
<rect x="788.0" y="374.0" width="3.0" height="11.0" fill="#d8d8d0" />
<rect x="793.0" y="368.0" width="6.0" height="1.3" fill="#c8d0b8" opacity=".55"/>
<rect x="710.0" y="302.5" width="7.0" height="26.8" fill="none" stroke="#c9c9b4" stroke-width="0.5"/>
<circle cx="713.5" cy="306.0" r="1.9" fill="#cda066" />
<circle cx="713.5" cy="306.0" r="0.9" fill="#7b4c1e" />
<circle cx="713.5" cy="312.6" r="1.9" fill="#cda066" />
<circle cx="713.5" cy="312.6" r="0.9" fill="#7b4c1e" />
<circle cx="713.5" cy="319.2" r="1.9" fill="#cda066" />
<circle cx="713.5" cy="319.2" r="0.9" fill="#7b4c1e" />
<circle cx="713.5" cy="325.8" r="1.9" fill="#cda066" />
<circle cx="713.5" cy="325.8" r="0.9" fill="#7b4c1e" />
<rect x="725.0" y="302.5" width="7.0" height="26.8" fill="none" stroke="#c9c9b4" stroke-width="0.5"/>
<circle cx="728.5" cy="306.0" r="1.9" fill="#cda066" />
<circle cx="728.5" cy="306.0" r="0.9" fill="#7b4c1e" />
<circle cx="728.5" cy="312.6" r="1.9" fill="#cda066" />
<circle cx="728.5" cy="312.6" r="0.9" fill="#7b4c1e" />
<circle cx="728.5" cy="319.2" r="1.9" fill="#cda066" />
<circle cx="728.5" cy="319.2" r="0.9" fill="#7b4c1e" />
<circle cx="728.5" cy="325.8" r="1.9" fill="#cda066" />
<circle cx="728.5" cy="325.8" r="0.9" fill="#7b4c1e" />
<rect x="710.0" y="298.0" width="5.0" height="1.3" fill="#c8d0b8" opacity=".55"/>
<rect x="725.0" y="298.0" width="5.0" height="1.3" fill="#c8d0b8" opacity=".55"/>
<circle cx="748.5" cy="313.0" r="2.2" fill="#d2b070" />
<circle cx="748.5" cy="313.0" r="1.0" fill="#8a6a30" />
<rect x="747.0" y="316.0" width="9.0" height="13.0" fill="none" stroke="#c9c9b4" stroke-width="0.5"/>
<rect x="747.5" y="317.7" width="3.4" height="3.6" fill="#cda066" />
<rect x="752.1" y="317.7" width="3.4" height="3.6" fill="#cda066" />
<rect x="747.5" y="323.7" width="3.4" height="3.6" fill="#cda066" />
<rect x="752.1" y="323.7" width="3.4" height="3.6" fill="#cda066" />
<rect x="760.5" y="301.0" width="13.0" height="43.0" fill="none" stroke="#c9c9b4" stroke-width="0.5"/>
<rect x="763.5" y="304.0" width="7.0" height="37.0" fill="none" stroke="#b8c070" stroke-width="0.5"/>
<circle cx="767.0" cy="307.0" r="2.5" fill="#cda066" />
<circle cx="767.0" cy="307.0" r="1.2" fill="#7b4c1e" />
<circle cx="767.0" cy="338.0" r="2.5" fill="#cda066" />
<circle cx="767.0" cy="338.0" r="1.2" fill="#7b4c1e" />
<circle cx="767.0" cy="313.0" r="1.4" fill="#cda066" />
<circle cx="767.0" cy="313.0" r="0.6" fill="#7b4c1e" />
<circle cx="767.0" cy="316.8" r="1.4" fill="#cda066" />
<circle cx="767.0" cy="316.8" r="0.6" fill="#7b4c1e" />
<circle cx="767.0" cy="320.6" r="1.4" fill="#cda066" />
<circle cx="767.0" cy="320.6" r="0.6" fill="#7b4c1e" />
<circle cx="767.0" cy="324.4" r="1.4" fill="#cda066" />
<circle cx="767.0" cy="324.4" r="0.6" fill="#7b4c1e" />
<circle cx="767.0" cy="328.2" r="1.4" fill="#cda066" />
<circle cx="767.0" cy="328.2" r="0.6" fill="#7b4c1e" />
<circle cx="767.0" cy="332.0" r="1.4" fill="#cda066" />
<circle cx="767.0" cy="332.0" r="0.6" fill="#7b4c1e" />
<rect x="761.5" y="294.0" width="11.0" height="1.5" fill="#c8d0b8" opacity=".55"/>
<rect x="764.5" y="297.0" width="5.0" height="1.3" fill="#c8d0b8" opacity=".55"/>
<rect x="789.0" y="301.0" width="13.0" height="43.0" fill="none" stroke="#c9c9b4" stroke-width="0.5"/>
<rect x="792.0" y="304.0" width="7.0" height="37.0" fill="none" stroke="#b8c070" stroke-width="0.5"/>
<circle cx="795.5" cy="307.0" r="2.5" fill="#cda066" />
<circle cx="795.5" cy="307.0" r="1.2" fill="#7b4c1e" />
<circle cx="795.5" cy="338.0" r="2.5" fill="#cda066" />
<circle cx="795.5" cy="338.0" r="1.2" fill="#7b4c1e" />
<circle cx="795.5" cy="313.0" r="1.4" fill="#cda066" />
<circle cx="795.5" cy="313.0" r="0.6" fill="#7b4c1e" />
<circle cx="795.5" cy="316.8" r="1.4" fill="#cda066" />
<circle cx="795.5" cy="316.8" r="0.6" fill="#7b4c1e" />
<circle cx="795.5" cy="320.6" r="1.4" fill="#cda066" />
<circle cx="795.5" cy="320.6" r="0.6" fill="#7b4c1e" />
<circle cx="795.5" cy="324.4" r="1.4" fill="#cda066" />
<circle cx="795.5" cy="324.4" r="0.6" fill="#7b4c1e" />
<circle cx="795.5" cy="328.2" r="1.4" fill="#cda066" />
<circle cx="795.5" cy="328.2" r="0.6" fill="#7b4c1e" />
<circle cx="795.5" cy="332.0" r="1.4" fill="#cda066" />
<circle cx="795.5" cy="332.0" r="0.6" fill="#7b4c1e" />
<rect x="790.0" y="294.0" width="11.0" height="1.5" fill="#c8d0b8" opacity=".55"/>
<rect x="793.0" y="297.0" width="5.0" height="1.3" fill="#c8d0b8" opacity=".55"/>
<rect x="778.5" y="329.0" width="9.0" height="9.0" fill="none" stroke="#c9c9b4" stroke-width="0.5"/>
<rect x="779.0" y="329.5" width="8.0" height="3.4" fill="#cda066" />
<rect x="779.0" y="334.1" width="8.0" height="3.4" fill="#cda066" />
<rect x="780.0" y="321.0" width="1.5" height="6.0" fill="#c8d0b8" opacity=".55"/>
<rect x="786.0" y="321.0" width="1.5" height="6.0" fill="#c8d0b8" opacity=".55"/>
<text x="736" y="362.5" font-size="4.6" fill="#e4e8d8" text-anchor="middle" opacity=".85">UPC8379_SYSTEM_BD</text>
<text x="737" y="368.5" font-size="4.6" fill="#e4e8d8" text-anchor="middle" opacity=".85">Ver 1.0</text>
<text x="737" y="374.5" font-size="4.6" fill="#e4e8d8" text-anchor="middle" opacity=".85">2018/07/16</text>
<rect x="727.0" y="383.5" width="5.0" height="13.0" fill="none" stroke="#c9c9b4" stroke-width="0.5"/>
<rect x="727.5" y="384.0" width="4.0" height="5.0" fill="#cda066" />
<rect x="727.5" y="391.0" width="4.0" height="5.0" fill="#cda066" />
<rect x="726.0" y="380.0" width="1.4" height="5.0" fill="#c8d0b8" opacity=".55"/>
<rect x="616.5" y="315.0" width="32.0" height="31.0" fill="#34400e" />
<rect x="616.5" y="315.0" width="32.0" height="31.0" fill="none" stroke="#b8b8a0" stroke-width="0.5"/>
<rect x="617.0" y="324.0" width="8.0" height="15.0" fill="#cda066" />
<rect x="640.0" y="324.0" width="8.0" height="15.0" fill="#cda066" />
<rect x="625.0" y="324.0" width="15.0" height="15.0" fill="#3b4916" />
<rect x="625.0" y="324.0" width="15.0" height="15.0" fill="none" stroke="#b8b060" stroke-width="0.5"/>
<text x="632.5" y="335" font-size="8" fill="#d6d080" text-anchor="middle" >L30</text>
<rect x="650.0" y="327.0" width="8.0" height="15.0" fill="none" stroke="#c9c9b4" stroke-width="0.5"/>
<rect x="651.5" y="329.0" width="5.0" height="4.0" fill="#cda066" />
<rect x="651.5" y="336.0" width="5.0" height="4.0" fill="#cda066" />
<rect x="652.0" y="321.0" width="4.0" height="1.3" fill="#c8d0b8" opacity=".55"/>
<rect x="661.0" y="328.0" width="6.0" height="2.2" fill="#cda066" />
<rect x="661.0" y="331.5" width="6.0" height="2.2" fill="#cda066" />
<rect x="661.0" y="335.0" width="6.0" height="2.2" fill="#cda066" />
<rect x="671.0" y="328.0" width="6.0" height="2.2" fill="#cda066" />
<rect x="671.0" y="331.5" width="6.0" height="2.2" fill="#cda066" />
<rect x="671.0" y="335.0" width="6.0" height="2.2" fill="#cda066" />
<rect x="666.0" y="326.0" width="6.0" height="12.0" fill="none" stroke="#c9c9b4" stroke-width="0.5"/>
<circle cx="669.0" cy="331.5" r="0.8" fill="#aa4a3a" />
<rect x="680.0" y="319.8" width="8.0" height="4.5" fill="none" stroke="#c9c9b4" stroke-width="0.5"/>
<rect x="680.5" y="320.2" width="2.9" height="3.5" fill="#cda066" />
<rect x="684.6" y="320.2" width="2.9" height="3.5" fill="#cda066" />
<rect x="680.0" y="325.8" width="8.0" height="4.5" fill="none" stroke="#c9c9b4" stroke-width="0.5"/>
<rect x="680.5" y="326.2" width="2.9" height="3.5" fill="#cda066" />
<rect x="684.6" y="326.2" width="2.9" height="3.5" fill="#cda066" />
<rect x="671.0" y="342.0" width="9.0" height="9.0" fill="none" stroke="#c9c9b4" stroke-width="0.5"/>
<rect x="672.0" y="343.0" width="7.0" height="3.4" fill="#cda066" />
<rect x="672.0" y="347.0" width="7.0" height="3.4" fill="#cda066" />
<rect x="663.0" y="344.0" width="5.0" height="1.3" fill="#c8d0b8" opacity=".55"/>
<rect x="663.0" y="347.0" width="5.0" height="1.3" fill="#c8d0b8" opacity=".55"/>
<rect x="686.0" y="338.0" width="1.3" height="5.0" fill="#c8d0b8" opacity=".55"/>
<circle cx="691.0" cy="355.0" r="2.3" fill="#d2b070" />
<circle cx="691.0" cy="355.0" r="1.0" fill="#8a6a30" />
<path d="M679 301 h14 a3 3 0 0 1 3 3 v6 a3 3 0 0 1 -3 3 h-14 a3 3 0 0 1 -3 -3 v-6 a3 3 0 0 1 3 -3z" fill="none" stroke="#c9c9b4" stroke-width=".5"/>
<rect x="676.5" y="306.0" width="19.0" height="4.5" fill="#cda066" />
<rect x="684.0" y="307.0" width="4.0" height="2.5" fill="#2c7522" />
<circle cx="679.0" cy="300.5" r="0.8" fill="#aa4a3a" />
<circle cx="686.0" cy="300.5" r="0.8" fill="#aa4a3a" />
<circle cx="693.0" cy="300.5" r="0.8" fill="#aa4a3a" />
<circle cx="697.0" cy="300.5" r="0.8" fill="#aa4a3a" />
<rect x="681.0" y="297.0" width="7.0" height="1.4" fill="#c8d0b8" opacity=".55"/>
<circle cx="627.0" cy="359.0" r="10.0" fill="none" stroke="#d0d0c8" stroke-width="0.6"/>
<circle cx="622.5" cy="359.0" r="1.9" fill="#cda066" />
<circle cx="622.5" cy="359.0" r="0.9" fill="#7b4c1e" />
<circle cx="631.0" cy="359.0" r="1.9" fill="#cda066" />
<circle cx="631.0" cy="359.0" r="0.9" fill="#7b4c1e" />
<rect x="625.5" y="356.0" width="3.0" height="6.0" fill="#d8d8c8" />
<circle cx="621.0" cy="354.0" r="0.7" fill="#aa4a3a" />
<circle cx="633.0" cy="354.0" r="0.7" fill="#aa4a3a" />
<circle cx="621.0" cy="364.0" r="0.7" fill="#aa4a3a" />
<circle cx="633.0" cy="364.0" r="0.7" fill="#aa4a3a" />
<rect x="620.0" y="343.0" width="5.0" height="1.3" fill="#c8d0b8" opacity=".55"/>
<rect x="613.0" y="383.0" width="1.7" height="6.0" fill="#cda066" />
<rect x="615.3" y="383.0" width="1.7" height="6.0" fill="#cda066" />
<rect x="619.0" y="383.0" width="4.2" height="6.0" fill="#cda066" />
<rect x="624.8" y="383.0" width="4.2" height="6.0" fill="#cda066" />
<rect x="632.0" y="383.0" width="1.7" height="6.0" fill="#cda066" />
<rect x="634.3" y="383.0" width="1.7" height="6.0" fill="#cda066" />
<rect x="637.0" y="383.0" width="1.7" height="6.0" fill="#cda066" />
<rect x="639.3" y="383.0" width="1.7" height="6.0" fill="#cda066" />
<rect x="643.0" y="383.0" width="2.1" height="6.0" fill="#cda066" />
<rect x="645.9" y="383.0" width="2.1" height="6.0" fill="#cda066" />
<rect x="649.0" y="383.0" width="1.7" height="6.0" fill="#cda066" />
<rect x="651.3" y="383.0" width="1.7" height="6.0" fill="#cda066" />
<rect x="653.0" y="383.0" width="1.7" height="6.0" fill="#cda066" />
<rect x="655.3" y="383.0" width="1.7" height="6.0" fill="#cda066" />
<rect x="619.0" y="384.0" width="10.0" height="4.0" fill="#c9a060" />
<rect x="617.0" y="382.5" width="13.0" height="7.0" fill="none" stroke="#c9c9b4" stroke-width="0.5"/>
<rect x="612.0" y="376.0" width="1.3" height="6.0" fill="#c8d0b8" opacity=".55"/>
<rect x="650.0" y="376.0" width="1.3" height="6.0" fill="#c8d0b8" opacity=".55"/>
<rect x="667.0" y="376.0" width="1.3" height="6.0" fill="#c8d0b8" opacity=".55"/>
<rect x="683.0" y="376.0" width="1.3" height="6.0" fill="#c8d0b8" opacity=".55"/>
<rect x="690.0" y="376.0" width="1.3" height="6.0" fill="#c8d0b8" opacity=".55"/>
<rect x="640.0" y="374.0" width="1.3" height="7.0" fill="#c8d0b8" opacity=".55"/>
<rect x="644.0" y="374.0" width="1.3" height="7.0" fill="#c8d0b8" opacity=".55"/>
<rect x="612.0" y="393.0" width="4.0" height="3.4" fill="#cda066" />
<rect x="612.0" y="397.6" width="4.0" height="3.4" fill="#cda066" />
<rect x="649.0" y="393.0" width="4.0" height="3.4" fill="#cda066" />
<rect x="649.0" y="397.6" width="4.0" height="3.4" fill="#cda066" />
<rect x="661.5" y="394.0" width="3.0" height="3.4" fill="#cda066" />
<rect x="661.5" y="398.6" width="3.0" height="3.4" fill="#cda066" />
<rect x="666.5" y="394.0" width="3.0" height="3.4" fill="#cda066" />
<rect x="666.5" y="398.6" width="3.0" height="3.4" fill="#cda066" />
<rect x="672.0" y="394.5" width="4.0" height="2.9" fill="#cda066" />
<rect x="672.0" y="398.6" width="4.0" height="2.9" fill="#cda066" />
<rect x="677.0" y="394.5" width="4.0" height="2.9" fill="#cda066" />
<rect x="677.0" y="398.6" width="4.0" height="2.9" fill="#cda066" />
<rect x="682.0" y="394.5" width="4.0" height="2.9" fill="#cda066" />
<rect x="682.0" y="398.6" width="4.0" height="2.9" fill="#cda066" />
<rect x="672.0" y="393.5" width="15.0" height="9.0" fill="none" stroke="#c9c9b4" stroke-width="0.5"/>
<rect x="708.0" y="396.0" width="7.0" height="7.0" fill="#d2b070" />
<rect x="690.0" y="393.0" width="1.3" height="7.0" fill="#c8d0b8" opacity=".55"/>
<rect x="700.0" y="393.0" width="1.3" height="7.0" fill="#c8d0b8" opacity=".55"/>
<rect x="508.0" y="510.0" width="27.0" height="61.5" fill="none" stroke="#c9c9b4" stroke-width="0.5"/>
<circle cx="510.5" cy="519.8" r="2.0" fill="#cda066" />
<circle cx="510.5" cy="519.8" r="0.8" fill="#7b4c1e" />
<circle cx="515.2" cy="519.8" r="2.0" fill="#cda066" />
<circle cx="515.2" cy="519.8" r="0.8" fill="#7b4c1e" />
<circle cx="519.9" cy="519.8" r="2.0" fill="#cda066" />
<circle cx="519.9" cy="519.8" r="0.8" fill="#7b4c1e" />
<circle cx="524.6" cy="519.8" r="2.0" fill="#cda066" />
<circle cx="524.6" cy="519.8" r="0.8" fill="#7b4c1e" />
<circle cx="529.3" cy="519.8" r="2.0" fill="#cda066" />
<circle cx="529.3" cy="519.8" r="0.8" fill="#7b4c1e" />
<circle cx="510.5" cy="524.6" r="2.0" fill="#cda066" />
<circle cx="510.5" cy="524.6" r="0.8" fill="#7b4c1e" />
<circle cx="515.2" cy="524.6" r="2.0" fill="#cda066" />
<circle cx="515.2" cy="524.6" r="0.8" fill="#7b4c1e" />
<circle cx="519.9" cy="524.6" r="2.0" fill="#cda066" />
<circle cx="519.9" cy="524.6" r="0.8" fill="#7b4c1e" />
<circle cx="524.6" cy="524.6" r="2.0" fill="#cda066" />
<circle cx="524.6" cy="524.6" r="0.8" fill="#7b4c1e" />
<circle cx="529.3" cy="524.6" r="2.0" fill="#cda066" />
<circle cx="529.3" cy="524.6" r="0.8" fill="#7b4c1e" />
<circle cx="510.5" cy="529.4" r="2.0" fill="#cda066" />
<circle cx="510.5" cy="529.4" r="0.8" fill="#7b4c1e" />
<circle cx="515.2" cy="529.4" r="2.0" fill="#cda066" />
<circle cx="515.2" cy="529.4" r="0.8" fill="#7b4c1e" />
<circle cx="519.9" cy="529.4" r="2.0" fill="#cda066" />
<circle cx="519.9" cy="529.4" r="0.8" fill="#7b4c1e" />
<circle cx="524.6" cy="529.4" r="2.0" fill="#cda066" />
<circle cx="524.6" cy="529.4" r="0.8" fill="#7b4c1e" />
<circle cx="529.3" cy="529.4" r="2.0" fill="#cda066" />
<circle cx="529.3" cy="529.4" r="0.8" fill="#7b4c1e" />
<circle cx="510.5" cy="534.2" r="2.0" fill="#cda066" />
<circle cx="510.5" cy="534.2" r="0.8" fill="#7b4c1e" />
<circle cx="515.2" cy="534.2" r="2.0" fill="#cda066" />
<circle cx="515.2" cy="534.2" r="0.8" fill="#7b4c1e" />
<circle cx="519.9" cy="534.2" r="2.0" fill="#cda066" />
<circle cx="519.9" cy="534.2" r="0.8" fill="#7b4c1e" />
<circle cx="524.6" cy="534.2" r="2.0" fill="#cda066" />
<circle cx="524.6" cy="534.2" r="0.8" fill="#7b4c1e" />
<circle cx="529.3" cy="534.2" r="2.0" fill="#cda066" />
<circle cx="529.3" cy="534.2" r="0.8" fill="#7b4c1e" />
<circle cx="510.5" cy="539.0" r="2.0" fill="#cda066" />
<circle cx="510.5" cy="539.0" r="0.8" fill="#7b4c1e" />
<circle cx="515.2" cy="539.0" r="2.0" fill="#cda066" />
<circle cx="515.2" cy="539.0" r="0.8" fill="#7b4c1e" />
<circle cx="519.9" cy="539.0" r="2.0" fill="#cda066" />
<circle cx="519.9" cy="539.0" r="0.8" fill="#7b4c1e" />
<circle cx="524.6" cy="539.0" r="2.0" fill="#cda066" />
<circle cx="524.6" cy="539.0" r="0.8" fill="#7b4c1e" />
<circle cx="529.3" cy="539.0" r="2.0" fill="#cda066" />
<circle cx="529.3" cy="539.0" r="0.8" fill="#7b4c1e" />
<circle cx="510.5" cy="543.8" r="2.0" fill="#cda066" />
<circle cx="510.5" cy="543.8" r="0.8" fill="#7b4c1e" />
<circle cx="515.2" cy="543.8" r="2.0" fill="#cda066" />
<circle cx="515.2" cy="543.8" r="0.8" fill="#7b4c1e" />
<circle cx="519.9" cy="543.8" r="2.0" fill="#cda066" />
<circle cx="519.9" cy="543.8" r="0.8" fill="#7b4c1e" />
<circle cx="524.6" cy="543.8" r="2.0" fill="#cda066" />
<circle cx="524.6" cy="543.8" r="0.8" fill="#7b4c1e" />
<circle cx="529.3" cy="543.8" r="2.0" fill="#cda066" />
<circle cx="529.3" cy="543.8" r="0.8" fill="#7b4c1e" />
<circle cx="510.5" cy="548.6" r="2.0" fill="#cda066" />
<circle cx="510.5" cy="548.6" r="0.8" fill="#7b4c1e" />
<circle cx="515.2" cy="548.6" r="2.0" fill="#cda066" />
<circle cx="515.2" cy="548.6" r="0.8" fill="#7b4c1e" />
<circle cx="519.9" cy="548.6" r="2.0" fill="#cda066" />
<circle cx="519.9" cy="548.6" r="0.8" fill="#7b4c1e" />
<circle cx="524.6" cy="548.6" r="2.0" fill="#cda066" />
<circle cx="524.6" cy="548.6" r="0.8" fill="#7b4c1e" />
<circle cx="529.3" cy="548.6" r="2.0" fill="#cda066" />
<circle cx="529.3" cy="548.6" r="0.8" fill="#7b4c1e" />
<circle cx="510.5" cy="553.4" r="2.0" fill="#cda066" />
<circle cx="510.5" cy="553.4" r="0.8" fill="#7b4c1e" />
<circle cx="515.2" cy="553.4" r="2.0" fill="#cda066" />
<circle cx="515.2" cy="553.4" r="0.8" fill="#7b4c1e" />
<circle cx="519.9" cy="553.4" r="2.0" fill="#cda066" />
<circle cx="519.9" cy="553.4" r="0.8" fill="#7b4c1e" />
<circle cx="524.6" cy="553.4" r="2.0" fill="#cda066" />
<circle cx="524.6" cy="553.4" r="0.8" fill="#7b4c1e" />
<circle cx="529.3" cy="553.4" r="2.0" fill="#cda066" />
<circle cx="529.3" cy="553.4" r="0.8" fill="#7b4c1e" />
<circle cx="510.5" cy="558.2" r="2.0" fill="#cda066" />
<circle cx="510.5" cy="558.2" r="0.8" fill="#7b4c1e" />
<circle cx="515.2" cy="558.2" r="2.0" fill="#cda066" />
<circle cx="515.2" cy="558.2" r="0.8" fill="#7b4c1e" />
<circle cx="519.9" cy="558.2" r="2.0" fill="#cda066" />
<circle cx="519.9" cy="558.2" r="0.8" fill="#7b4c1e" />
<circle cx="524.6" cy="558.2" r="2.0" fill="#cda066" />
<circle cx="524.6" cy="558.2" r="0.8" fill="#7b4c1e" />
<circle cx="529.3" cy="558.2" r="2.0" fill="#cda066" />
<circle cx="529.3" cy="558.2" r="0.8" fill="#7b4c1e" />
<circle cx="510.5" cy="563.0" r="2.0" fill="#cda066" />
<circle cx="510.5" cy="563.0" r="0.8" fill="#7b4c1e" />
<circle cx="515.2" cy="563.0" r="2.0" fill="#cda066" />
<circle cx="515.2" cy="563.0" r="0.8" fill="#7b4c1e" />
<circle cx="519.9" cy="563.0" r="2.0" fill="#cda066" />
<circle cx="519.9" cy="563.0" r="0.8" fill="#7b4c1e" />
<circle cx="524.6" cy="563.0" r="2.0" fill="#cda066" />
<circle cx="524.6" cy="563.0" r="0.8" fill="#7b4c1e" />
<circle cx="529.3" cy="563.0" r="2.0" fill="#cda066" />
<circle cx="529.3" cy="563.0" r="0.8" fill="#7b4c1e" />
<circle cx="510.5" cy="567.8" r="2.0" fill="#cda066" />
<circle cx="510.5" cy="567.8" r="0.8" fill="#7b4c1e" />
<circle cx="515.2" cy="567.8" r="2.0" fill="#cda066" />
<circle cx="515.2" cy="567.8" r="0.8" fill="#7b4c1e" />
<circle cx="519.9" cy="567.8" r="2.0" fill="#cda066" />
<circle cx="519.9" cy="567.8" r="0.8" fill="#7b4c1e" />
<circle cx="524.6" cy="567.8" r="2.0" fill="#cda066" />
<circle cx="524.6" cy="567.8" r="0.8" fill="#7b4c1e" />
<circle cx="529.3" cy="567.8" r="2.0" fill="#cda066" />
<circle cx="529.3" cy="567.8" r="0.8" fill="#7b4c1e" />
<text x="519" y="549" font-size="13.5" fill="#f0f070" text-anchor="middle" transform="rotate(-90 519 544)">P4</text>
<rect x="537.0" y="518.7" width="8.0" height="4.6" fill="none" stroke="#c9c9b4" stroke-width="0.5"/>
<rect x="537.5" y="519.2" width="2.9" height="3.6" fill="#cda066" />
<rect x="541.6" y="519.2" width="2.9" height="3.6" fill="#cda066" />
<rect x="538.0" y="516.0" width="5.0" height="1.3" fill="#c8d0b8" opacity=".55"/>
<rect x="541.0" y="532.0" width="1.4" height="13.0" fill="#c8d0b8" opacity=".55"/>
<rect x="554.0" y="530.0" width="46.0" height="30.5" fill="none" stroke="#a8b898" stroke-width="0.6"/>
<rect x="549.5" y="531.0" width="5.0" height="29.0" fill="#c8a060" />
<rect x="595.3" y="531.0" width="5.0" height="29.0" fill="#c8a060" />
<path d="M573 530 l2 2 l2 -2" stroke="#c9c9b4" stroke-width=".5" fill="none"/>
<text x="575" y="550" font-size="11.5" fill="#e8e480" text-anchor="middle" >U43</text>
<path d="M547.5 533 h2 M600 533 h2" stroke="#c8c8c0" stroke-width=".5"/>
<path d="M547.5 540 h2 M600 540 h2" stroke="#c8c8c0" stroke-width=".5"/>
<path d="M547.5 547 h2 M600 547 h2" stroke="#c8c8c0" stroke-width=".5"/>
<path d="M547.5 554 h2 M600 554 h2" stroke="#c8c8c0" stroke-width=".5"/>
<rect x="573.0" y="526.5" width="3.0" height="1.2" fill="#c8d0b8" opacity=".55"/>
<rect x="554.0" y="567.0" width="46.0" height="30.5" fill="none" stroke="#a8b898" stroke-width="0.6"/>
<rect x="549.5" y="568.0" width="5.0" height="29.0" fill="#c8a060" />
<rect x="595.3" y="568.0" width="5.0" height="29.0" fill="#c8a060" />
<path d="M573 567 l2 2 l2 -2" stroke="#c9c9b4" stroke-width=".5" fill="none"/>
<text x="575" y="587" font-size="11.5" fill="#e8e480" text-anchor="middle" >U49</text>
<path d="M547.5 570 h2 M600 570 h2" stroke="#c8c8c0" stroke-width=".5"/>
<path d="M547.5 577 h2 M600 577 h2" stroke="#c8c8c0" stroke-width=".5"/>
<path d="M547.5 584 h2 M600 584 h2" stroke="#c8c8c0" stroke-width=".5"/>
<path d="M547.5 591 h2 M600 591 h2" stroke="#c8c8c0" stroke-width=".5"/>
<rect x="573.0" y="563.5" width="3.0" height="1.2" fill="#c8d0b8" opacity=".55"/>
<rect x="514.5" y="586.0" width="7.0" height="40.0" fill="none" stroke="#c9c9b4" stroke-width="0.5"/>
<circle cx="518.0" cy="589.5" r="1.7" fill="#cda066" />
<circle cx="518.0" cy="589.5" r="0.8" fill="#7b4c1e" />
<circle cx="518.0" cy="596.1" r="1.7" fill="#cda066" />
<circle cx="518.0" cy="596.1" r="0.8" fill="#7b4c1e" />
<circle cx="518.0" cy="602.7" r="1.7" fill="#cda066" />
<circle cx="518.0" cy="602.7" r="0.8" fill="#7b4c1e" />
<circle cx="518.0" cy="609.3" r="1.7" fill="#cda066" />
<circle cx="518.0" cy="609.3" r="0.8" fill="#7b4c1e" />
<circle cx="518.0" cy="615.9" r="1.7" fill="#cda066" />
<circle cx="518.0" cy="615.9" r="0.8" fill="#7b4c1e" />
<circle cx="518.0" cy="622.5" r="1.7" fill="#cda066" />
<circle cx="518.0" cy="622.5" r="0.8" fill="#7b4c1e" />
<rect x="515.0" y="586.0" width="6.0" height="39.0" fill="none" stroke="#c9c9b4" stroke-width="0.5"/>
<rect x="526.5" y="603.5" width="8.0" height="8.0" fill="#d2b070" />
<rect x="526.0" y="603.0" width="9.0" height="9.0" fill="none" stroke="#88a060" stroke-width="0.4"/>
<rect x="533.3" y="618.0" width="12.5" height="41.0" fill="none" stroke="#c9c9b4" stroke-width="0.5"/>
<rect x="536.3" y="620.0" width="6.5" height="37.0" fill="none" stroke="#b8c070" stroke-width="0.5"/>
<circle cx="539.5" cy="623.5" r="2.4" fill="#cda066" />
<circle cx="539.5" cy="623.5" r="1.1" fill="#7b4c1e" />
<circle cx="539.5" cy="654.5" r="2.4" fill="#cda066" />
<circle cx="539.5" cy="654.5" r="1.1" fill="#7b4c1e" />
<circle cx="539.8" cy="629.5" r="1.3" fill="#cda066" />
<circle cx="539.8" cy="629.5" r="0.6" fill="#7b4c1e" />
<circle cx="539.8" cy="632.6" r="1.3" fill="#cda066" />
<circle cx="539.8" cy="632.6" r="0.6" fill="#7b4c1e" />
<circle cx="539.8" cy="635.7" r="1.3" fill="#cda066" />
<circle cx="539.8" cy="635.7" r="0.6" fill="#7b4c1e" />
<circle cx="539.8" cy="638.8" r="1.3" fill="#cda066" />
<circle cx="539.8" cy="638.8" r="0.6" fill="#7b4c1e" />
<circle cx="539.8" cy="641.9" r="1.3" fill="#cda066" />
<circle cx="539.8" cy="641.9" r="0.6" fill="#7b4c1e" />
<circle cx="539.8" cy="645.0" r="1.3" fill="#cda066" />
<circle cx="539.8" cy="645.0" r="0.6" fill="#7b4c1e" />
<circle cx="539.8" cy="648.1" r="1.3" fill="#cda066" />
<circle cx="539.8" cy="648.1" r="0.6" fill="#7b4c1e" />
<rect x="534.3" y="613.0" width="11.0" height="1.5" fill="#c8d0b8" opacity=".55"/>
<rect x="537.3" y="609.0" width="4.0" height="1.2" fill="#c8d0b8" opacity=".55"/>
<rect x="562.3" y="618.0" width="12.5" height="41.0" fill="none" stroke="#c9c9b4" stroke-width="0.5"/>
<rect x="565.3" y="620.0" width="6.5" height="37.0" fill="none" stroke="#b8c070" stroke-width="0.5"/>
<circle cx="568.5" cy="623.5" r="2.4" fill="#cda066" />
<circle cx="568.5" cy="623.5" r="1.1" fill="#7b4c1e" />
<circle cx="568.5" cy="654.5" r="2.4" fill="#cda066" />
<circle cx="568.5" cy="654.5" r="1.1" fill="#7b4c1e" />
<circle cx="568.8" cy="629.5" r="1.3" fill="#cda066" />
<circle cx="568.8" cy="629.5" r="0.6" fill="#7b4c1e" />
<circle cx="568.8" cy="632.6" r="1.3" fill="#cda066" />
<circle cx="568.8" cy="632.6" r="0.6" fill="#7b4c1e" />
<circle cx="568.8" cy="635.7" r="1.3" fill="#cda066" />
<circle cx="568.8" cy="635.7" r="0.6" fill="#7b4c1e" />
<circle cx="568.8" cy="638.8" r="1.3" fill="#cda066" />
<circle cx="568.8" cy="638.8" r="0.6" fill="#7b4c1e" />
<circle cx="568.8" cy="641.9" r="1.3" fill="#cda066" />
<circle cx="568.8" cy="641.9" r="0.6" fill="#7b4c1e" />
<circle cx="568.8" cy="645.0" r="1.3" fill="#cda066" />
<circle cx="568.8" cy="645.0" r="0.6" fill="#7b4c1e" />
<circle cx="568.8" cy="648.1" r="1.3" fill="#cda066" />
<circle cx="568.8" cy="648.1" r="0.6" fill="#7b4c1e" />
<rect x="563.3" y="613.0" width="11.0" height="1.5" fill="#c8d0b8" opacity=".55"/>
<rect x="566.3" y="609.0" width="4.0" height="1.2" fill="#c8d0b8" opacity=".55"/>
<rect x="525.5" y="631.5" width="8.0" height="7.0" fill="none" stroke="#c9c9b4" stroke-width="0.5"/>
<rect x="526.0" y="632.0" width="2.9" height="6.0" fill="#cda066" />
<rect x="530.1" y="632.0" width="2.9" height="6.0" fill="#cda066" />
<rect x="553.5" y="631.5" width="8.0" height="7.0" fill="none" stroke="#c9c9b4" stroke-width="0.5"/>
<rect x="554.0" y="632.0" width="2.9" height="6.0" fill="#cda066" />
<rect x="558.1" y="632.0" width="2.9" height="6.0" fill="#cda066" />
<rect x="526.0" y="625.0" width="1.4" height="6.0" fill="#c8d0b8" opacity=".55"/>
<rect x="531.0" y="625.0" width="1.4" height="6.0" fill="#c8d0b8" opacity=".55"/>
<rect x="554.0" y="625.0" width="1.4" height="6.0" fill="#c8d0b8" opacity=".55"/>
<rect x="559.0" y="625.0" width="1.4" height="6.0" fill="#c8d0b8" opacity=".55"/>
<rect x="508.8" y="641.8" width="18.4" height="18.4" fill="none" stroke="#b8b860" stroke-width="0.6"/>
<circle cx="518.0" cy="651.0" r="8.2" fill="#d0aa68" />
<circle cx="518.0" cy="651.0" r="3.7" fill="#6a4a1e" />
<text x="518" y="653" font-size="5.5" font-weight="bold" fill="#c8a060" text-anchor="middle">M5</text>
<rect x="515.0" y="640.0" width="4.0" height="1.2" fill="#c8d0b8" opacity=".55"/>
<circle cx="616.0" cy="631.5" r="26.5" fill="none" stroke="#d8d8d0" stroke-width="0.6"/>
<path d="M641 620 h6 v14 h-6" fill="none" stroke="#c9c9b4" stroke-width=".5"/>
<rect x="594.0" y="629.3" width="48.0" height="5.0" fill="none" stroke="#c8c070" stroke-width="0.6"/>
<circle cx="597.0" cy="631.8" r="2.0" fill="#d2b070" />
<circle cx="597.0" cy="631.8" r="1.0" fill="#8a5a28" />
<circle cx="640.0" cy="631.8" r="2.0" fill="#d2b070" />
<rect x="610.0" y="600.0" width="6.0" height="1.4" fill="#c8d0b8" opacity=".55"/>
<text x="636" y="661" font-size="4" fill="#d8d8c8" text-anchor="middle" opacity=".75">RESET</text>
<rect x="614.0" y="524.0" width="7.0" height="6.0" fill="#cda066" />
<rect x="628.0" y="524.0" width="7.0" height="6.0" fill="#cda066" />
<rect x="614.0" y="539.0" width="7.0" height="6.0" fill="#cda066" />
<rect x="628.0" y="539.0" width="7.0" height="6.0" fill="#cda066" />
<rect x="614.0" y="523.5" width="22.0" height="21.0" fill="none" stroke="#c9c9b4" stroke-width="0.5"/>
<path d="M625 525 v19 M615 534.5 h20" stroke=G stroke-width="3"/>
<rect x="607.0" y="530.0" width="1.4" height="6.0" fill="#c8d0b8" opacity=".55"/>
<circle cx="617.0" cy="519.0" r="1.0" fill="#cda066" />
<circle cx="622.0" cy="519.0" r="1.0" fill="#cda066" />
<circle cx="627.0" cy="519.0" r="1.0" fill="#cda066" />
<circle cx="632.0" cy="519.0" r="1.0" fill="#cda066" />
<rect x="619.5" y="517.0" width="3.0" height="2.5" fill="#cda066" />
<rect x="619.5" y="520.5" width="3.0" height="2.5" fill="#cda066" />
<rect x="631.5" y="513.5" width="5.0" height="9.0" fill="none" stroke="#c9c9b4" stroke-width="0.5"/>
<rect x="632.0" y="514.0" width="4.0" height="3.4" fill="#cda066" />
<rect x="632.0" y="518.6" width="4.0" height="3.4" fill="#cda066" />
<rect x="630.0" y="514.0" width="6.0" height="10.0" fill="#cda066" />
<path d="M614 548 h14 a3 3 0 0 1 3 3 v6 a3 3 0 0 1 -3 3 h-14 a3 3 0 0 1 -3 -3 v-6 a3 3 0 0 1 3 -3z" fill="none" stroke="#c9c9b4" stroke-width=".5"/>
<rect x="613.5" y="551.5" width="17.0" height="5.0" fill="#cda066" />
<rect x="620.0" y="552.5" width="4.0" height="3.0" fill="#2c7522" />
<rect x="617.0" y="560.5" width="10.0" height="5.0" fill="none" stroke="#c9c9b4" stroke-width="0.5"/>
<rect x="617.5" y="561.0" width="3.8" height="4.0" fill="#cda066" />
<rect x="622.7" y="561.0" width="3.8" height="4.0" fill="#cda066" />
<rect x="612.0" y="562.0" width="5.0" height="1.3" fill="#c8d0b8" opacity=".55"/>
<rect x="608.0" y="547.0" width="5.0" height="1.3" fill="#c8d0b8" opacity=".55"/>
<rect x="608.0" y="553.0" width="6.0" height="1.3" fill="#c8d0b8" opacity=".55"/>
<rect x="637.5" y="545.0" width="11.0" height="8.0" fill="none" stroke="#c9c9b4" stroke-width="0.5"/>
<rect x="638.5" y="546.0" width="5.0" height="6.0" fill="#cda066" />
<rect x="643.5" y="548.0" width="4.0" height="3.5" fill="#cda066" />
<rect x="638.0" y="557.0" width="5.0" height="1.3" fill="#c8d0b8" opacity=".55"/>
<rect x="655.0" y="543.7" width="15.0" height="11.6" fill="none" stroke="#c9c9b4" stroke-width="0.5"/>
<rect x="655.6" y="541.0" width="2.5" height="4.5" fill="#cda066" />
<rect x="655.6" y="553.5" width="2.5" height="4.5" fill="#cda066" />
<rect x="659.4" y="541.0" width="2.5" height="4.5" fill="#cda066" />
<rect x="659.4" y="553.5" width="2.5" height="4.5" fill="#cda066" />
<rect x="663.1" y="541.0" width="2.5" height="4.5" fill="#cda066" />
<rect x="663.1" y="553.5" width="2.5" height="4.5" fill="#cda066" />
<rect x="666.9" y="541.0" width="2.5" height="4.5" fill="#cda066" />
<rect x="666.9" y="553.5" width="2.5" height="4.5" fill="#cda066" />
<rect x="657.0" y="545.5" width="11.0" height="8.0" fill="#2c7522" />
<rect x="648.0" y="530.0" width="4.0" height="3.4" fill="#cda066" />
<rect x="648.0" y="534.6" width="4.0" height="3.4" fill="#cda066" />
<rect x="653.0" y="530.0" width="4.0" height="3.4" fill="#cda066" />
<rect x="653.0" y="534.6" width="4.0" height="3.4" fill="#cda066" />
<rect x="658.0" y="530.0" width="4.0" height="3.4" fill="#cda066" />
<rect x="658.0" y="534.6" width="4.0" height="3.4" fill="#cda066" />
<rect x="663.0" y="530.0" width="4.0" height="3.4" fill="#cda066" />
<rect x="663.0" y="534.6" width="4.0" height="3.4" fill="#cda066" />
<rect x="648.0" y="529.0" width="24.0" height="11.0" fill="none" stroke="#c9c9b4" stroke-width="0.5"/>
<rect x="672.0" y="530.0" width="1.3" height="6.0" fill="#c8d0b8" opacity=".55"/>
<rect x="677.0" y="530.0" width="1.3" height="6.0" fill="#c8d0b8" opacity=".55"/>
<rect x="682.0" y="530.0" width="1.3" height="6.0" fill="#c8d0b8" opacity=".55"/>
<rect x="650.0" y="560.5" width="4.0" height="2.9" fill="#cda066" />
<rect x="650.0" y="564.6" width="4.0" height="2.9" fill="#cda066" />
<rect x="655.0" y="560.5" width="4.0" height="2.9" fill="#cda066" />
<rect x="655.0" y="564.6" width="4.0" height="2.9" fill="#cda066" />
<rect x="660.0" y="560.5" width="4.0" height="2.9" fill="#cda066" />
<rect x="660.0" y="564.6" width="4.0" height="2.9" fill="#cda066" />
<rect x="650.0" y="560.0" width="20.0" height="8.0" fill="none" stroke="#c9c9b4" stroke-width="0.5"/>
<rect x="640.0" y="559.0" width="1.3" height="7.0" fill="#c8d0b8" opacity=".55"/>
<rect x="644.0" y="559.0" width="1.3" height="7.0" fill="#c8d0b8" opacity=".55"/>
<rect x="648.0" y="559.0" width="1.3" height="7.0" fill="#c8d0b8" opacity=".55"/>
<rect x="675.0" y="559.0" width="1.3" height="7.0" fill="#c8d0b8" opacity=".55"/>
<rect x="680.0" y="559.0" width="1.3" height="7.0" fill="#c8d0b8" opacity=".55"/>
<rect x="684.0" y="559.0" width="1.3" height="7.0" fill="#c8d0b8" opacity=".55"/>
<rect x="671.0" y="560.5" width="4.0" height="2.9" fill="#cda066" />
<rect x="671.0" y="564.6" width="4.0" height="2.9" fill="#cda066" />
<rect x="677.0" y="560.5" width="4.0" height="2.9" fill="#cda066" />
<rect x="677.0" y="564.6" width="4.0" height="2.9" fill="#cda066" />
<rect x="682.0" y="560.5" width="4.0" height="2.9" fill="#cda066" />
<rect x="682.0" y="564.6" width="4.0" height="2.9" fill="#cda066" />
<rect x="683.0" y="541.0" width="40.0" height="15.0" fill="none" stroke="#c9c9b4" stroke-width="0.5"/>
<circle cx="687.0" cy="545.0" r="1.9" fill="#cda066" />
<circle cx="687.0" cy="545.0" r="0.9" fill="#7b4c1e" />
<circle cx="687.0" cy="551.5" r="1.9" fill="#cda066" />
<circle cx="687.0" cy="551.5" r="0.9" fill="#7b4c1e" />
<circle cx="692.5" cy="545.0" r="1.9" fill="#cda066" />
<circle cx="692.5" cy="545.0" r="0.9" fill="#7b4c1e" />
<circle cx="692.5" cy="551.5" r="1.9" fill="#cda066" />
<circle cx="692.5" cy="551.5" r="0.9" fill="#7b4c1e" />
<circle cx="698.0" cy="545.0" r="1.9" fill="#cda066" />
<circle cx="698.0" cy="545.0" r="0.9" fill="#7b4c1e" />
<circle cx="698.0" cy="551.5" r="1.9" fill="#cda066" />
<circle cx="698.0" cy="551.5" r="0.9" fill="#7b4c1e" />
<circle cx="703.5" cy="545.0" r="1.9" fill="#cda066" />
<circle cx="703.5" cy="545.0" r="0.9" fill="#7b4c1e" />
<circle cx="703.5" cy="551.5" r="1.9" fill="#cda066" />
<circle cx="703.5" cy="551.5" r="0.9" fill="#7b4c1e" />
<circle cx="709.0" cy="545.0" r="1.9" fill="#cda066" />
<circle cx="709.0" cy="545.0" r="0.9" fill="#7b4c1e" />
<circle cx="709.0" cy="551.5" r="1.9" fill="#cda066" />
<circle cx="709.0" cy="551.5" r="0.9" fill="#7b4c1e" />
<circle cx="714.5" cy="545.0" r="1.9" fill="#cda066" />
<circle cx="714.5" cy="545.0" r="0.9" fill="#7b4c1e" />
<circle cx="714.5" cy="551.5" r="1.9" fill="#cda066" />
<circle cx="714.5" cy="551.5" r="0.9" fill="#7b4c1e" />
<circle cx="720.0" cy="545.0" r="1.9" fill="#cda066" />
<circle cx="720.0" cy="545.0" r="0.9" fill="#7b4c1e" />
<circle cx="720.0" cy="551.5" r="1.9" fill="#cda066" />
<circle cx="720.0" cy="551.5" r="0.9" fill="#7b4c1e" />
<rect x="700.0" y="537.0" width="4.0" height="1.3" fill="#c8d0b8" opacity=".55"/>
<rect x="680.0" y="525.0" width="7.0" height="7.0" fill="#d2b070" />
<rect x="697.5" y="528.2" width="2.9" height="3.6" fill="#cda066" />
<rect x="701.6" y="528.2" width="2.9" height="3.6" fill="#cda066" />
<rect x="706.5" y="528.2" width="2.9" height="3.6" fill="#cda066" />
<rect x="710.6" y="528.2" width="2.9" height="3.6" fill="#cda066" />
<rect x="697.0" y="526.0" width="6.0" height="1.3" fill="#c8d0b8" opacity=".55"/>
<rect x="706.0" y="526.0" width="6.0" height="1.3" fill="#c8d0b8" opacity=".55"/>
<rect x="694.5" y="554.5" width="5.0" height="11.0" fill="none" stroke="#c9c9b4" stroke-width="0.5"/>
<rect x="695.0" y="555.0" width="4.0" height="4.2" fill="#cda066" />
<rect x="695.0" y="560.8" width="4.0" height="4.2" fill="#cda066" />
<rect x="692.0" y="556.0" width="1.3" height="6.0" fill="#c8d0b8" opacity=".55"/>
<rect x="707.0" y="558.0" width="13.0" height="9.0" fill="none" stroke="#c9c9b4" stroke-width="0.5"/>
<rect x="708.0" y="559.0" width="11.0" height="3.3" fill="#c9a060" />
<rect x="708.0" y="563.0" width="11.0" height="3.3" fill="#c9a060" />
<rect x="708.0" y="569.0" width="10.0" height="1.3" fill="#c8d0b8" opacity=".55"/>
<path d="M712 559.5 h7 M712 561 h7" stroke="#e8d8a8" stroke-width=".4"/>
<rect x="660.5" y="574.5" width="7.0" height="6.0" fill="#cda066" />
<rect x="673.5" y="574.5" width="7.0" height="6.0" fill="#cda066" />
<rect x="660.5" y="587.5" width="7.0" height="6.0" fill="#cda066" />
<rect x="673.5" y="587.5" width="7.0" height="6.0" fill="#cda066" />
<rect x="659.0" y="573.0" width="22.0" height="22.0" fill="none" stroke="#c9c9b4" stroke-width="0.5"/>
<path d="M670 575 v19 M660 584.5 h20" stroke=G stroke-width="3"/>
<rect x="629.0" y="585.5" width="10.0" height="5.0" fill="none" stroke="#c9c9b4" stroke-width="0.5"/>
<rect x="629.5" y="586.0" width="3.8" height="4.0" fill="#cda066" />
<rect x="634.7" y="586.0" width="3.8" height="4.0" fill="#cda066" />
<rect x="631.0" y="594.0" width="5.0" height="1.3" fill="#c8d0b8" opacity=".55"/>
<path d="M642 580 h8 v12 a4 4 0 0 1 -8 0z" fill="none" stroke="#c9c9b4" stroke-width=".5"/>
<rect x="644.0" y="579.0" width="4.0" height="14.0" fill="#cda066" />
<rect x="644.5" y="585.0" width="3.0" height="3.0" fill="#2c7522" />
<rect x="651.5" y="579.5" width="4.0" height="2.9" fill="#cda066" />
<rect x="651.5" y="583.6" width="4.0" height="2.9" fill="#cda066" />
<rect x="652.0" y="589.0" width="1.3" height="7.0" fill="#c8d0b8" opacity=".55"/>
<rect x="665.5" y="595.5" width="5.0" height="21.0" fill="none" stroke="#c9c9b4" stroke-width="0.5"/>
<rect x="666.0" y="596.0" width="4.0" height="8.4" fill="#cda066" />
<rect x="666.0" y="607.6" width="4.0" height="8.4" fill="#cda066" />
<rect x="664.0" y="596.0" width="8.0" height="22.0" fill="#cda066" />
<rect x="664.5" y="616.0" width="7.0" height="5.0" fill="#c9a060" />
<rect x="683.0" y="606.0" width="1.3" height="6.0" fill="#c8d0b8" opacity=".55"/>
<rect x="695.0" y="575.5" width="5.0" height="13.0" fill="none" stroke="#c9c9b4" stroke-width="0.5"/>
<rect x="695.5" y="576.0" width="4.0" height="5.0" fill="#cda066" />
<rect x="695.5" y="583.0" width="4.0" height="5.0" fill="#cda066" />
<rect x="694.0" y="575.0" width="8.0" height="15.0" fill="none" stroke="#c9c9b4" stroke-width="0.5"/>
<rect x="694.5" y="576.0" width="7.0" height="5.0" fill="#cda066" />
<rect x="694.5" y="584.0" width="7.0" height="5.0" fill="#cda066" />
<text x="697.5" y="598" font-size="4.2" fill="#d8d8c8" text-anchor="middle" opacity=".75">3.3V</text>
<rect x="695.0" y="610.5" width="5.0" height="13.0" fill="none" stroke="#c9c9b4" stroke-width="0.5"/>
<rect x="695.5" y="611.0" width="4.0" height="5.0" fill="#cda066" />
<rect x="695.5" y="618.0" width="4.0" height="5.0" fill="#cda066" />
<rect x="694.0" y="610.0" width="8.0" height="15.0" fill="none" stroke="#c9c9b4" stroke-width="0.5"/>
<rect x="694.5" y="611.0" width="7.0" height="5.0" fill="#cda066" />
<rect x="694.5" y="619.0" width="7.0" height="5.0" fill="#cda066" />
<text x="705" y="629" font-size="4.2" fill="#d8d8c8" text-anchor="middle" opacity=".75">5.0V</text>
<rect x="714.0" y="588.0" width="4.0" height="2.5" fill="#cda066" />
<rect x="714.0" y="591.5" width="4.0" height="2.5" fill="#cda066" />
<circle cx="716.0" cy="598.0" r="1.3" fill="#cda066" />
<circle cx="716.0" cy="603.0" r="1.3" fill="#cda066" />
<rect x="707.0" y="591.0" width="1.3" height="7.0" fill="#c8d0b8" opacity=".55"/>
<rect x="651.0" y="644.0" width="19.0" height="17.0" fill="none" stroke="#c9c9b4" stroke-width="0.5"/>
<circle cx="654.0" cy="647.0" r="1.6" fill="#cda066" />
<circle cx="654.0" cy="647.0" r="0.8" fill="#7b4c1e" />
<circle cx="667.0" cy="647.0" r="1.6" fill="#cda066" />
<circle cx="667.0" cy="647.0" r="0.8" fill="#7b4c1e" />
<circle cx="654.0" cy="658.0" r="1.6" fill="#cda066" />
<circle cx="654.0" cy="658.0" r="0.8" fill="#7b4c1e" />
<circle cx="667.0" cy="658.0" r="1.6" fill="#cda066" />
<circle cx="667.0" cy="658.0" r="0.8" fill="#7b4c1e" />
<path d="M658 650 a3 3 0 0 1 5 0 M658 655 a3 3 0 0 0 5 0" stroke="#c9c9b4" stroke-width=".4" fill="none"/>
<rect x="649.5" y="611.5" width="5.0" height="15.0" fill="none" stroke="#c9c9b4" stroke-width="0.5"/>
<rect x="650.0" y="612.0" width="4.0" height="5.9" fill="#cda066" />
<rect x="650.0" y="620.1" width="4.0" height="5.9" fill="#cda066" />
<rect x="660.0" y="622.0" width="12.0" height="16.0" fill="none" stroke="#c9c9b4" stroke-width="0.5"/>
<rect x="661.0" y="622.0" width="2.0" height="4.0" fill="#cda066" />
<rect x="664.5" y="622.0" width="2.0" height="4.0" fill="#cda066" />
<rect x="668.0" y="622.0" width="2.0" height="4.0" fill="#cda066" />
<rect x="661.0" y="634.0" width="2.0" height="4.0" fill="#cda066" />
<rect x="664.5" y="634.0" width="2.0" height="4.0" fill="#cda066" />
<rect x="668.0" y="634.0" width="2.0" height="4.0" fill="#cda066" />
<rect x="662.0" y="626.0" width="8.0" height="8.0" fill="#2c7522" />
<rect x="660.0" y="617.0" width="8.0" height="1.3" fill="#c8d0b8" opacity=".55"/>
<rect x="672.0" y="625.0" width="1.3" height="8.0" fill="#c8d0b8" opacity=".55"/>
<rect x="642.0" y="612.8" width="8.0" height="4.5" fill="none" stroke="#c9c9b4" stroke-width="0.5"/>
<rect x="642.5" y="613.2" width="2.9" height="3.5" fill="#cda066" />
<rect x="646.6" y="613.2" width="2.9" height="3.5" fill="#cda066" />
<rect x="655.0" y="608.8" width="8.0" height="4.5" fill="none" stroke="#c9c9b4" stroke-width="0.5"/>
<rect x="655.5" y="609.2" width="2.9" height="3.5" fill="#cda066" />
<rect x="659.6" y="609.2" width="2.9" height="3.5" fill="#cda066" />
<rect x="644.0" y="610.0" width="6.0" height="1.3" fill="#c8d0b8" opacity=".55"/>
<rect x="682.0" y="613.4" width="10.0" height="7.2" fill="none" stroke="#c9c9b4" stroke-width="0.5"/>
<rect x="683.2" y="611.0" width="2.5" height="4.0" fill="#cda066" />
<rect x="683.2" y="619.0" width="2.5" height="4.0" fill="#cda066" />
<rect x="688.2" y="611.0" width="2.5" height="4.0" fill="#cda066" />
<rect x="688.2" y="619.0" width="2.5" height="4.0" fill="#cda066" />
<rect x="681.0" y="623.0" width="4.0" height="2.5" fill="#cda066" />
<rect x="681.0" y="626.5" width="4.0" height="2.5" fill="#cda066" />
<rect x="680.0" y="633.0" width="4.0" height="3.4" fill="#cda066" />
<rect x="680.0" y="637.6" width="4.0" height="3.4" fill="#cda066" />
<rect x="684.0" y="637.0" width="10.0" height="5.0" fill="none" stroke="#c9c9b4" stroke-width="0.5"/>
<rect x="684.5" y="637.5" width="3.8" height="4.0" fill="#cda066" />
<rect x="689.7" y="637.5" width="3.8" height="4.0" fill="#cda066" />
<rect x="692.0" y="636.0" width="6.0" height="1.3" fill="#c8d0b8" opacity=".55"/>
<path d="M680 643 h10 v8 a5 5 0 0 1 -10 0z" fill="none" stroke="#c9c9b4" stroke-width=".5"/>
<rect x="683.0" y="643.0" width="4.0" height="16.0" fill="#cda066" />
<rect x="683.5" y="649.0" width="3.0" height="3.0" fill="#2c7522" />
<rect x="681.0" y="615.0" width="3.4" height="4.0" fill="#cda066" />
<rect x="685.6" y="615.0" width="3.4" height="4.0" fill="#cda066" />
<rect x="697.5" y="611.5" width="5.0" height="9.0" fill="none" stroke="#c9c9b4" stroke-width="0.5"/>
<rect x="698.0" y="612.0" width="4.0" height="3.4" fill="#cda066" />
<rect x="698.0" y="616.6" width="4.0" height="3.4" fill="#cda066" />
<rect x="710.0" y="636.5" width="4.0" height="3.8" fill="#cda066" />
<rect x="710.0" y="641.7" width="4.0" height="3.8" fill="#cda066" />
<rect x="717.0" y="636.5" width="4.0" height="3.8" fill="#cda066" />
<rect x="717.0" y="641.7" width="4.0" height="3.8" fill="#cda066" />
<rect x="708.0" y="636.0" width="1.3" height="6.0" fill="#c8d0b8" opacity=".55"/>
<rect x="716.0" y="636.0" width="1.3" height="6.0" fill="#c8d0b8" opacity=".55"/>
<rect x="734.0" y="641.0" width="6.0" height="1.3" fill="#c8d0b8" opacity=".55"/>
<rect x="733.0" y="645.0" width="8.0" height="1.3" fill="#c8d0b8" opacity=".55"/>
<rect x="701.5" y="648.0" width="55.0" height="9.0" fill="none" stroke="#c9c9b4" stroke-width="0.5"/>
<rect x="703.0" y="650.5" width="52.0" height="5.0" fill="none" stroke="#c0c070" stroke-width="0.4"/>
<circle cx="708.0" cy="653.0" r="1.8" fill="#cda066" />
<circle cx="708.0" cy="653.0" r="0.8" fill="#7b4c1e" />
<circle cx="714.1" cy="653.0" r="1.8" fill="#cda066" />
<circle cx="714.1" cy="653.0" r="0.8" fill="#7b4c1e" />
<circle cx="720.2" cy="653.0" r="1.8" fill="#cda066" />
<circle cx="720.2" cy="653.0" r="0.8" fill="#7b4c1e" />
<circle cx="726.3" cy="653.0" r="1.8" fill="#cda066" />
<circle cx="726.3" cy="653.0" r="0.8" fill="#7b4c1e" />
<circle cx="732.4" cy="653.0" r="1.8" fill="#cda066" />
<circle cx="732.4" cy="653.0" r="0.8" fill="#7b4c1e" />
<circle cx="738.5" cy="653.0" r="1.8" fill="#cda066" />
<circle cx="738.5" cy="653.0" r="0.8" fill="#7b4c1e" />
<circle cx="744.6" cy="653.0" r="1.8" fill="#cda066" />
<circle cx="744.6" cy="653.0" r="0.8" fill="#7b4c1e" />
<circle cx="750.7" cy="653.0" r="1.8" fill="#cda066" />
<circle cx="750.7" cy="653.0" r="0.8" fill="#7b4c1e" />
<rect x="767.0" y="650.0" width="15.0" height="10.0" fill="none" stroke="#c9c9b4" stroke-width="0.5"/>
<circle cx="771.0" cy="654.0" r="1.7" fill="#cda066" />
<circle cx="771.0" cy="654.0" r="0.8" fill="#7b4c1e" />
<circle cx="777.0" cy="654.0" r="1.7" fill="#cda066" />
<circle cx="777.0" cy="654.0" r="0.8" fill="#7b4c1e" />
<rect x="770.0" y="645.0" width="3.0" height="1.2" fill="#c8d0b8" opacity=".55"/>
<rect x="779.0" y="636.0" width="8.0" height="8.0" fill="#d2b070" />
<rect x="795.8" y="641.3" width="18.4" height="18.4" fill="none" stroke="#b8b860" stroke-width="0.6"/>
<circle cx="805.0" cy="650.5" r="8.2" fill="#d0aa68" />
<circle cx="805.0" cy="650.5" r="3.7" fill="#6a4a1e" />
<text x="805" y="652.5" font-size="5.5" font-weight="bold" fill="#c8a060" text-anchor="middle">M5</text>
<circle cx="732.0" cy="585.5" r="12.5" fill="none" stroke="#d8d8d0" stroke-width="0.6"/>
<circle cx="732.0" cy="578.5" r="1.8" fill="#cda066" />
<circle cx="732.0" cy="578.5" r="0.9" fill="#7b4c1e" />
<circle cx="732.0" cy="592.5" r="1.8" fill="#cda066" />
<circle cx="732.0" cy="592.5" r="0.9" fill="#7b4c1e" />
<path d="M724 584.5 h16 l-3 4 h-10z M726 587.5 l2 -3 l2 3 M730 587.5 l2 -3 l2 3 M734 587.5 l2 -3 l2 3" stroke="#d8d8d0" stroke-width=".4" fill="none"/>
<path d="M728 572.5 h8 l2 3 h-12z" fill="#d8d8d0"/>
<circle cx="722.0" cy="571.0" r="1.3" fill="#c89a58" />
<circle cx="727.0" cy="571.0" r="1.3" fill="#c89a58" />
<circle cx="732.0" cy="571.0" r="1.3" fill="#c89a58" />
<circle cx="737.0" cy="571.0" r="1.3" fill="#c89a58" />
<circle cx="721.0" cy="589.5" r="1.2" fill="#c89a58" />
<circle cx="721.0" cy="594.5" r="1.2" fill="#c89a58" />
<circle cx="726.0" cy="594.5" r="1.2" fill="#c89a58" />
<circle cx="731.0" cy="594.5" r="1.2" fill="#c89a58" />
<rect x="716.0" y="581.5" width="1.3" height="6.0" fill="#c8d0b8" opacity=".55"/>
<circle cx="732.0" cy="625.0" r="12.5" fill="none" stroke="#d8d8d0" stroke-width="0.6"/>
<circle cx="732.0" cy="618.0" r="1.8" fill="#cda066" />
<circle cx="732.0" cy="618.0" r="0.9" fill="#7b4c1e" />
<circle cx="732.0" cy="632.0" r="1.8" fill="#cda066" />
<circle cx="732.0" cy="632.0" r="0.9" fill="#7b4c1e" />
<path d="M724 624 h16 l-3 4 h-10z M726 627 l2 -3 l2 3 M730 627 l2 -3 l2 3 M734 627 l2 -3 l2 3" stroke="#d8d8d0" stroke-width=".4" fill="none"/>
<path d="M728 612 h8 l2 3 h-12z" fill="#d8d8d0"/>
<circle cx="722.0" cy="610.5" r="1.3" fill="#c89a58" />
<circle cx="727.0" cy="610.5" r="1.3" fill="#c89a58" />
<circle cx="732.0" cy="610.5" r="1.3" fill="#c89a58" />
<circle cx="737.0" cy="610.5" r="1.3" fill="#c89a58" />
<circle cx="721.0" cy="629.0" r="1.2" fill="#c89a58" />
<circle cx="721.0" cy="634.0" r="1.2" fill="#c89a58" />
<circle cx="726.0" cy="634.0" r="1.2" fill="#c89a58" />
<circle cx="731.0" cy="634.0" r="1.2" fill="#c89a58" />
<rect x="716.0" y="621.0" width="1.3" height="6.0" fill="#c8d0b8" opacity=".55"/>
<rect x="747.0" y="582.5" width="5.0" height="13.0" fill="none" stroke="#c9c9b4" stroke-width="0.5"/>
<rect x="747.5" y="583.0" width="4.0" height="5.0" fill="#cda066" />
<rect x="747.5" y="590.0" width="4.0" height="5.0" fill="#cda066" />
<rect x="746.0" y="582.0" width="8.0" height="15.0" fill="none" stroke="#c9c9b4" stroke-width="0.5"/>
<circle cx="748.0" cy="572.0" r="1.2" fill="#c89a58" />
<circle cx="748.0" cy="577.0" r="1.2" fill="#c89a58" />
<circle cx="753.0" cy="572.0" r="1.2" fill="#c89a58" />
<circle cx="753.0" cy="577.0" r="1.2" fill="#c89a58" />
<circle cx="758.0" cy="572.0" r="1.2" fill="#c89a58" />
<circle cx="758.0" cy="577.0" r="1.2" fill="#c89a58" />
<rect x="749.5" y="616.5" width="13.0" height="7.0" fill="none" stroke="#c9c9b4" stroke-width="0.5"/>
<rect x="750.0" y="617.0" width="5.0" height="6.0" fill="#cda066" />
<rect x="757.0" y="617.0" width="5.0" height="6.0" fill="#cda066" />
<rect x="752.5" y="618.5" width="7.0" height="3.0" fill="#2c7522" />
<rect x="752.0" y="612.0" width="6.0" height="1.3" fill="#c8d0b8" opacity=".55"/>
<rect x="709.0" y="553.5" width="4.0" height="3.8" fill="#cda066" />
<rect x="709.0" y="558.7" width="4.0" height="3.8" fill="#cda066" />
<rect x="717.0" y="554.5" width="4.0" height="3.8" fill="#cda066" />
<rect x="717.0" y="559.7" width="4.0" height="3.8" fill="#cda066" />
<rect x="724.0" y="554.5" width="4.0" height="3.8" fill="#cda066" />
<rect x="724.0" y="559.7" width="4.0" height="3.8" fill="#cda066" />
<rect x="712.0" y="540.0" width="14.0" height="10.0" fill="none" stroke="#c9c9b4" stroke-width="0.5"/>
<circle cx="713.0" cy="544.0" r="1.8" fill="#cda066" />
<circle cx="713.0" cy="544.0" r="0.9" fill="#7b4c1e" />
<circle cx="713.0" cy="548.5" r="1.8" fill="#cda066" />
<circle cx="713.0" cy="548.5" r="0.9" fill="#7b4c1e" />
<circle cx="719.0" cy="544.0" r="1.8" fill="#cda066" />
<circle cx="719.0" cy="544.0" r="0.9" fill="#7b4c1e" />
<circle cx="719.0" cy="548.5" r="1.8" fill="#cda066" />
<circle cx="719.0" cy="548.5" r="0.9" fill="#7b4c1e" />
<circle cx="725.0" cy="544.0" r="1.8" fill="#cda066" />
<circle cx="725.0" cy="544.0" r="0.9" fill="#7b4c1e" />
<circle cx="725.0" cy="548.5" r="1.8" fill="#cda066" />
<circle cx="725.0" cy="548.5" r="0.9" fill="#7b4c1e" />
<rect x="789.0" y="510.0" width="24.5" height="126.0" fill="none" stroke="#c9c9b4" stroke-width="0.5"/>
<rect x="791.0" y="513.0" width="20.0" height="120.0" fill="none" stroke="#c0c070" stroke-width="0.5"/>
<circle cx="795.8" cy="517.5" r="2.9" fill="#cda066" />
<circle cx="795.8" cy="517.5" r="1.5" fill="#7b4c1e" />
<circle cx="806.3" cy="517.5" r="2.9" fill="#cda066" />
<circle cx="806.3" cy="517.5" r="1.5" fill="#7b4c1e" />
<circle cx="795.8" cy="527.5" r="2.9" fill="#cda066" />
<circle cx="795.8" cy="527.5" r="1.5" fill="#7b4c1e" />
<circle cx="806.3" cy="527.5" r="2.9" fill="#cda066" />
<circle cx="806.3" cy="527.5" r="1.5" fill="#7b4c1e" />
<circle cx="795.8" cy="537.6" r="2.9" fill="#cda066" />
<circle cx="795.8" cy="537.6" r="1.5" fill="#7b4c1e" />
<circle cx="806.3" cy="537.6" r="2.9" fill="#cda066" />
<circle cx="806.3" cy="537.6" r="1.5" fill="#7b4c1e" />
<circle cx="795.8" cy="547.6" r="2.9" fill="#cda066" />
<circle cx="795.8" cy="547.6" r="1.5" fill="#7b4c1e" />
<circle cx="806.3" cy="547.6" r="2.9" fill="#cda066" />
<circle cx="806.3" cy="547.6" r="1.5" fill="#7b4c1e" />
<circle cx="795.8" cy="557.7" r="2.9" fill="#cda066" />
<circle cx="795.8" cy="557.7" r="1.5" fill="#7b4c1e" />
<circle cx="806.3" cy="557.7" r="2.9" fill="#cda066" />
<circle cx="806.3" cy="557.7" r="1.5" fill="#7b4c1e" />
<circle cx="795.8" cy="567.8" r="2.9" fill="#cda066" />
<circle cx="795.8" cy="567.8" r="1.5" fill="#7b4c1e" />
<circle cx="806.3" cy="567.8" r="2.9" fill="#cda066" />
<circle cx="806.3" cy="567.8" r="1.5" fill="#7b4c1e" />
<circle cx="795.8" cy="577.8" r="2.9" fill="#cda066" />
<circle cx="795.8" cy="577.8" r="1.5" fill="#7b4c1e" />
<circle cx="806.3" cy="577.8" r="2.9" fill="#cda066" />
<circle cx="806.3" cy="577.8" r="1.5" fill="#7b4c1e" />
<circle cx="795.8" cy="587.9" r="2.9" fill="#cda066" />
<circle cx="795.8" cy="587.9" r="1.5" fill="#7b4c1e" />
<circle cx="806.3" cy="587.9" r="2.9" fill="#cda066" />
<circle cx="806.3" cy="587.9" r="1.5" fill="#7b4c1e" />
<circle cx="795.8" cy="597.9" r="2.9" fill="#cda066" />
<circle cx="795.8" cy="597.9" r="1.5" fill="#7b4c1e" />
<circle cx="806.3" cy="597.9" r="2.9" fill="#cda066" />
<circle cx="806.3" cy="597.9" r="1.5" fill="#7b4c1e" />
<circle cx="795.8" cy="608.0" r="2.9" fill="#cda066" />
<circle cx="795.8" cy="608.0" r="1.5" fill="#7b4c1e" />
<circle cx="806.3" cy="608.0" r="2.9" fill="#cda066" />
<circle cx="806.3" cy="608.0" r="1.5" fill="#7b4c1e" />
<circle cx="795.8" cy="618.0" r="2.9" fill="#cda066" />
<circle cx="795.8" cy="618.0" r="1.5" fill="#7b4c1e" />
<circle cx="806.3" cy="618.0" r="2.9" fill="#cda066" />
<circle cx="806.3" cy="618.0" r="1.5" fill="#7b4c1e" />
<circle cx="795.8" cy="628.0" r="2.9" fill="#cda066" />
<circle cx="795.8" cy="628.0" r="1.5" fill="#7b4c1e" />
<circle cx="806.3" cy="628.0" r="2.9" fill="#cda066" />
<circle cx="806.3" cy="628.0" r="1.5" fill="#7b4c1e" />
<text x="800" y="576" font-size="11" fill="#eeee70" text-anchor="middle" transform="rotate(-90 800 572)">P2</text>
<circle cx="785.0" cy="528.0" r="0.7" fill="#aa4a3a" />
<circle cx="785.0" cy="538.0" r="0.7" fill="#aa4a3a" />
<circle cx="815.0" cy="532.0" r="0.7" fill="#aa4a3a" />
<rect x="787.5" y="570.0" width="1.5" height="7.0" fill="#d8d8d0" />
<rect x="732.0" y="213.0" width="6.0" height="16.0" fill="none" stroke="#c9c9b4" stroke-width="0.5"/>
<rect x="736.7" y="247.5" width="4.6" height="7.0" fill="none" stroke="#c9c9b4" stroke-width="0.5"/>
<rect x="737.2" y="248.0" width="3.6" height="2.5" fill="#cda066" />
<rect x="737.2" y="251.5" width="3.6" height="2.5" fill="#cda066" />
<rect x="726.0" y="245.0" width="1.3" height="7.0" fill="#c8d0b8" opacity=".55"/>
<rect x="731.0" y="245.0" width="1.3" height="7.0" fill="#c8d0b8" opacity=".55"/>
<rect x="759.0" y="283.0" width="1.3" height="4.0" fill="#c8d0b8" opacity=".55"/>
<rect x="764.0" y="283.0" width="1.3" height="4.0" fill="#c8d0b8" opacity=".55"/>
<rect x="769.0" y="283.0" width="1.3" height="4.0" fill="#c8d0b8" opacity=".55"/>
<rect x="740.0" y="286.0" width="4.0" height="1.3" fill="#c8d0b8" opacity=".55"/>
<circle cx="648.0" cy="450.3" r=".55" fill="#1d5a1d"/>
<circle cx="791.9" cy="406.5" r=".55" fill="#1d5a1d"/>
<circle cx="664.9" cy="463.1" r=".55" fill="#1d5a1d"/>
<circle cx="566.3" cy="428.0" r=".55" fill="#1d5a1d"/>
<circle cx="702.1" cy="558.7" r=".55" fill="#1d5a1d"/>
<circle cx="538.7" cy="331.1" r=".55" fill="#1d5a1d"/>
<circle cx="537.7" cy="566.5" r=".55" fill="#1d5a1d"/>
<circle cx="721.5" cy="209.5" r=".55" fill="#1d5a1d"/>
<circle cx="809.6" cy="638.6" r=".55" fill="#1d5a1d"/>
<circle cx="709.4" cy="476.2" r=".55" fill="#1d5a1d"/>
<circle cx="558.0" cy="197.0" r=".55" fill="#1d5a1d"/>
<circle cx="671.2" cy="217.7" r=".55" fill="#1d5a1d"/>
<circle cx="568.0" cy="302.5" r=".55" fill="#1d5a1d"/>
<circle cx="519.2" cy="405.7" r=".55" fill="#1d5a1d"/>
<circle cx="644.4" cy="581.7" r=".55" fill="#1d5a1d"/>
<circle cx="668.3" cy="487.7" r=".55" fill="#1d5a1d"/>
<circle cx="662.4" cy="498.0" r=".55" fill="#1d5a1d"/>
<circle cx="649.5" cy="319.3" r=".55" fill="#1d5a1d"/>
<circle cx="814.3" cy="653.0" r=".55" fill="#1d5a1d"/>
<circle cx="766.3" cy="519.1" r=".55" fill="#1d5a1d"/>
<circle cx="606.2" cy="296.8" r=".55" fill="#1d5a1d"/>
<circle cx="598.2" cy="222.7" r=".55" fill="#1d5a1d"/>
<circle cx="743.7" cy="376.2" r=".55" fill="#1d5a1d"/>
<circle cx="768.2" cy="369.7" r=".55" fill="#1d5a1d"/>
<circle cx="802.2" cy="584.0" r=".55" fill="#1d5a1d"/>
<circle cx="510.2" cy="287.5" r=".55" fill="#1d5a1d"/>
<circle cx="787.6" cy="408.5" r=".55" fill="#1d5a1d"/>
<circle cx="809.0" cy="374.8" r=".55" fill="#1d5a1d"/>
<circle cx="532.3" cy="482.7" r=".55" fill="#1d5a1d"/>
<circle cx="747.4" cy="315.4" r=".55" fill="#1d5a1d"/>
<circle cx="536.6" cy="344.7" r=".55" fill="#1d5a1d"/>
<circle cx="804.0" cy="542.5" r=".55" fill="#1d5a1d"/>
<circle cx="546.0" cy="304.6" r=".55" fill="#1d5a1d"/>
<circle cx="540.8" cy="217.9" r=".55" fill="#1d5a1d"/>
<circle cx="753.1" cy="272.6" r=".55" fill="#1d5a1d"/>
<circle cx="680.6" cy="398.1" r=".55" fill="#1d5a1d"/>
<circle cx="568.2" cy="530.3" r=".55" fill="#1d5a1d"/>
<circle cx="549.9" cy="489.3" r=".55" fill="#1d5a1d"/>
<circle cx="545.5" cy="385.7" r=".55" fill="#1d5a1d"/>
<circle cx="574.9" cy="315.5" r=".55" fill="#1d5a1d"/>
<circle cx="806.1" cy="563.6" r=".55" fill="#1d5a1d"/>
<circle cx="602.8" cy="601.5" r=".55" fill="#1d5a1d"/>
<circle cx="574.3" cy="373.3" r=".55" fill="#1d5a1d"/>
<circle cx="770.6" cy="488.5" r=".55" fill="#1d5a1d"/>
<circle cx="540.6" cy="650.0" r=".55" fill="#1d5a1d"/>
<circle cx="575.0" cy="310.1" r=".55" fill="#1d5a1d"/>
<circle cx="745.7" cy="343.0" r=".55" fill="#1d5a1d"/>
<circle cx="600.4" cy="224.1" r=".55" fill="#1d5a1d"/>
<circle cx="537.5" cy="461.0" r=".55" fill="#1d5a1d"/>
<circle cx="584.1" cy="469.6" r=".55" fill="#1d5a1d"/>
<circle cx="623.4" cy="400.7" r=".55" fill="#1d5a1d"/>
<circle cx="802.5" cy="414.9" r=".55" fill="#1d5a1d"/>
<circle cx="685.2" cy="592.9" r=".55" fill="#1d5a1d"/>
<circle cx="565.8" cy="261.7" r=".55" fill="#1d5a1d"/>
<circle cx="787.1" cy="570.3" r=".55" fill="#1d5a1d"/>
<circle cx="586.1" cy="278.3" r=".55" fill="#1d5a1d"/>
<circle cx="735.5" cy="627.3" r=".55" fill="#1d5a1d"/>
<circle cx="570.0" cy="631.8" r=".55" fill="#1d5a1d"/>
<circle cx="779.1" cy="470.6" r=".55" fill="#1d5a1d"/>
<circle cx="638.5" cy="238.3" r=".55" fill="#1d5a1d"/>
<circle cx="521.8" cy="637.6" r=".55" fill="#1d5a1d"/>
<circle cx="582.7" cy="517.6" r=".55" fill="#1d5a1d"/>
<circle cx="588.4" cy="573.0" r=".55" fill="#1d5a1d"/>
<circle cx="691.9" cy="326.4" r=".55" fill="#1d5a1d"/>
<circle cx="563.5" cy="525.0" r=".55" fill="#1d5a1d"/>
<circle cx="531.0" cy="296.2" r=".55" fill="#1d5a1d"/>
<circle cx="680.6" cy="586.4" r=".55" fill="#1d5a1d"/>
<circle cx="697.4" cy="320.3" r=".55" fill="#1d5a1d"/>
<circle cx="789.8" cy="284.9" r=".55" fill="#1d5a1d"/>
<circle cx="515.1" cy="315.2" r=".55" fill="#1d5a1d"/>
<circle cx="645.9" cy="218.1" r=".55" fill="#1d5a1d"/>
<circle cx="563.8" cy="361.5" r=".55" fill="#1d5a1d"/>
<circle cx="684.5" cy="251.2" r=".55" fill="#1d5a1d"/>
<circle cx="620.5" cy="604.3" r=".55" fill="#1d5a1d"/>
<circle cx="809.1" cy="495.5" r=".55" fill="#1d5a1d"/>
<circle cx="720.8" cy="461.8" r=".55" fill="#1d5a1d"/>
<circle cx="552.8" cy="206.3" r=".55" fill="#1d5a1d"/>
<circle cx="515.5" cy="613.2" r=".55" fill="#1d5a1d"/>
<circle cx="723.8" cy="637.7" r=".55" fill="#1d5a1d"/>
<circle cx="516.5" cy="485.8" r=".55" fill="#1d5a1d"/>
<circle cx="657.1" cy="529.7" r=".55" fill="#1d5a1d"/>
<circle cx="607.3" cy="654.7" r=".55" fill="#1d5a1d"/>
<circle cx="533.0" cy="443.9" r=".55" fill="#1d5a1d"/>
<circle cx="734.8" cy="608.6" r=".55" fill="#1d5a1d"/>
<circle cx="734.8" cy="517.2" r=".55" fill="#1d5a1d"/>
<circle cx="751.9" cy="615.5" r=".55" fill="#1d5a1d"/>
<circle cx="617.3" cy="508.6" r=".55" fill="#1d5a1d"/>
<circle cx="784.8" cy="595.1" r=".55" fill="#1d5a1d"/>
<circle cx="637.2" cy="557.6" r=".55" fill="#1d5a1d"/>
<circle cx="773.4" cy="456.4" r=".55" fill="#1d5a1d"/>
<circle cx="700.6" cy="367.8" r=".55" fill="#1d5a1d"/>
<circle cx="687.7" cy="473.1" r=".55" fill="#1d5a1d"/>
<circle cx="534.5" cy="487.3" r=".55" fill="#1d5a1d"/>
<circle cx="813.0" cy="599.1" r=".55" fill="#1d5a1d"/>
<circle cx="732.1" cy="370.6" r=".55" fill="#1d5a1d"/>
<circle cx="734.2" cy="460.1" r=".55" fill="#1d5a1d"/>
<circle cx="644.4" cy="579.8" r=".55" fill="#1d5a1d"/>
<circle cx="535.6" cy="538.8" r=".55" fill="#1d5a1d"/>
<circle cx="519.1" cy="469.6" r=".55" fill="#1d5a1d"/>
<circle cx="656.7" cy="297.1" r=".55" fill="#1d5a1d"/>
<circle cx="723.0" cy="421.2" r=".55" fill="#1d5a1d"/>
<circle cx="697.4" cy="618.0" r=".55" fill="#1d5a1d"/>
<circle cx="588.0" cy="195.3" r=".55" fill="#1d5a1d"/>
<circle cx="601.8" cy="505.3" r=".55" fill="#1d5a1d"/>
<circle cx="571.8" cy="268.9" r=".55" fill="#1d5a1d"/>
<circle cx="786.2" cy="496.9" r=".55" fill="#1d5a1d"/>
<circle cx="644.8" cy="604.7" r=".55" fill="#1d5a1d"/>
<circle cx="609.7" cy="499.6" r=".55" fill="#1d5a1d"/>
<circle cx="570.5" cy="390.4" r=".55" fill="#1d5a1d"/>
<circle cx="755.8" cy="615.1" r=".55" fill="#1d5a1d"/>
<circle cx="778.5" cy="368.8" r=".55" fill="#1d5a1d"/>
<circle cx="687.8" cy="337.2" r=".55" fill="#1d5a1d"/>
<circle cx="551.5" cy="420.9" r=".55" fill="#1d5a1d"/>
<circle cx="765.3" cy="584.7" r=".55" fill="#1d5a1d"/>
<circle cx="726.9" cy="631.8" r=".55" fill="#1d5a1d"/>
<circle cx="594.4" cy="268.6" r=".55" fill="#1d5a1d"/>
<circle cx="647.4" cy="318.0" r=".55" fill="#1d5a1d"/>
<circle cx="575.3" cy="382.5" r=".55" fill="#1d5a1d"/>
<circle cx="700.8" cy="419.7" r=".55" fill="#1d5a1d"/>
<circle cx="606.2" cy="580.2" r=".55" fill="#1d5a1d"/>
<circle cx="809.5" cy="400.4" r=".55" fill="#1d5a1d"/>
<circle cx="532.8" cy="204.6" r=".55" fill="#1d5a1d"/>
<circle cx="776.2" cy="209.3" r=".55" fill="#1d5a1d"/>
<circle cx="726.1" cy="455.3" r=".55" fill="#1d5a1d"/>
<circle cx="604.3" cy="558.1" r=".55" fill="#1d5a1d"/>
<circle cx="515.8" cy="253.2" r=".55" fill="#1d5a1d"/>
<circle cx="648.7" cy="201.5" r=".55" fill="#1d5a1d"/>
<circle cx="763.0" cy="300.4" r=".55" fill="#1d5a1d"/>
<circle cx="553.0" cy="211.8" r=".55" fill="#1d5a1d"/>
<circle cx="701.9" cy="397.6" r=".55" fill="#1d5a1d"/>
<circle cx="702.1" cy="494.6" r=".55" fill="#1d5a1d"/>
<circle cx="756.3" cy="635.7" r=".55" fill="#1d5a1d"/>
<circle cx="718.8" cy="282.7" r=".55" fill="#1d5a1d"/>
<circle cx="654.9" cy="273.1" r=".55" fill="#1d5a1d"/>
<circle cx="513.3" cy="409.6" r=".55" fill="#1d5a1d"/>
<circle cx="727.8" cy="273.3" r=".55" fill="#1d5a1d"/>
<circle cx="593.1" cy="350.8" r=".55" fill="#1d5a1d"/>
<circle cx="722.7" cy="432.0" r=".55" fill="#1d5a1d"/>
<circle cx="697.4" cy="541.6" r=".55" fill="#1d5a1d"/>
<circle cx="630.0" cy="558.2" r=".55" fill="#1d5a1d"/>
<circle cx="786.4" cy="230.6" r=".7" fill="#a8543a"/>
<circle cx="794.4" cy="525.9" r=".7" fill="#a8543a"/>
<circle cx="549.6" cy="400.9" r=".7" fill="#a8543a"/>
<circle cx="700.8" cy="613.1" r=".7" fill="#a8543a"/>
<circle cx="624.9" cy="454.5" r=".7" fill="#a8543a"/>
<circle cx="778.2" cy="560.5" r=".7" fill="#a8543a"/>
<circle cx="798.0" cy="405.6" r=".7" fill="#a8543a"/>
<circle cx="708.7" cy="285.3" r=".7" fill="#a8543a"/>
<circle cx="730.2" cy="570.5" r=".7" fill="#a8543a"/>
<circle cx="705.7" cy="523.7" r=".7" fill="#a8543a"/>
<circle cx="575.1" cy="608.5" r=".7" fill="#a8543a"/>
<circle cx="809.1" cy="644.5" r=".7" fill="#a8543a"/>
<circle cx="673.8" cy="557.7" r=".7" fill="#a8543a"/>
<circle cx="607.7" cy="613.1" r=".7" fill="#a8543a"/>
<circle cx="771.0" cy="352.1" r=".7" fill="#a8543a"/>
<circle cx="535.2" cy="395.0" r=".7" fill="#a8543a"/>
<circle cx="677.8" cy="547.2" r=".7" fill="#a8543a"/>
<circle cx="658.7" cy="203.2" r=".7" fill="#a8543a"/>
<circle cx="756.8" cy="219.8" r=".7" fill="#a8543a"/>
<circle cx="754.0" cy="270.4" r=".7" fill="#a8543a"/>
<circle cx="612.2" cy="556.4" r=".7" fill="#a8543a"/>
<circle cx="552.9" cy="259.1" r=".7" fill="#a8543a"/>
<circle cx="667.5" cy="526.5" r=".7" fill="#a8543a"/>
<circle cx="766.2" cy="510.6" r=".7" fill="#a8543a"/>
<circle cx="798.5" cy="419.1" r=".7" fill="#a8543a"/>
<circle cx="799.5" cy="230.0" r=".7" fill="#a8543a"/>
<circle cx="577.5" cy="434.9" r=".7" fill="#a8543a"/>
<circle cx="598.5" cy="528.9" r=".7" fill="#a8543a"/>
<circle cx="704.9" cy="433.1" r=".7" fill="#a8543a"/>
<circle cx="767.3" cy="450.4" r=".7" fill="#a8543a"/>
</svg>
<!--/PCB-->
<!-- BROWSER PANEL -->
<div class="a" style="left:884px;top:111px;width:278px;height:611px;background:#f0f0f0;border-left:1px solid #e4e4e4"></div>
<div class="t" style="left:889.5px;top:118.3px;font-size:15.9px;color:#222">Browser</div>
<svg class="a" style="left:1130px;top:119px" width="30" height="12" viewBox="1130 119 30 12">
  <path d="M1133.5 122.8 h8 l-4 4z" fill="#666"/>
  <path d="M1149.8 121 l6.4 6.4 M1156.2 121 l-6.4 6.4" stroke="#555" stroke-width="1"/>
</svg>
<div class="a" style="left:888.5px;top:141.5px;width:131.5px;height:13px;background:#fff;border:1px solid #e8e8e8"></div>
<div class="t" style="left:892px;top:144.5px;font-size:6.6px;color:#888">No schema selected</div>
<svg class="a" style="left:1008px;top:146px" width="6" height="4"><path d="M0 0.5 h5 l-2.5 2.5z" fill="#555"/></svg>
<div id="tree" class="a" style="left:888.5px;top:156px;width:131.5px;height:565px;background:#fff;border:1px solid #e3e3e3"></div>
<div id="parts" class="a" style="left:1024px;top:152.5px;width:135.5px;height:568px;background:#fff;border:1px solid #e3e3e3"></div>
<div class="a" style="left:1025px;top:142.5px;width:42.5px;height:11px;background:#fff;border:1px solid #e3e3e3;border-bottom:none"></div>

<svg class="a" style="left:893px;top:161.5px" width="8" height="7"><path d="M7 0.3 V6.5 H0.5z" fill="#555"/></svg>
<svg class="a" style="left:904.0px;top:159.5px" width="10" height="11" viewBox="0 0 10 11"><path d="M.8 .5 h5.2 l2.5 2.5 v7.3 h-7.7z" fill="#fff" stroke="#8a8a8a" stroke-width=".7"/><path d="M3.6 3.3 h1.6 a2.1 2.1 0 0 1 0 4.2 h-1.6z" fill="#2e9be0"/><path d="M.8 5.4 h2.8 M7.3 5.4 h1.2 M1.6 4.3 h2 M1.6 6.5 h2" stroke="#2e9be0" stroke-width=".7"/></svg>
<div class="t tr" style="left:916px;top:162.10px">DVR SYSTEM BOARD</div>
<div class="a" style="left:917px;top:170.3px;width:101px;height:9.6px;background:#eeeeee"></div>
<svg class="a" style="left:919.0px;top:170.25px" width="10" height="11" viewBox="0 0 10 11"><path d="M.8 .5 h5.2 l2.5 2.5 v7.3 h-7.7z" fill="#fff" stroke="#8a8a8a" stroke-width=".7"/><path d="M3.6 3.3 h1.6 a2.1 2.1 0 0 1 0 4.2 h-1.6z" fill="#2e9be0"/><path d="M.8 5.4 h2.8 M7.3 5.4 h1.2 M1.6 4.3 h2 M1.6 6.5 h2" stroke="#2e9be0" stroke-width=".7"/></svg>
<div class="t tr" style="left:929.8px;top:172.85px;color:#c0303a;">1:01.Description</div>
<svg class="a" style="left:919.0px;top:181.0px" width="10" height="11" viewBox="0 0 10 11"><path d="M.8 .5 h5.2 l2.5 2.5 v7.3 h-7.7z" fill="#fff" stroke="#8a8a8a" stroke-width=".7"/><path d="M3.6 3.3 h1.6 a2.1 2.1 0 0 1 0 4.2 h-1.6z" fill="#2e9be0"/><path d="M.8 5.4 h2.8 M7.3 5.4 h1.2 M1.6 4.3 h2 M1.6 6.5 h2" stroke="#2e9be0" stroke-width=".7"/></svg>
<div class="t tr" style="left:929.8px;top:183.60px;">2:02 1.CPU MEMORY</div>
<svg class="a" style="left:919.0px;top:191.75px" width="10" height="11" viewBox="0 0 10 11"><path d="M.8 .5 h5.2 l2.5 2.5 v7.3 h-7.7z" fill="#fff" stroke="#8a8a8a" stroke-width=".7"/><path d="M3.6 3.3 h1.6 a2.1 2.1 0 0 1 0 4.2 h-1.6z" fill="#2e9be0"/><path d="M.8 5.4 h2.8 M7.3 5.4 h1.2 M1.6 4.3 h2 M1.6 6.5 h2" stroke="#2e9be0" stroke-width=".7"/></svg>
<div class="t tr" style="left:929.8px;top:194.35px;">3:02 2.CPU SATA PCI</div>
<svg class="a" style="left:919.0px;top:202.5px" width="10" height="11" viewBox="0 0 10 11"><path d="M.8 .5 h5.2 l2.5 2.5 v7.3 h-7.7z" fill="#fff" stroke="#8a8a8a" stroke-width=".7"/><path d="M3.6 3.3 h1.6 a2.1 2.1 0 0 1 0 4.2 h-1.6z" fill="#2e9be0"/><path d="M.8 5.4 h2.8 M7.3 5.4 h1.2 M1.6 4.3 h2 M1.6 6.5 h2" stroke="#2e9be0" stroke-width=".7"/></svg>
<div class="t tr" style="left:929.8px;top:205.10px;">4:02 3.CPU FLASH</div>
<svg class="a" style="left:919.0px;top:213.25px" width="10" height="11" viewBox="0 0 10 11"><path d="M.8 .5 h5.2 l2.5 2.5 v7.3 h-7.7z" fill="#fff" stroke="#8a8a8a" stroke-width=".7"/><path d="M3.6 3.3 h1.6 a2.1 2.1 0 0 1 0 4.2 h-1.6z" fill="#2e9be0"/><path d="M.8 5.4 h2.8 M7.3 5.4 h1.2 M1.6 4.3 h2 M1.6 6.5 h2" stroke="#2e9be0" stroke-width=".7"/></svg>
<div class="t tr" style="left:929.8px;top:215.85px;">5:02 4.CPU NETWORK</div>
<svg class="a" style="left:919.0px;top:224.0px" width="10" height="11" viewBox="0 0 10 11"><path d="M.8 .5 h5.2 l2.5 2.5 v7.3 h-7.7z" fill="#fff" stroke="#8a8a8a" stroke-width=".7"/><path d="M3.6 3.3 h1.6 a2.1 2.1 0 0 1 0 4.2 h-1.6z" fill="#2e9be0"/><path d="M.8 5.4 h2.8 M7.3 5.4 h1.2 M1.6 4.3 h2 M1.6 6.5 h2" stroke="#2e9be0" stroke-width=".7"/></svg>
<div class="t tr" style="left:929.8px;top:226.60px;">6:02 5.CPU IRQ GPIO</div>
<svg class="a" style="left:919.0px;top:234.75px" width="10" height="11" viewBox="0 0 10 11"><path d="M.8 .5 h5.2 l2.5 2.5 v7.3 h-7.7z" fill="#fff" stroke="#8a8a8a" stroke-width=".7"/><path d="M3.6 3.3 h1.6 a2.1 2.1 0 0 1 0 4.2 h-1.6z" fill="#2e9be0"/><path d="M.8 5.4 h2.8 M7.3 5.4 h1.2 M1.6 4.3 h2 M1.6 6.5 h2" stroke="#2e9be0" stroke-width=".7"/></svg>
<div class="t tr" style="left:929.8px;top:237.35px;">7:02 6.CPU USB I2C UART</div>
<svg class="a" style="left:919.0px;top:245.5px" width="10" height="11" viewBox="0 0 10 11"><path d="M.8 .5 h5.2 l2.5 2.5 v7.3 h-7.7z" fill="#fff" stroke="#8a8a8a" stroke-width=".7"/><path d="M3.6 3.3 h1.6 a2.1 2.1 0 0 1 0 4.2 h-1.6z" fill="#2e9be0"/><path d="M.8 5.4 h2.8 M7.3 5.4 h1.2 M1.6 4.3 h2 M1.6 6.5 h2" stroke="#2e9be0" stroke-width=".7"/></svg>
<div class="t tr" style="left:929.8px;top:248.10px;">8:02 7.CPU POWER</div>
<svg class="a" style="left:919.0px;top:256.25px" width="10" height="11" viewBox="0 0 10 11"><path d="M.8 .5 h5.2 l2.5 2.5 v7.3 h-7.7z" fill="#fff" stroke="#8a8a8a" stroke-width=".7"/><path d="M3.6 3.3 h1.6 a2.1 2.1 0 0 1 0 4.2 h-1.6z" fill="#2e9be0"/><path d="M.8 5.4 h2.8 M7.3 5.4 h1.2 M1.6 4.3 h2 M1.6 6.5 h2" stroke="#2e9be0" stroke-width=".7"/></svg>
<div class="t tr" style="left:929.8px;top:258.85px;">9:03.SYS RESET RTC</div>
<svg class="a" style="left:919.0px;top:267.0px" width="10" height="11" viewBox="0 0 10 11"><path d="M.8 .5 h5.2 l2.5 2.5 v7.3 h-7.7z" fill="#fff" stroke="#8a8a8a" stroke-width=".7"/><path d="M3.6 3.3 h1.6 a2.1 2.1 0 0 1 0 4.2 h-1.6z" fill="#2e9be0"/><path d="M.8 5.4 h2.8 M7.3 5.4 h1.2 M1.6 4.3 h2 M1.6 6.5 h2" stroke="#2e9be0" stroke-width=".7"/></svg>
<div class="t tr" style="left:929.8px;top:269.60px;">10:08.PWR MainPower</div>
<svg class="a" style="left:893px;top:279.75px" width="8" height="7"><path d="M7 0.3 V6.5 H0.5z" fill="#555"/></svg>
<svg class="a" style="left:904px;top:277.75px" width="10" height="10"><rect x="0.5" y="0.5" width="5" height="9" fill="#1f9a1f"/><rect x="5.5" y="1.5" width="2.5" height="8" fill="#e8d800"/></svg>
<div class="t tr" style="left:916px;top:280.35px">DVR SYSTEM BOARD</div>
<svg class="a" style="left:906px;top:289.5px" width="6" height="8"><path d="M.5 .5 L5.3 4 L.5 7.5z" fill="none" stroke="#888" stroke-width=".7"/></svg>
<div class="a" style="left:918px;top:289.0px;width:6px;height:8.5px;background:#2a8a2a"></div>
<div class="t tr" style="left:927px;top:291.10px">1:top</div>
<div class="a" style="left:918px;top:299.75px;width:6px;height:8.5px;background:#0b2e0b"></div>
<div class="t tr" style="left:927px;top:301.85px">2:inner1</div>
<div class="a" style="left:918px;top:310.5px;width:6px;height:8.5px;background:#8a8a12"></div>
<div class="t tr" style="left:927px;top:312.60px">3:SIGNAL 3</div>
<div class="a" style="left:918px;top:321.25px;width:6px;height:8.5px;background:#9a3ad0"></div>
<div class="t tr" style="left:927px;top:323.35px">4:SIGNAL 4</div>
<div class="a" style="left:918px;top:332.0px;width:6px;height:8.5px;background:#ff5a10"></div>
<div class="t tr" style="left:927px;top:334.10px">5:SIGNAL 5</div>
<div class="a" style="left:918px;top:342.75px;width:6px;height:8.5px;background:#8a6af2"></div>
<div class="t tr" style="left:927px;top:344.85px">6:SIGNAL 6</div>
<div class="a" style="left:918px;top:353.5px;width:6px;height:8.5px;background:#6e6e6e"></div>
<div class="t tr" style="left:927px;top:355.60px">7:SIGNAL 7</div>
<svg class="a" style="left:906px;top:364.75px" width="6" height="8"><path d="M.5 .5 L5.3 4 L.5 7.5z" fill="none" stroke="#888" stroke-width=".7"/></svg>
<div class="a" style="left:918px;top:364.25px;width:6px;height:8.5px;background:#d0106a"></div>
<div class="t tr" style="left:927px;top:366.35px">8:SIGNAL 8</div>
<svg class="a" style="left:903px;top:374.5px" width="10" height="9"><path d="M.5 1.5 h3 l1 1 h5 v6 h-9z" fill="#f2d48a" stroke="#c8a050" stroke-width=".6"/></svg>
<div class="t tr" style="left:916px;top:377.10px">Attachments</div>
<div class="t" style="left:1036.5px;top:144.8px;font-size:6.6px;color:#333">Parts</div>
<div class="t" style="left:1083px;top:144.5px;font-size:6.6px;color:#333">Nets</div>
<div class="t" style="left:1126px;top:144.5px;font-size:6.6px;color:#333">Libs</div>
<svg class="a" style="left:1026px;top:155px" width="133" height="60" viewBox="1026 155 133 60">
  <path d="M1030.5 159 h7.5 l1.5 1.5 v7.5 h-9z" fill="#a855c8"/>
  <rect x="1032.5" y="159.2" width="4.5" height="2.6" fill="#fff"/><rect x="1032.3" y="164.3" width="5" height="3.2" fill="#fff"/>
  <rect x="1045.5" y="159.5" width="5.5" height="6.5" fill="#fff" stroke="#555" stroke-width=".7"/>
  <rect x="1048" y="162" width="5.5" height="6.5" fill="#fff" stroke="#555" stroke-width=".7"/>
  <path d="M1049.5 165 h3" stroke="#2e9be0" stroke-width=".8"/>
  <circle cx="1063.5" cy="163.8" r="4.3" fill="#fff" stroke="#555" stroke-width=".7"/>
  <path d="M1063.5 162.5 v4" stroke="#2a70c0" stroke-width="1.1"/><circle cx="1063.5" cy="160.9" r=".6" fill="#2a70c0"/>
  <rect x="1074.5" y="159.5" width="4" height="4" fill="#f1c84a"/><rect x="1078.5" y="159.5" width="4" height="4" fill="#3fae4b"/>
  <rect x="1074.5" y="163.5" width="4" height="4.5" fill="#ef7d3f"/><rect x="1078.5" y="163.5" width="4" height="4.5" fill="#3b8ed4"/>
  <rect x="1089" y="160" width="8" height="8" fill="#fff" stroke="#555" stroke-width=".7"/>
  <rect x="1089" y="160" width="8" height="2" fill="#f05050"/><path d="M1093 162 v6" stroke="#555" stroke-width=".6"/>
  <rect x="1103.8" y="158.5" width="10" height="10" fill="#fff" stroke="#bbb" stroke-width=".7"/>
  <path d="M1106 163.5 l2 2.2 l3.8 -4.4" fill="none" stroke="#333" stroke-width="1"/>
  <rect x="1027" y="175.5" width="128" height="30" fill="#fff"/>
  <rect x="1027" y="175.5" width="17" height="30" fill="#f0f0f0"/>
  <rect x="1044" y="175.5" width="111" height="15" fill="#f4f4f4"/>
  <path d="M1027 190.5 h128 M1044 175.5 v30 M1074.5 175.5 v30 M1134 175.5 v30 M1154.5 175.5 v15 M1027 205.5 h17" stroke="#dcdcdc" stroke-width=".8"/>
  <path d="M1041.5 178.5 V187.5 H1032.5z" fill="#c8c8c8"/>
  <circle cx="1036.5" cy="197.2" r="2.6" fill="none" stroke="#2a6db0" stroke-width="1"/>
  <path d="M1034.7 199 l-1.8 1.8" stroke="#2a6db0" stroke-width="1.2"/>
  <circle cx="1066.8" cy="196.5" r="3.6" fill="none" stroke="#2a6db0" stroke-width="1.4"/>
  <path d="M1064.3 199 l-2.6 2.6" stroke="#2a6db0" stroke-width="1.6"/>
  <circle cx="1126.5" cy="196.5" r="3.6" fill="none" stroke="#2a6db0" stroke-width="1.4"/>
  <path d="M1124 199 l-2.6 2.6" stroke="#2a6db0" stroke-width="1.6"/>
</svg>
<div class="t" style="left:1116.5px;top:160.5px;font-size:6.6px;color:#333">Fit Selected</div>
<div class="t" style="left:1047.5px;top:180px;font-size:6.4px;color:#333">Ref.Des</div>
<div class="t" style="left:1077.5px;top:180px;font-size:6.4px;color:#333">Value</div>
<div class="t" style="left:1137.5px;top:180px;font-size:6.4px;color:#333">Pins</div>
<div class="t" style="left:1049px;top:195px;font-size:6.2px;color:#999">&lt;.</div>
<div class="t" style="left:1079px;top:195px;font-size:6.2px;color:#999">&lt;all&gt;</div>
<div class="a" style="left:1025px;top:702.5px;width:134px;height:18px;background:#f0f0f0"></div>
<div class="a" style="left:1042.5px;top:709.8px;width:82.5px;height:2.2px;border-radius:1px;background:#7a7a7a"></div>

<!-- RIGHT SIDEBAR -->
<div class="a" style="left:1162px;top:111px;width:38px;height:611px;background:#3c3c3c"></div>
<div class="a" style="left:1162px;top:147px;width:38px;height:35.5px;background:#ee0000"></div>
<svg class="a" style="left:1162px;top:111px" width="38" height="180" viewBox="1162 111 38 180" font-family="Liberation Sans">
  <path d="M1173.5 123 L1179.5 117.2 L1185.5 123 M1175 121.8 V128.5 H1178 V125 H1181 V128.5 H1184 V121.8" fill="none" stroke="#fff" stroke-width="1.1" stroke-linejoin="round"/>
  <circle cx="1179.5" cy="159.8" r="5.6" fill="none" stroke="#fff" stroke-width="1.1"/>
  <path d="M1178 156.5 L1182.5 159.5 L1180.3 160.2 L1181.5 162.5 L1180.5 163 L1179.4 160.8 L1178 162.2z" fill="#fff"/>
  <circle cx="1178.3" cy="193.8" r="3.8" fill="none" stroke="#fff" stroke-width="1.1"/>
  <path d="M1181 196.6 L1184.2 199.8" stroke="#fff" stroke-width="1.3"/>
  <path d="M1179.5 225.5 L1186 228.5 L1179.5 231.5 L1173 228.5z" fill="#fff"/>
  <path d="M1173 230.8 L1179.5 233.8 L1186 230.8 M1173 233 L1179.5 236 L1186 233" fill="none" stroke="#fff" stroke-width=".9"/>
  <path d="M1174 268 a6.2 4.8 0 1 1 3 3.4 l-3 2 z" fill="none" stroke="#fff" stroke-width="1"/>
  <path d="M1177.5 266 v3 M1179.5 264.5 v4.5 M1181.5 266 v3" stroke="#fff" stroke-width="1"/>
</svg>
<div class="t sb" style="left:1162.5px;top:135.8px">Home</div>
<div class="t sb" style="left:1162.5px;top:171.8px">Browser</div>
<div class="t sb" style="left:1162.5px;top:207.3px">Find</div>
<div class="t sb" style="left:1162.5px;top:242.8px">Layer</div>
<div class="t sb" style="left:1162.5px;top:278.8px">Review</div>


<!-- status bar -->

<div class="a" style="left:0;top:722px;width:1200px;height:22px;background:#d8181f"></div>
<div class="t st" style="left:2.5px">Ready</div>
<svg class="a" style="left:836px;top:724px" width="364" height="20" viewBox="836 724 364 20">
  <path d="M839 727 h5.5 l2.5 2.5 v10.5 h-8z" fill="none" stroke="#fff" stroke-width=".8"/>
  <path d="M840.5 733 h2 a2 2 0 0 1 0 4 h-2z" fill="none" stroke="#fff" stroke-width=".8"/>
  <path d="M838 735 h2.5 M845 735 h3" stroke="#fff" stroke-width=".8"/>
  <path d="M946 727.5 v10 M949 727.5 v10 M952 727.5 v10 M944 729.5 h10 M944 732.5 h10 M944 735.5 h10" stroke="#fff" stroke-width="1"/>
  <rect x="1170.5" y="727.5" width="10" height="10" rx="1" fill="none" stroke="#fff" stroke-width=".9"/>
  <circle cx="1173" cy="730" r=".9" fill="#fff"/><circle cx="1178" cy="730" r=".9" fill="#fff"/><circle cx="1175.5" cy="732.5" r=".9" fill="#fff"/><circle cx="1173" cy="735" r=".9" fill="#fff"/><circle cx="1178" cy="735" r=".9" fill="#fff"/>
  <rect x="1196" y="734" width="1.3" height="1.3" fill="#f4c0c0"/><rect x="1193" y="737" width="1.3" height="1.3" fill="#f4c0c0"/><rect x="1196" y="737" width="1.3" height="1.3" fill="#f4c0c0"/>
  <rect x="1190" y="740" width="1.3" height="1.3" fill="#f4c0c0"/><rect x="1193" y="740" width="1.3" height="1.3" fill="#f4c0c0"/><rect x="1196" y="740" width="1.3" height="1.3" fill="#f4c0c0"/>
</svg>
<div class="t st" style="left:851px">01.Description</div>
<div class="t st" style="left:957px">Grid: 0.05, 0.05</div>
<div class="t st" style="left:1031.5px">Abs: 145.034, 90.424</div>
<div class="t st" style="left:1136px">INCH</div>


</body></html>
